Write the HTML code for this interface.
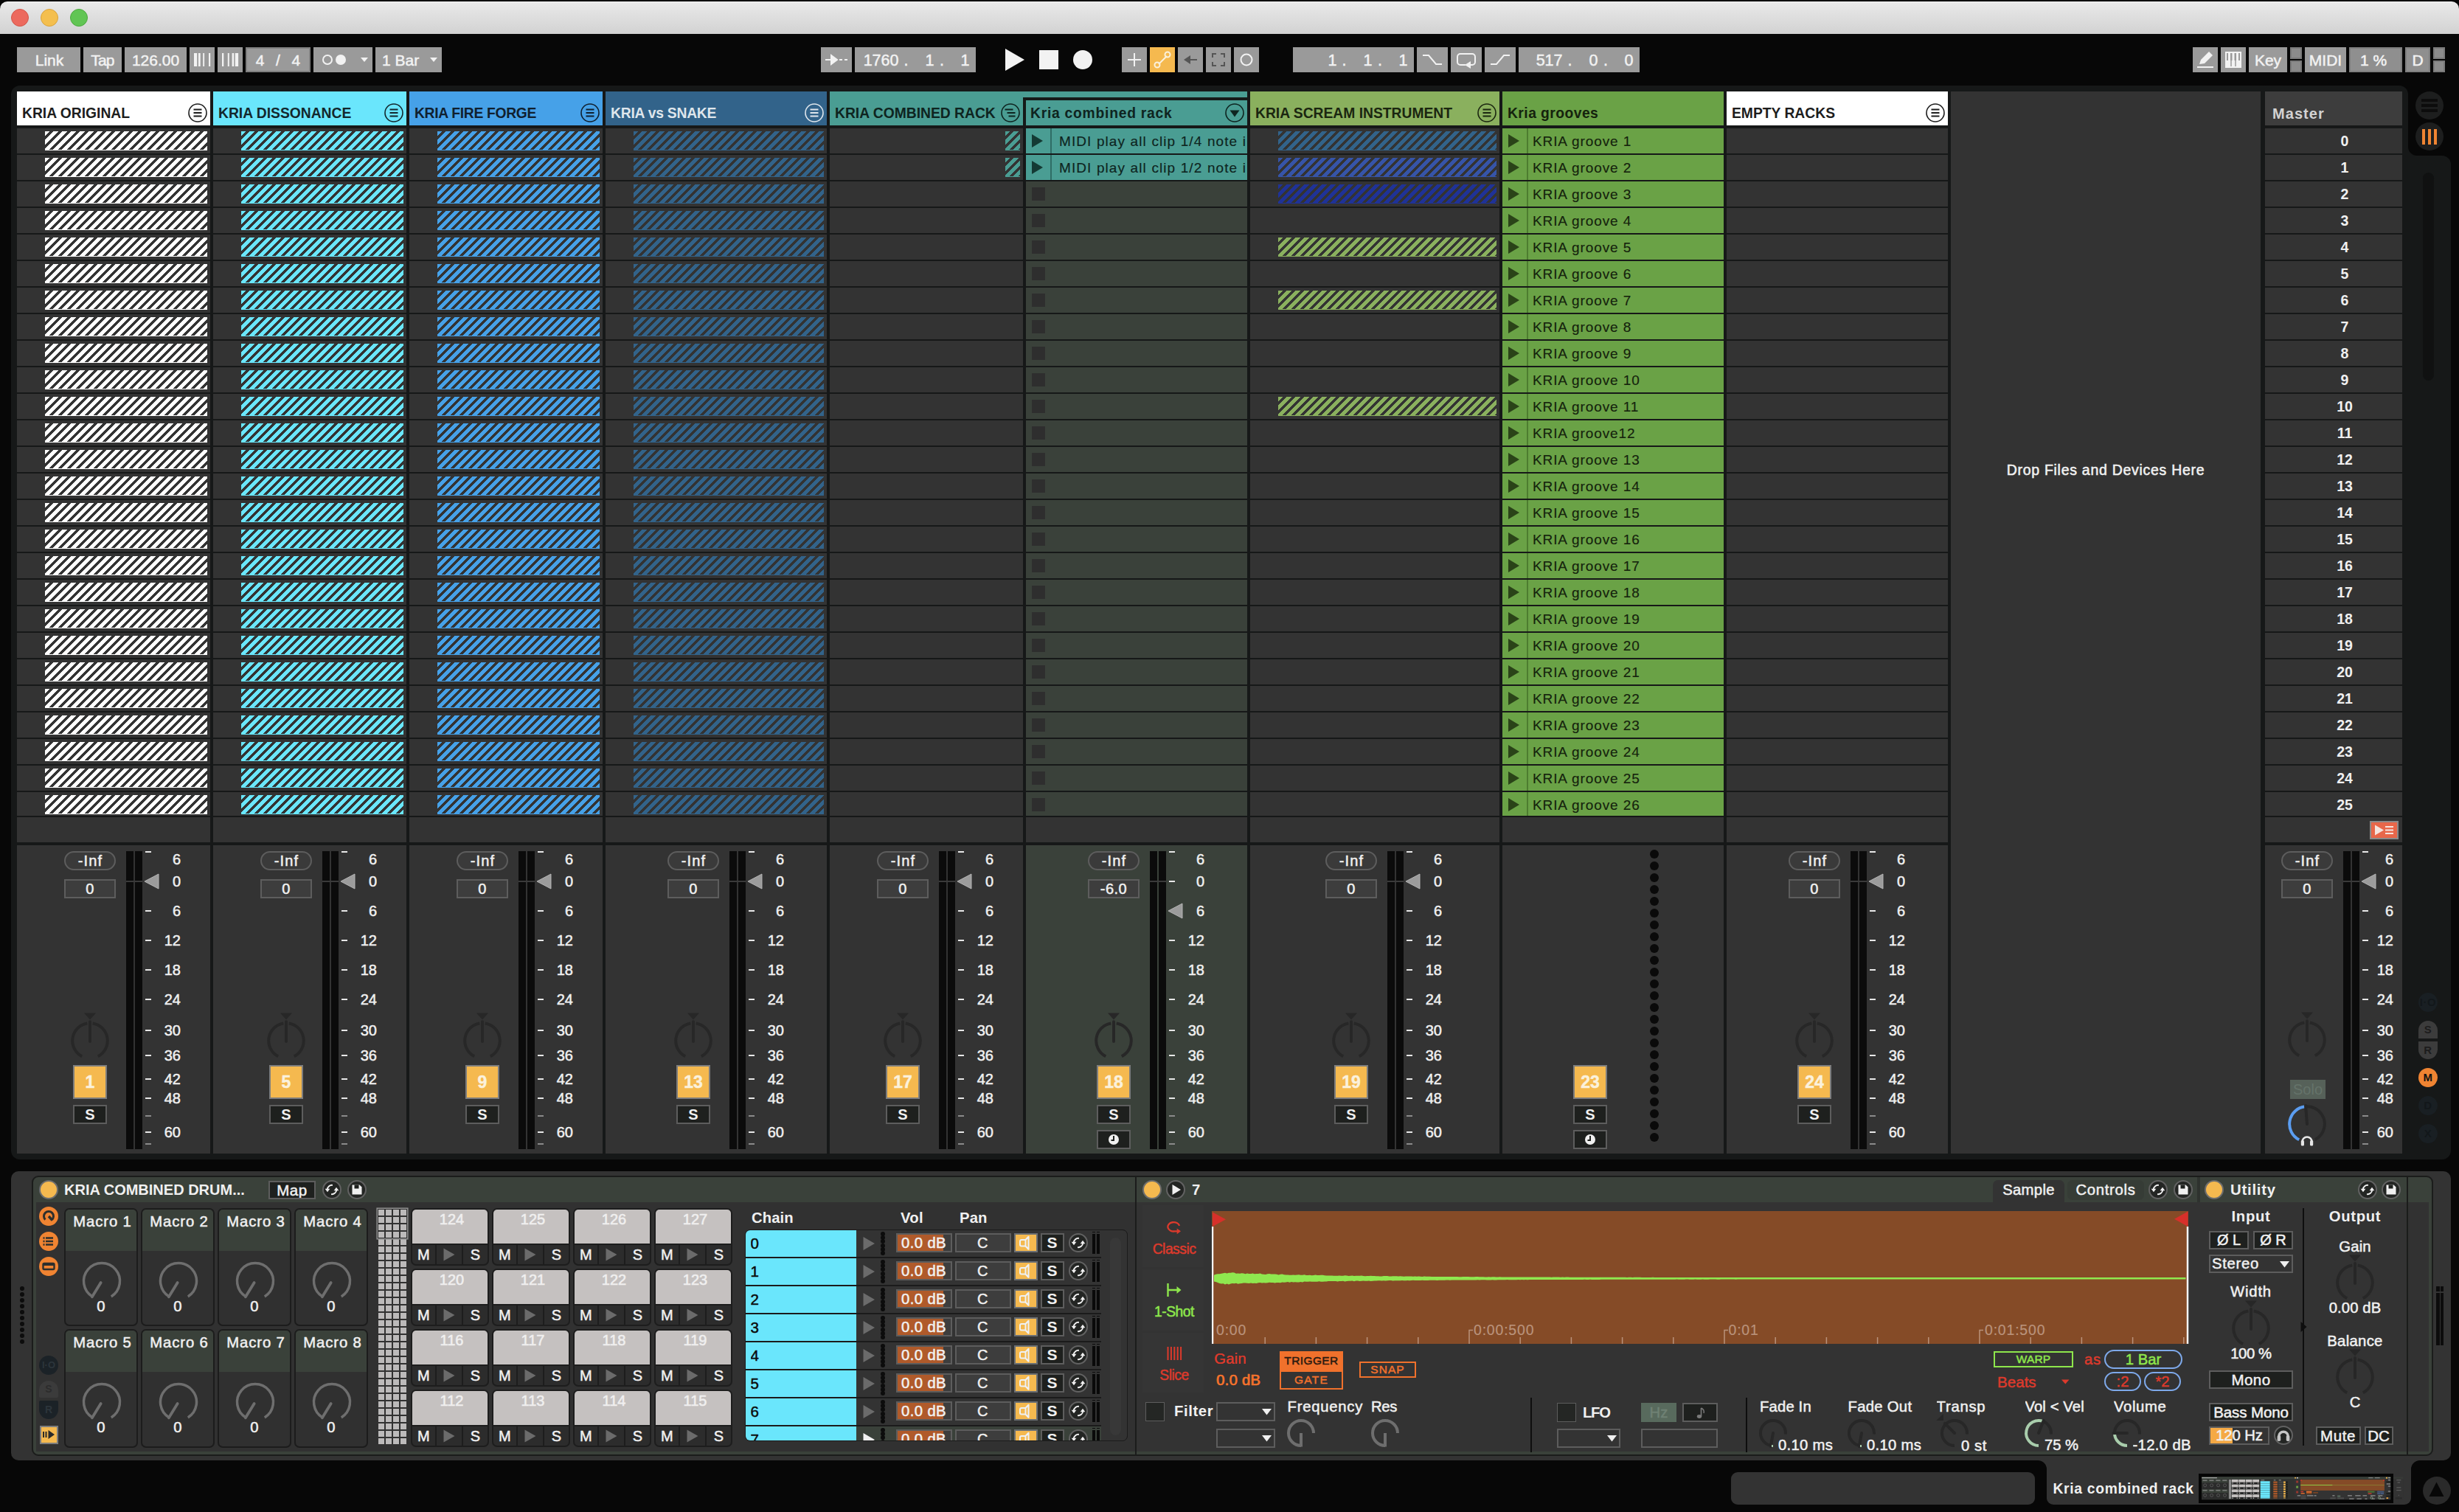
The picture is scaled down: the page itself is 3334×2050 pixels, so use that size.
<!DOCTYPE html><html><head><meta charset="utf-8"><title>Live</title><style>
html,body{margin:0;padding:0;background:#070707;}
body{width:3334px;height:2050px;position:relative;overflow:hidden;font-family:"Liberation Sans",sans-serif;font-size:19px;color:#f0f0f0;-webkit-text-stroke:.5px;}
div,svg{position:absolute;box-sizing:border-box;}
.t{white-space:nowrap;overflow:hidden;}
.c{text-align:center;}
.r{text-align:right;}
.b{font-weight:bold;-webkit-text-stroke:0;}
.ls{letter-spacing:.6px;}
.tb{background:#9a9a9a;color:#f2f2f2;font-size:21px;text-align:center;padding-top:1px;}
.slot{background:#333;}
.h{border-bottom:1.5px solid;}
.pill{border:2px solid #5d5d5d;border-radius:13px;background:#3a3a3a;text-align:center;font-size:20px;letter-spacing:1.2px;text-indent:1px;}
.vbox{border:2px solid #5d5d5d;background:#3d3d3d;text-align:center;font-size:20px;letter-spacing:.5px;}
.num{background:#f5b94f;border:2px solid #7d7d7d;text-align:center;font-size:23px;font-weight:bold;color:#fbf1dc;}
.sb{background:#1e201e;border:2px solid #5d5d5d;text-align:center;font-size:20px;font-weight:bold;-webkit-text-stroke:0;}
.sc{font-size:20px;text-align:right;}
.tk{background:#e8e8e8;height:2px;width:8px;}
.tkd{background:#8a8a8a;height:2px;width:8px;}
.mt{background:#0b0b0b;}
.mac{background:#303030;border:2px solid #1c1c1c;border-radius:7px;overflow:hidden;}
.mach{background:#3a413a;left:0;top:0;width:100%;height:56px;}
.pad{background:#c5c1c0;border-radius:5px 5px 0 0;color:#f0efef;-webkit-text-stroke:.6px;font-size:20px;text-align:center;}
.padb{background:#2c2c2c;text-align:center;font-size:20px;}
.dk{background:#1e201e;border:2px solid #5d5d5d;text-align:center;font-size:20px;}
.dd{border:2px solid #5d5d5d;background:#333;}
.lb{font-size:20px;letter-spacing:.5px;}
</style></head><body>
<div style="left:0px;top:2px;width:3334px;height:44px;background:linear-gradient(#e9e9e9,#d2d2d2);border-radius:10px 10px 0 0;border-top:1px solid #f4f4f4;"></div>
<div style="left:15px;top:12px;width:24px;height:24px;background:#ec6a5e;border:1px solid #d2564a;border-radius:50%;"></div>
<div style="left:55px;top:12px;width:24px;height:24px;background:#f4bf4f;border:1px solid #d9a33c;border-radius:50%;"></div>
<div style="left:95px;top:12px;width:24px;height:24px;background:#61c554;border:1px solid #4ca93f;border-radius:50%;"></div>
<div class="t tb " style="left:23px;top:64px;width:86px;height:34px;line-height:34px;padding-left:2px;">Link</div>
<div class="t tb " style="left:113px;top:64px;width:52px;height:34px;line-height:34px;letter-spacing:-.8px;">Tap</div>
<div class="t tb " style="left:169px;top:64px;width:84px;height:34px;line-height:34px;">126.00</div>
<div class="tb" style="left:257px;top:64px;width:34px;height:34px;"></div>
<svg style="left:257px;top:64px" width="34" height="34"><rect x="6" y="8" width="4.2" height="18" fill="#f2f2f2"/><rect x="12" y="8" width="2.7" height="18" fill="#f2f2f2"/><rect x="18.2" y="8" width="1.9" height="18" fill="#f2f2f2"/><rect x="26" y="8" width="2.2" height="18" fill="#f2f2f2"/></svg>
<div class="tb" style="left:295px;top:64px;width:34px;height:34px;"></div>
<svg style="left:295px;top:64px" width="34" height="34"><rect x="6" y="8" width="2.3" height="18" fill="#f2f2f2"/><rect x="13.8" y="8" width="2" height="18" fill="#f2f2f2"/><rect x="19.6" y="8" width="2.6" height="18" fill="#f2f2f2"/><rect x="23.8" y="8" width="4.3" height="18" fill="#f2f2f2"/></svg>
<div class="t tb" style="left:333px;top:64px;width:88px;height:34px;line-height:34px;border:2px solid #7f7f7f;line-height:30px;word-spacing:2px;">4&nbsp; /&nbsp; 4</div>
<div class="tb" style="left:425px;top:64px;width:80px;height:34px;"></div>
<svg style="left:425px;top:64px" width="80" height="34"><circle cx="19" cy="17" r="6" fill="none" stroke="#f2f2f2" stroke-width="2"/><circle cx="37" cy="17" r="7" fill="#f2f2f2"/><path d="M64 14h10l-5 6z" fill="#f2f2f2"/></svg>
<div class="t tb" style="left:509px;top:64px;width:90px;height:34px;line-height:34px;text-align:left;padding-left:9px;">1 Bar</div>
<svg style="left:509px;top:64px" width="90" height="34"><path d="M74 14h10l-5 6z" fill="#f2f2f2"/></svg>
<div class="tb" style="left:1113px;top:64px;width:42px;height:34px;"></div>
<svg style="left:1113px;top:64px" width="42" height="34"><path d="M6 17h14M14 11l8 6-8 6z" stroke="#f2f2f2" stroke-width="2" fill="#f2f2f2"/><path d="M25 17h4M32 17h4" stroke="#f2f2f2" stroke-width="2"/></svg>
<div class="tb" style="left:1159px;top:64px;width:164px;height:34px;"></div>
<div class="t tb" style="left:1159px;top:64px;width:164px;height:34px;line-height:34px;background:none;font-size:21.5px;"><span style="position:absolute;right:104.5px">1760</span><span style="position:absolute;left:66.5px">.</span><span style="position:absolute;right:56.5px">1</span><span style="position:absolute;left:115px">.</span><span style="position:absolute;right:8.5px">1</span></div>
<svg style="left:1355px;top:60px" width="130" height="42"><path d="M8 6v30l26-15z" fill="#f2f2f2"/><rect x="54" y="8" width="26" height="26" fill="#f2f2f2"/><circle cx="113" cy="21" r="13" fill="#f2f2f2"/></svg>
<div class="tb" style="left:1521px;top:64px;width:34px;height:34px;"></div>
<div class="tb" style="left:1559px;top:64px;width:34px;height:34px;background:#f5b94f;"></div>
<div class="tb" style="left:1597px;top:64px;width:34px;height:34px;"></div>
<div class="tb" style="left:1635px;top:64px;width:34px;height:34px;"></div>
<div class="tb" style="left:1673px;top:64px;width:34px;height:34px;"></div>
<svg style="left:1521px;top:64px" width="34" height="34"><path d="M17 8v18M8 17h18" stroke="#f2f2f2" stroke-width="2"/></svg>
<svg style="left:1559px;top:64px" width="34" height="34"><path d="M12 23L23 12" stroke="#fbf1dc" stroke-width="2"/><circle cx="10" cy="24" r="3.5" fill="none" stroke="#fbf1dc" stroke-width="2"/><circle cx="24" cy="10" r="3.5" fill="none" stroke="#fbf1dc" stroke-width="2"/></svg>
<svg style="left:1597px;top:64px" width="34" height="34"><path d="M26 17H14" stroke="#555" stroke-width="2"/><path d="M17 11l-9 6 9 6z" fill="#555"/></svg>
<svg style="left:1635px;top:64px" width="34" height="34"><path d="M9 14V9h5M20 9h5v5M25 20v5h-5M14 25H9v-5" stroke="#555" stroke-width="2" fill="none"/></svg>
<svg style="left:1673px;top:64px" width="34" height="34"><circle cx="17" cy="17" r="7.5" fill="none" stroke="#f2f2f2" stroke-width="2"/></svg>
<div class="tb" style="left:1753px;top:64px;width:164px;height:34px;"></div>
<div class="t tb" style="left:1753px;top:64px;width:164px;height:34px;line-height:34px;background:none;font-size:21.5px;"><span style="position:absolute;right:104.5px">1</span><span style="position:absolute;left:66.5px">.</span><span style="position:absolute;right:56.5px">1</span><span style="position:absolute;left:115px">.</span><span style="position:absolute;right:8.5px">1</span></div>
<div class="tb" style="left:1921px;top:64px;width:42px;height:34px;"></div>
<svg style="left:1921px;top:64px" width="42" height="34"><path d="M8 11h8l10 12h8" stroke="#f2f2f2" stroke-width="2" fill="none"/></svg>
<div class="tb" style="left:1967px;top:64px;width:42px;height:34px;"></div>
<svg style="left:1967px;top:64px" width="42" height="34"><path d="M20 24h-7a4 4 0 0 1-4-4v-7a4 4 0 0 1 4-4h16a4 4 0 0 1 4 4v7a4 4 0 0 1-4 4h-2" stroke="#f2f2f2" stroke-width="2" fill="none"/><path d="M27 19v10l-8-5z" fill="#f2f2f2"/></svg>
<div class="tb" style="left:2013px;top:64px;width:42px;height:34px;"></div>
<svg style="left:2013px;top:64px" width="42" height="34"><path d="M8 23h8l10-12h8" stroke="#f2f2f2" stroke-width="2" fill="none"/></svg>
<div class="tb" style="left:2059px;top:64px;width:164px;height:34px;"></div>
<div class="t tb" style="left:2059px;top:64px;width:164px;height:34px;line-height:34px;background:none;font-size:21.5px;"><span style="position:absolute;right:104.5px">517</span><span style="position:absolute;left:66.5px">.</span><span style="position:absolute;right:56.5px">0</span><span style="position:absolute;left:115px">.</span><span style="position:absolute;right:8.5px">0</span></div>
<div class="tb" style="left:2973px;top:64px;width:34px;height:34px;"></div>
<svg style="left:2973px;top:64px" width="34" height="34"><path d="M6 27h22" stroke="#f2f2f2" stroke-width="2"/><path d="M9 23l2-6 11-11 5 5-11 11z" fill="#f2f2f2"/></svg>
<div class="tb" style="left:3011px;top:64px;width:34px;height:34px;"></div>
<svg style="left:3011px;top:64px" width="34" height="34"><rect x="7" y="7" width="20" height="20" fill="none" stroke="#f2f2f2" stroke-width="2"/><path d="M8 18h18v8H8zM10 8h3v10h-3zM15.5 8h3v10h-3zM21 8h3v10h-3z" fill="#f2f2f2"/><path d="M14 18v8M20 18v8" stroke="#9a9a9a" stroke-width="1.5"/></svg>
<div class="t tb " style="left:3049px;top:64px;width:52px;height:34px;line-height:34px;">Key</div>
<div style="left:3105px;top:64px;width:16px;height:16px;background:#8b8b8b;border:2px solid #7a7a7a;"></div>
<div style="left:3105px;top:82px;width:16px;height:16px;background:#8b8b8b;border:2px solid #7a7a7a;"></div>
<div style="left:3299px;top:64px;width:16px;height:16px;background:#8b8b8b;border:2px solid #7a7a7a;"></div>
<div style="left:3299px;top:82px;width:16px;height:16px;background:#8b8b8b;border:2px solid #7a7a7a;"></div>
<div class="t tb " style="left:3125px;top:64px;width:56px;height:34px;line-height:34px;">MIDI</div>
<div class="t tb" style="left:3185px;top:64px;width:72px;height:34px;line-height:34px;border:2px solid #7f7f7f;line-height:30px;background:#8f8f8f;padding-right:6px;">1 %</div>
<div class="t tb" style="left:3261px;top:64px;width:34px;height:34px;line-height:34px;border:2px solid #7f7f7f;line-height:30px;background:#8f8f8f;">D</div>
<div style="left:15px;top:116px;width:3250px;height:1456px;background:#161818;border-radius:12px 12px 0 12px;"></div>
<div style="left:3255px;top:211px;width:68px;height:1361px;background:#161818;border-radius:0 12px 12px 0;"></div>
<svg style="left:3265px;top:199px" width="12" height="12"><path d="M0 0v12h12A12 12 0 0 1 0 0z" fill="#161818"/></svg>
<div style="left:23px;top:124px;width:262px;height:46px;background:#ffffff;"></div>
<div class="t b" style="left:30px;top:137px;width:222px;height:34px;line-height:34px;color:#1d1d1d;font-size:19.3px;">KRIA ORIGINAL</div>
<svg style="left:254px;top:139px" width="28" height="28"><circle cx="14" cy="14" r="12" fill="none" stroke="#1d1d1d" stroke-width="1.6"/><path d="M8.5 9.5h11M8.5 14h11M8.5 18.5h11" stroke="#1d1d1d" stroke-width="2"/></svg>
<div style="left:289px;top:124px;width:262px;height:46px;background:#6ae6fc;"></div>
<div class="t b" style="left:296px;top:137px;width:222px;height:34px;line-height:34px;color:#13272c;font-size:19.3px;">KRIA DISSONANCE</div>
<svg style="left:520px;top:139px" width="28" height="28"><circle cx="14" cy="14" r="12" fill="none" stroke="#13272c" stroke-width="1.6"/><path d="M8.5 9.5h11M8.5 14h11M8.5 18.5h11" stroke="#13272c" stroke-width="2"/></svg>
<div style="left:555px;top:124px;width:262px;height:46px;background:#46a1e8;"></div>
<div class="t b" style="left:562px;top:137px;width:222px;height:34px;line-height:34px;color:#10202f;font-size:19.3px;letter-spacing:-.3px;">KRIA FIRE FORGE</div>
<svg style="left:786px;top:139px" width="28" height="28"><circle cx="14" cy="14" r="12" fill="none" stroke="#10202f" stroke-width="1.6"/><path d="M8.5 9.5h11M8.5 14h11M8.5 18.5h11" stroke="#10202f" stroke-width="2"/></svg>
<div style="left:821px;top:124px;width:300px;height:46px;background:#32638a;"></div>
<div class="t b" style="left:828px;top:137px;width:260px;height:34px;line-height:34px;color:#dfe6ec;font-size:19.3px;letter-spacing:-.22px;">KRIA vs SNAKE</div>
<svg style="left:1090px;top:139px" width="28" height="28"><circle cx="14" cy="14" r="12" fill="none" stroke="#dfe6ec" stroke-width="1.6"/><path d="M8.5 9.5h11M8.5 14h11M8.5 18.5h11" stroke="#dfe6ec" stroke-width="2"/></svg>
<div style="left:1125px;top:124px;width:566px;height:46px;background:#4a9d93;"></div>
<div style="left:1387px;top:132px;width:304px;height:38px;background:#151a19;"></div>
<div style="left:1391px;top:136px;width:300px;height:34px;background:#4a9d93;"></div>
<div class="t b" style="left:1132px;top:137px;width:230px;height:34px;line-height:34px;color:#0e2420;font-size:19.3px;">KRIA COMBINED RACK</div>
<svg style="left:1356px;top:139px" width="28" height="28"><circle cx="14" cy="14" r="12" fill="none" stroke="#0e2420" stroke-width="1.6"/><path d="M6.5 9.5h11M9.5 14h11M11.5 18.5h9" stroke="#0e2420" stroke-width="2"/></svg>
<div class="t b" style="left:1397px;top:137px;width:250px;height:34px;line-height:34px;color:#0e2420;font-size:19.3px;letter-spacing:.75px;">Kria combined rack</div>
<svg style="left:1660px;top:139px" width="28" height="28"><circle cx="14" cy="14" r="12" fill="none" stroke="#0e2420" stroke-width="1.6"/><path d="M7.5 10.5h13l-6.5 9z" fill="#0e2420"/></svg>
<div style="left:1695px;top:124px;width:338px;height:46px;background:#8ab05e;"></div>
<div class="t b" style="left:1702px;top:137px;width:298px;height:34px;line-height:34px;color:#1b2610;font-size:19.3px;">KRIA SCREAM INSTRUMENT</div>
<svg style="left:2002px;top:139px" width="28" height="28"><circle cx="14" cy="14" r="12" fill="none" stroke="#1b2610" stroke-width="1.6"/><path d="M8.5 9.5h11M8.5 14h11M8.5 18.5h11" stroke="#1b2610" stroke-width="2"/></svg>
<div style="left:2037px;top:124px;width:300px;height:46px;background:#6aa246;"></div>
<div class="t b" style="left:2044px;top:137px;width:260px;height:34px;line-height:34px;color:#15230d;font-size:19.3px;letter-spacing:.45px;">Kria grooves</div>
<div style="left:2341px;top:124px;width:300px;height:46px;background:#ffffff;"></div>
<div class="t b" style="left:2348px;top:137px;width:260px;height:34px;line-height:34px;color:#1d1d1d;font-size:19.3px;">EMPTY RACKS</div>
<svg style="left:2610px;top:139px" width="28" height="28"><circle cx="14" cy="14" r="12" fill="none" stroke="#1d1d1d" stroke-width="1.6"/><path d="M8.5 9.5h11M8.5 14h11M8.5 18.5h11" stroke="#1d1d1d" stroke-width="2"/></svg>
<div class="slot" style="left:2645px;top:124px;width:420px;height:1440px;"></div>
<div class="t c" style="left:2645px;top:620px;width:420px;height:34px;line-height:34px;font-size:19.5px;letter-spacing:.72px;-webkit-text-stroke:.55px;">Drop Files and Devices Here</div>
<div style="left:3071px;top:124px;width:186px;height:46px;background:#3d3d3d;"></div>
<div class="t b" style="left:3081px;top:137px;width:150px;height:34px;line-height:34px;color:#d2d2d2;font-size:20px;letter-spacing:1.05px;">Master</div>
<div class="slot" style="left:23px;top:174px;width:262px;height:34px;"></div>
<div class="h" style="left:61px;top:178px;width:220px;height:26px;border-color:#ffffff;background:repeating-linear-gradient(135deg,#ffffff 0,#ffffff 4.3px,#333 4.3px,#333 7.9px,#ffffff 7.9px,#ffffff 8.485px);"></div>
<div class="slot" style="left:289px;top:174px;width:262px;height:34px;"></div>
<div class="h" style="left:327px;top:178px;width:220px;height:26px;border-color:#6ae6fc;background:repeating-linear-gradient(135deg,#6ae6fc 0,#6ae6fc 4.3px,#333 4.3px,#333 7.9px,#6ae6fc 7.9px,#6ae6fc 8.485px);"></div>
<div class="slot" style="left:555px;top:174px;width:262px;height:34px;"></div>
<div class="h" style="left:593px;top:178px;width:220px;height:26px;border-color:#46a1e8;background:repeating-linear-gradient(135deg,#46a1e8 0,#46a1e8 4.3px,#333 4.3px,#333 7.9px,#46a1e8 7.9px,#46a1e8 8.485px);"></div>
<div class="slot" style="left:821px;top:174px;width:300px;height:34px;"></div>
<div class="h" style="left:859px;top:178px;width:258px;height:26px;border-color:#32638a;background:repeating-linear-gradient(135deg,#32638a 0,#32638a 4.3px,#333 4.3px,#333 7.9px,#32638a 7.9px,#32638a 8.485px);"></div>
<div class="slot" style="left:1125px;top:174px;width:262px;height:34px;"></div>
<div class="h" style="left:1363px;top:178px;width:20px;height:26px;border-color:#4a9d93;background:repeating-linear-gradient(135deg,#4a9d93 0,#4a9d93 4.3px,#333 4.3px,#333 7.9px,#4a9d93 7.9px,#4a9d93 8.485px);"></div>
<div style="left:1391px;top:174px;width:300px;height:34px;background:#4a9d93;"></div>
<div style="left:1424px;top:174px;width:1.5px;height:34px;background:#2f6d66;"></div>
<svg style="left:1399px;top:182px" width="16" height="18"><path d="M0 0v18l15-9z" fill="#143a34"/></svg>
<div class="t" style="left:1436px;top:174px;width:255px;height:34px;line-height:34px;color:#0e2420;letter-spacing:1.05px;word-spacing:.3px;padding-top:1px;-webkit-text-stroke:.15px;">MIDI play all clip 1/4 note i</div>
<div class="slot" style="left:1695px;top:174px;width:338px;height:34px;"></div>
<div class="h" style="left:1733px;top:178px;width:296px;height:26px;border-color:#32638a;background:repeating-linear-gradient(135deg,#32638a 0,#32638a 4.3px,#333 4.3px,#333 7.9px,#32638a 7.9px,#32638a 8.485px);"></div>
<div style="left:2037px;top:174px;width:300px;height:34px;background:#6aa246;"></div>
<div style="left:2070px;top:174px;width:1.5px;height:34px;background:#4d7d30;"></div>
<svg style="left:2045px;top:182px" width="16" height="18"><path d="M0 0v18l15-9z" fill="#2a4318"/></svg>
<div class="t" style="left:2078px;top:174px;width:259px;height:34px;line-height:34px;color:#15230d;letter-spacing:.9px;padding-top:1px;-webkit-text-stroke:.15px;">KRIA groove 1</div>
<div class="slot" style="left:2341px;top:174px;width:300px;height:34px;"></div>
<div class="slot" style="left:3071px;top:174px;width:186px;height:34px;"></div>
<div class="t b" style="left:3071px;top:174px;width:186px;height:34px;line-height:34px;text-align:center;padding-left:30px;font-size:19.5px;">0</div>
<div class="slot" style="left:23px;top:210px;width:262px;height:34px;"></div>
<div class="h" style="left:61px;top:214px;width:220px;height:26px;border-color:#ffffff;background:repeating-linear-gradient(135deg,#ffffff 0,#ffffff 4.3px,#333 4.3px,#333 7.9px,#ffffff 7.9px,#ffffff 8.485px);"></div>
<div class="slot" style="left:289px;top:210px;width:262px;height:34px;"></div>
<div class="h" style="left:327px;top:214px;width:220px;height:26px;border-color:#6ae6fc;background:repeating-linear-gradient(135deg,#6ae6fc 0,#6ae6fc 4.3px,#333 4.3px,#333 7.9px,#6ae6fc 7.9px,#6ae6fc 8.485px);"></div>
<div class="slot" style="left:555px;top:210px;width:262px;height:34px;"></div>
<div class="h" style="left:593px;top:214px;width:220px;height:26px;border-color:#46a1e8;background:repeating-linear-gradient(135deg,#46a1e8 0,#46a1e8 4.3px,#333 4.3px,#333 7.9px,#46a1e8 7.9px,#46a1e8 8.485px);"></div>
<div class="slot" style="left:821px;top:210px;width:300px;height:34px;"></div>
<div class="h" style="left:859px;top:214px;width:258px;height:26px;border-color:#32638a;background:repeating-linear-gradient(135deg,#32638a 0,#32638a 4.3px,#333 4.3px,#333 7.9px,#32638a 7.9px,#32638a 8.485px);"></div>
<div class="slot" style="left:1125px;top:210px;width:262px;height:34px;"></div>
<div class="h" style="left:1363px;top:214px;width:20px;height:26px;border-color:#4a9d93;background:repeating-linear-gradient(135deg,#4a9d93 0,#4a9d93 4.3px,#333 4.3px,#333 7.9px,#4a9d93 7.9px,#4a9d93 8.485px);"></div>
<div style="left:1391px;top:210px;width:300px;height:34px;background:#4a9d93;"></div>
<div style="left:1424px;top:210px;width:1.5px;height:34px;background:#2f6d66;"></div>
<svg style="left:1399px;top:218px" width="16" height="18"><path d="M0 0v18l15-9z" fill="#143a34"/></svg>
<div class="t" style="left:1436px;top:210px;width:255px;height:34px;line-height:34px;color:#0e2420;letter-spacing:1.05px;word-spacing:.3px;padding-top:1px;-webkit-text-stroke:.15px;">MIDI play all clip 1/2 note i</div>
<div class="slot" style="left:1695px;top:210px;width:338px;height:34px;"></div>
<div class="h" style="left:1733px;top:214px;width:296px;height:26px;border-color:#3654a8;background:repeating-linear-gradient(135deg,#3654a8 0,#3654a8 4.3px,#333 4.3px,#333 7.9px,#3654a8 7.9px,#3654a8 8.485px);"></div>
<div style="left:2037px;top:210px;width:300px;height:34px;background:#6aa246;"></div>
<div style="left:2070px;top:210px;width:1.5px;height:34px;background:#4d7d30;"></div>
<svg style="left:2045px;top:218px" width="16" height="18"><path d="M0 0v18l15-9z" fill="#2a4318"/></svg>
<div class="t" style="left:2078px;top:210px;width:259px;height:34px;line-height:34px;color:#15230d;letter-spacing:.9px;padding-top:1px;-webkit-text-stroke:.15px;">KRIA groove 2</div>
<div class="slot" style="left:2341px;top:210px;width:300px;height:34px;"></div>
<div class="slot" style="left:3071px;top:210px;width:186px;height:34px;"></div>
<div class="t b" style="left:3071px;top:210px;width:186px;height:34px;line-height:34px;text-align:center;padding-left:30px;font-size:19.5px;">1</div>
<div class="slot" style="left:23px;top:246px;width:262px;height:34px;"></div>
<div class="h" style="left:61px;top:250px;width:220px;height:26px;border-color:#ffffff;background:repeating-linear-gradient(135deg,#ffffff 0,#ffffff 4.3px,#333 4.3px,#333 7.9px,#ffffff 7.9px,#ffffff 8.485px);"></div>
<div class="slot" style="left:289px;top:246px;width:262px;height:34px;"></div>
<div class="h" style="left:327px;top:250px;width:220px;height:26px;border-color:#6ae6fc;background:repeating-linear-gradient(135deg,#6ae6fc 0,#6ae6fc 4.3px,#333 4.3px,#333 7.9px,#6ae6fc 7.9px,#6ae6fc 8.485px);"></div>
<div class="slot" style="left:555px;top:246px;width:262px;height:34px;"></div>
<div class="h" style="left:593px;top:250px;width:220px;height:26px;border-color:#46a1e8;background:repeating-linear-gradient(135deg,#46a1e8 0,#46a1e8 4.3px,#333 4.3px,#333 7.9px,#46a1e8 7.9px,#46a1e8 8.485px);"></div>
<div class="slot" style="left:821px;top:246px;width:300px;height:34px;"></div>
<div class="h" style="left:859px;top:250px;width:258px;height:26px;border-color:#32638a;background:repeating-linear-gradient(135deg,#32638a 0,#32638a 4.3px,#333 4.3px,#333 7.9px,#32638a 7.9px,#32638a 8.485px);"></div>
<div class="slot" style="left:1125px;top:246px;width:262px;height:34px;"></div>
<div style="left:1391px;top:246px;width:300px;height:34px;background:#3a413a;"></div>
<div style="left:1399px;top:254px;width:18px;height:18px;background:#2e2e2e;"></div>
<div class="slot" style="left:1695px;top:246px;width:338px;height:34px;"></div>
<div class="h" style="left:1733px;top:250px;width:296px;height:26px;border-color:#1f3297;background:repeating-linear-gradient(135deg,#1f3297 0,#1f3297 4.3px,#333 4.3px,#333 7.9px,#1f3297 7.9px,#1f3297 8.485px);"></div>
<div style="left:2037px;top:246px;width:300px;height:34px;background:#6aa246;"></div>
<div style="left:2070px;top:246px;width:1.5px;height:34px;background:#4d7d30;"></div>
<svg style="left:2045px;top:254px" width="16" height="18"><path d="M0 0v18l15-9z" fill="#2a4318"/></svg>
<div class="t" style="left:2078px;top:246px;width:259px;height:34px;line-height:34px;color:#15230d;letter-spacing:.9px;padding-top:1px;-webkit-text-stroke:.15px;">KRIA groove 3</div>
<div class="slot" style="left:2341px;top:246px;width:300px;height:34px;"></div>
<div class="slot" style="left:3071px;top:246px;width:186px;height:34px;"></div>
<div class="t b" style="left:3071px;top:246px;width:186px;height:34px;line-height:34px;text-align:center;padding-left:30px;font-size:19.5px;">2</div>
<div class="slot" style="left:23px;top:282px;width:262px;height:34px;"></div>
<div class="h" style="left:61px;top:286px;width:220px;height:26px;border-color:#ffffff;background:repeating-linear-gradient(135deg,#ffffff 0,#ffffff 4.3px,#333 4.3px,#333 7.9px,#ffffff 7.9px,#ffffff 8.485px);"></div>
<div class="slot" style="left:289px;top:282px;width:262px;height:34px;"></div>
<div class="h" style="left:327px;top:286px;width:220px;height:26px;border-color:#6ae6fc;background:repeating-linear-gradient(135deg,#6ae6fc 0,#6ae6fc 4.3px,#333 4.3px,#333 7.9px,#6ae6fc 7.9px,#6ae6fc 8.485px);"></div>
<div class="slot" style="left:555px;top:282px;width:262px;height:34px;"></div>
<div class="h" style="left:593px;top:286px;width:220px;height:26px;border-color:#46a1e8;background:repeating-linear-gradient(135deg,#46a1e8 0,#46a1e8 4.3px,#333 4.3px,#333 7.9px,#46a1e8 7.9px,#46a1e8 8.485px);"></div>
<div class="slot" style="left:821px;top:282px;width:300px;height:34px;"></div>
<div class="h" style="left:859px;top:286px;width:258px;height:26px;border-color:#32638a;background:repeating-linear-gradient(135deg,#32638a 0,#32638a 4.3px,#333 4.3px,#333 7.9px,#32638a 7.9px,#32638a 8.485px);"></div>
<div class="slot" style="left:1125px;top:282px;width:262px;height:34px;"></div>
<div style="left:1391px;top:282px;width:300px;height:34px;background:#3a413a;"></div>
<div style="left:1399px;top:290px;width:18px;height:18px;background:#2e2e2e;"></div>
<div class="slot" style="left:1695px;top:282px;width:338px;height:34px;"></div>
<div style="left:2037px;top:282px;width:300px;height:34px;background:#6aa246;"></div>
<div style="left:2070px;top:282px;width:1.5px;height:34px;background:#4d7d30;"></div>
<svg style="left:2045px;top:290px" width="16" height="18"><path d="M0 0v18l15-9z" fill="#2a4318"/></svg>
<div class="t" style="left:2078px;top:282px;width:259px;height:34px;line-height:34px;color:#15230d;letter-spacing:.9px;padding-top:1px;-webkit-text-stroke:.15px;">KRIA groove 4</div>
<div class="slot" style="left:2341px;top:282px;width:300px;height:34px;"></div>
<div class="slot" style="left:3071px;top:282px;width:186px;height:34px;"></div>
<div class="t b" style="left:3071px;top:282px;width:186px;height:34px;line-height:34px;text-align:center;padding-left:30px;font-size:19.5px;">3</div>
<div class="slot" style="left:23px;top:318px;width:262px;height:34px;"></div>
<div class="h" style="left:61px;top:322px;width:220px;height:26px;border-color:#ffffff;background:repeating-linear-gradient(135deg,#ffffff 0,#ffffff 4.3px,#333 4.3px,#333 7.9px,#ffffff 7.9px,#ffffff 8.485px);"></div>
<div class="slot" style="left:289px;top:318px;width:262px;height:34px;"></div>
<div class="h" style="left:327px;top:322px;width:220px;height:26px;border-color:#6ae6fc;background:repeating-linear-gradient(135deg,#6ae6fc 0,#6ae6fc 4.3px,#333 4.3px,#333 7.9px,#6ae6fc 7.9px,#6ae6fc 8.485px);"></div>
<div class="slot" style="left:555px;top:318px;width:262px;height:34px;"></div>
<div class="h" style="left:593px;top:322px;width:220px;height:26px;border-color:#46a1e8;background:repeating-linear-gradient(135deg,#46a1e8 0,#46a1e8 4.3px,#333 4.3px,#333 7.9px,#46a1e8 7.9px,#46a1e8 8.485px);"></div>
<div class="slot" style="left:821px;top:318px;width:300px;height:34px;"></div>
<div class="h" style="left:859px;top:322px;width:258px;height:26px;border-color:#32638a;background:repeating-linear-gradient(135deg,#32638a 0,#32638a 4.3px,#333 4.3px,#333 7.9px,#32638a 7.9px,#32638a 8.485px);"></div>
<div class="slot" style="left:1125px;top:318px;width:262px;height:34px;"></div>
<div style="left:1391px;top:318px;width:300px;height:34px;background:#3a413a;"></div>
<div style="left:1399px;top:326px;width:18px;height:18px;background:#2e2e2e;"></div>
<div class="slot" style="left:1695px;top:318px;width:338px;height:34px;"></div>
<div class="h" style="left:1733px;top:322px;width:296px;height:26px;border-color:#8ab05e;background:repeating-linear-gradient(135deg,#8ab05e 0,#8ab05e 4.3px,#333 4.3px,#333 7.9px,#8ab05e 7.9px,#8ab05e 8.485px);"></div>
<div style="left:2037px;top:318px;width:300px;height:34px;background:#6aa246;"></div>
<div style="left:2070px;top:318px;width:1.5px;height:34px;background:#4d7d30;"></div>
<svg style="left:2045px;top:326px" width="16" height="18"><path d="M0 0v18l15-9z" fill="#2a4318"/></svg>
<div class="t" style="left:2078px;top:318px;width:259px;height:34px;line-height:34px;color:#15230d;letter-spacing:.9px;padding-top:1px;-webkit-text-stroke:.15px;">KRIA groove 5</div>
<div class="slot" style="left:2341px;top:318px;width:300px;height:34px;"></div>
<div class="slot" style="left:3071px;top:318px;width:186px;height:34px;"></div>
<div class="t b" style="left:3071px;top:318px;width:186px;height:34px;line-height:34px;text-align:center;padding-left:30px;font-size:19.5px;">4</div>
<div class="slot" style="left:23px;top:354px;width:262px;height:34px;"></div>
<div class="h" style="left:61px;top:358px;width:220px;height:26px;border-color:#ffffff;background:repeating-linear-gradient(135deg,#ffffff 0,#ffffff 4.3px,#333 4.3px,#333 7.9px,#ffffff 7.9px,#ffffff 8.485px);"></div>
<div class="slot" style="left:289px;top:354px;width:262px;height:34px;"></div>
<div class="h" style="left:327px;top:358px;width:220px;height:26px;border-color:#6ae6fc;background:repeating-linear-gradient(135deg,#6ae6fc 0,#6ae6fc 4.3px,#333 4.3px,#333 7.9px,#6ae6fc 7.9px,#6ae6fc 8.485px);"></div>
<div class="slot" style="left:555px;top:354px;width:262px;height:34px;"></div>
<div class="h" style="left:593px;top:358px;width:220px;height:26px;border-color:#46a1e8;background:repeating-linear-gradient(135deg,#46a1e8 0,#46a1e8 4.3px,#333 4.3px,#333 7.9px,#46a1e8 7.9px,#46a1e8 8.485px);"></div>
<div class="slot" style="left:821px;top:354px;width:300px;height:34px;"></div>
<div class="h" style="left:859px;top:358px;width:258px;height:26px;border-color:#32638a;background:repeating-linear-gradient(135deg,#32638a 0,#32638a 4.3px,#333 4.3px,#333 7.9px,#32638a 7.9px,#32638a 8.485px);"></div>
<div class="slot" style="left:1125px;top:354px;width:262px;height:34px;"></div>
<div style="left:1391px;top:354px;width:300px;height:34px;background:#3a413a;"></div>
<div style="left:1399px;top:362px;width:18px;height:18px;background:#2e2e2e;"></div>
<div class="slot" style="left:1695px;top:354px;width:338px;height:34px;"></div>
<div style="left:2037px;top:354px;width:300px;height:34px;background:#6aa246;"></div>
<div style="left:2070px;top:354px;width:1.5px;height:34px;background:#4d7d30;"></div>
<svg style="left:2045px;top:362px" width="16" height="18"><path d="M0 0v18l15-9z" fill="#2a4318"/></svg>
<div class="t" style="left:2078px;top:354px;width:259px;height:34px;line-height:34px;color:#15230d;letter-spacing:.9px;padding-top:1px;-webkit-text-stroke:.15px;">KRIA groove 6</div>
<div class="slot" style="left:2341px;top:354px;width:300px;height:34px;"></div>
<div class="slot" style="left:3071px;top:354px;width:186px;height:34px;"></div>
<div class="t b" style="left:3071px;top:354px;width:186px;height:34px;line-height:34px;text-align:center;padding-left:30px;font-size:19.5px;">5</div>
<div class="slot" style="left:23px;top:390px;width:262px;height:34px;"></div>
<div class="h" style="left:61px;top:394px;width:220px;height:26px;border-color:#ffffff;background:repeating-linear-gradient(135deg,#ffffff 0,#ffffff 4.3px,#333 4.3px,#333 7.9px,#ffffff 7.9px,#ffffff 8.485px);"></div>
<div class="slot" style="left:289px;top:390px;width:262px;height:34px;"></div>
<div class="h" style="left:327px;top:394px;width:220px;height:26px;border-color:#6ae6fc;background:repeating-linear-gradient(135deg,#6ae6fc 0,#6ae6fc 4.3px,#333 4.3px,#333 7.9px,#6ae6fc 7.9px,#6ae6fc 8.485px);"></div>
<div class="slot" style="left:555px;top:390px;width:262px;height:34px;"></div>
<div class="h" style="left:593px;top:394px;width:220px;height:26px;border-color:#46a1e8;background:repeating-linear-gradient(135deg,#46a1e8 0,#46a1e8 4.3px,#333 4.3px,#333 7.9px,#46a1e8 7.9px,#46a1e8 8.485px);"></div>
<div class="slot" style="left:821px;top:390px;width:300px;height:34px;"></div>
<div class="h" style="left:859px;top:394px;width:258px;height:26px;border-color:#32638a;background:repeating-linear-gradient(135deg,#32638a 0,#32638a 4.3px,#333 4.3px,#333 7.9px,#32638a 7.9px,#32638a 8.485px);"></div>
<div class="slot" style="left:1125px;top:390px;width:262px;height:34px;"></div>
<div style="left:1391px;top:390px;width:300px;height:34px;background:#3a413a;"></div>
<div style="left:1399px;top:398px;width:18px;height:18px;background:#2e2e2e;"></div>
<div class="slot" style="left:1695px;top:390px;width:338px;height:34px;"></div>
<div class="h" style="left:1733px;top:394px;width:296px;height:26px;border-color:#8ab05e;background:repeating-linear-gradient(135deg,#8ab05e 0,#8ab05e 4.3px,#333 4.3px,#333 7.9px,#8ab05e 7.9px,#8ab05e 8.485px);"></div>
<div style="left:2037px;top:390px;width:300px;height:34px;background:#6aa246;"></div>
<div style="left:2070px;top:390px;width:1.5px;height:34px;background:#4d7d30;"></div>
<svg style="left:2045px;top:398px" width="16" height="18"><path d="M0 0v18l15-9z" fill="#2a4318"/></svg>
<div class="t" style="left:2078px;top:390px;width:259px;height:34px;line-height:34px;color:#15230d;letter-spacing:.9px;padding-top:1px;-webkit-text-stroke:.15px;">KRIA groove 7</div>
<div class="slot" style="left:2341px;top:390px;width:300px;height:34px;"></div>
<div class="slot" style="left:3071px;top:390px;width:186px;height:34px;"></div>
<div class="t b" style="left:3071px;top:390px;width:186px;height:34px;line-height:34px;text-align:center;padding-left:30px;font-size:19.5px;">6</div>
<div class="slot" style="left:23px;top:426px;width:262px;height:34px;"></div>
<div class="h" style="left:61px;top:430px;width:220px;height:26px;border-color:#ffffff;background:repeating-linear-gradient(135deg,#ffffff 0,#ffffff 4.3px,#333 4.3px,#333 7.9px,#ffffff 7.9px,#ffffff 8.485px);"></div>
<div class="slot" style="left:289px;top:426px;width:262px;height:34px;"></div>
<div class="h" style="left:327px;top:430px;width:220px;height:26px;border-color:#6ae6fc;background:repeating-linear-gradient(135deg,#6ae6fc 0,#6ae6fc 4.3px,#333 4.3px,#333 7.9px,#6ae6fc 7.9px,#6ae6fc 8.485px);"></div>
<div class="slot" style="left:555px;top:426px;width:262px;height:34px;"></div>
<div class="h" style="left:593px;top:430px;width:220px;height:26px;border-color:#46a1e8;background:repeating-linear-gradient(135deg,#46a1e8 0,#46a1e8 4.3px,#333 4.3px,#333 7.9px,#46a1e8 7.9px,#46a1e8 8.485px);"></div>
<div class="slot" style="left:821px;top:426px;width:300px;height:34px;"></div>
<div class="h" style="left:859px;top:430px;width:258px;height:26px;border-color:#32638a;background:repeating-linear-gradient(135deg,#32638a 0,#32638a 4.3px,#333 4.3px,#333 7.9px,#32638a 7.9px,#32638a 8.485px);"></div>
<div class="slot" style="left:1125px;top:426px;width:262px;height:34px;"></div>
<div style="left:1391px;top:426px;width:300px;height:34px;background:#3a413a;"></div>
<div style="left:1399px;top:434px;width:18px;height:18px;background:#2e2e2e;"></div>
<div class="slot" style="left:1695px;top:426px;width:338px;height:34px;"></div>
<div style="left:2037px;top:426px;width:300px;height:34px;background:#6aa246;"></div>
<div style="left:2070px;top:426px;width:1.5px;height:34px;background:#4d7d30;"></div>
<svg style="left:2045px;top:434px" width="16" height="18"><path d="M0 0v18l15-9z" fill="#2a4318"/></svg>
<div class="t" style="left:2078px;top:426px;width:259px;height:34px;line-height:34px;color:#15230d;letter-spacing:.9px;padding-top:1px;-webkit-text-stroke:.15px;">KRIA groove 8</div>
<div class="slot" style="left:2341px;top:426px;width:300px;height:34px;"></div>
<div class="slot" style="left:3071px;top:426px;width:186px;height:34px;"></div>
<div class="t b" style="left:3071px;top:426px;width:186px;height:34px;line-height:34px;text-align:center;padding-left:30px;font-size:19.5px;">7</div>
<div class="slot" style="left:23px;top:462px;width:262px;height:34px;"></div>
<div class="h" style="left:61px;top:466px;width:220px;height:26px;border-color:#ffffff;background:repeating-linear-gradient(135deg,#ffffff 0,#ffffff 4.3px,#333 4.3px,#333 7.9px,#ffffff 7.9px,#ffffff 8.485px);"></div>
<div class="slot" style="left:289px;top:462px;width:262px;height:34px;"></div>
<div class="h" style="left:327px;top:466px;width:220px;height:26px;border-color:#6ae6fc;background:repeating-linear-gradient(135deg,#6ae6fc 0,#6ae6fc 4.3px,#333 4.3px,#333 7.9px,#6ae6fc 7.9px,#6ae6fc 8.485px);"></div>
<div class="slot" style="left:555px;top:462px;width:262px;height:34px;"></div>
<div class="h" style="left:593px;top:466px;width:220px;height:26px;border-color:#46a1e8;background:repeating-linear-gradient(135deg,#46a1e8 0,#46a1e8 4.3px,#333 4.3px,#333 7.9px,#46a1e8 7.9px,#46a1e8 8.485px);"></div>
<div class="slot" style="left:821px;top:462px;width:300px;height:34px;"></div>
<div class="h" style="left:859px;top:466px;width:258px;height:26px;border-color:#32638a;background:repeating-linear-gradient(135deg,#32638a 0,#32638a 4.3px,#333 4.3px,#333 7.9px,#32638a 7.9px,#32638a 8.485px);"></div>
<div class="slot" style="left:1125px;top:462px;width:262px;height:34px;"></div>
<div style="left:1391px;top:462px;width:300px;height:34px;background:#3a413a;"></div>
<div style="left:1399px;top:470px;width:18px;height:18px;background:#2e2e2e;"></div>
<div class="slot" style="left:1695px;top:462px;width:338px;height:34px;"></div>
<div style="left:2037px;top:462px;width:300px;height:34px;background:#6aa246;"></div>
<div style="left:2070px;top:462px;width:1.5px;height:34px;background:#4d7d30;"></div>
<svg style="left:2045px;top:470px" width="16" height="18"><path d="M0 0v18l15-9z" fill="#2a4318"/></svg>
<div class="t" style="left:2078px;top:462px;width:259px;height:34px;line-height:34px;color:#15230d;letter-spacing:.9px;padding-top:1px;-webkit-text-stroke:.15px;">KRIA groove 9</div>
<div class="slot" style="left:2341px;top:462px;width:300px;height:34px;"></div>
<div class="slot" style="left:3071px;top:462px;width:186px;height:34px;"></div>
<div class="t b" style="left:3071px;top:462px;width:186px;height:34px;line-height:34px;text-align:center;padding-left:30px;font-size:19.5px;">8</div>
<div class="slot" style="left:23px;top:498px;width:262px;height:34px;"></div>
<div class="h" style="left:61px;top:502px;width:220px;height:26px;border-color:#ffffff;background:repeating-linear-gradient(135deg,#ffffff 0,#ffffff 4.3px,#333 4.3px,#333 7.9px,#ffffff 7.9px,#ffffff 8.485px);"></div>
<div class="slot" style="left:289px;top:498px;width:262px;height:34px;"></div>
<div class="h" style="left:327px;top:502px;width:220px;height:26px;border-color:#6ae6fc;background:repeating-linear-gradient(135deg,#6ae6fc 0,#6ae6fc 4.3px,#333 4.3px,#333 7.9px,#6ae6fc 7.9px,#6ae6fc 8.485px);"></div>
<div class="slot" style="left:555px;top:498px;width:262px;height:34px;"></div>
<div class="h" style="left:593px;top:502px;width:220px;height:26px;border-color:#46a1e8;background:repeating-linear-gradient(135deg,#46a1e8 0,#46a1e8 4.3px,#333 4.3px,#333 7.9px,#46a1e8 7.9px,#46a1e8 8.485px);"></div>
<div class="slot" style="left:821px;top:498px;width:300px;height:34px;"></div>
<div class="h" style="left:859px;top:502px;width:258px;height:26px;border-color:#32638a;background:repeating-linear-gradient(135deg,#32638a 0,#32638a 4.3px,#333 4.3px,#333 7.9px,#32638a 7.9px,#32638a 8.485px);"></div>
<div class="slot" style="left:1125px;top:498px;width:262px;height:34px;"></div>
<div style="left:1391px;top:498px;width:300px;height:34px;background:#3a413a;"></div>
<div style="left:1399px;top:506px;width:18px;height:18px;background:#2e2e2e;"></div>
<div class="slot" style="left:1695px;top:498px;width:338px;height:34px;"></div>
<div style="left:2037px;top:498px;width:300px;height:34px;background:#6aa246;"></div>
<div style="left:2070px;top:498px;width:1.5px;height:34px;background:#4d7d30;"></div>
<svg style="left:2045px;top:506px" width="16" height="18"><path d="M0 0v18l15-9z" fill="#2a4318"/></svg>
<div class="t" style="left:2078px;top:498px;width:259px;height:34px;line-height:34px;color:#15230d;letter-spacing:.9px;padding-top:1px;-webkit-text-stroke:.15px;">KRIA groove 10</div>
<div class="slot" style="left:2341px;top:498px;width:300px;height:34px;"></div>
<div class="slot" style="left:3071px;top:498px;width:186px;height:34px;"></div>
<div class="t b" style="left:3071px;top:498px;width:186px;height:34px;line-height:34px;text-align:center;padding-left:30px;font-size:19.5px;">9</div>
<div class="slot" style="left:23px;top:534px;width:262px;height:34px;"></div>
<div class="h" style="left:61px;top:538px;width:220px;height:26px;border-color:#ffffff;background:repeating-linear-gradient(135deg,#ffffff 0,#ffffff 4.3px,#333 4.3px,#333 7.9px,#ffffff 7.9px,#ffffff 8.485px);"></div>
<div class="slot" style="left:289px;top:534px;width:262px;height:34px;"></div>
<div class="h" style="left:327px;top:538px;width:220px;height:26px;border-color:#6ae6fc;background:repeating-linear-gradient(135deg,#6ae6fc 0,#6ae6fc 4.3px,#333 4.3px,#333 7.9px,#6ae6fc 7.9px,#6ae6fc 8.485px);"></div>
<div class="slot" style="left:555px;top:534px;width:262px;height:34px;"></div>
<div class="h" style="left:593px;top:538px;width:220px;height:26px;border-color:#46a1e8;background:repeating-linear-gradient(135deg,#46a1e8 0,#46a1e8 4.3px,#333 4.3px,#333 7.9px,#46a1e8 7.9px,#46a1e8 8.485px);"></div>
<div class="slot" style="left:821px;top:534px;width:300px;height:34px;"></div>
<div class="h" style="left:859px;top:538px;width:258px;height:26px;border-color:#32638a;background:repeating-linear-gradient(135deg,#32638a 0,#32638a 4.3px,#333 4.3px,#333 7.9px,#32638a 7.9px,#32638a 8.485px);"></div>
<div class="slot" style="left:1125px;top:534px;width:262px;height:34px;"></div>
<div style="left:1391px;top:534px;width:300px;height:34px;background:#3a413a;"></div>
<div style="left:1399px;top:542px;width:18px;height:18px;background:#2e2e2e;"></div>
<div class="slot" style="left:1695px;top:534px;width:338px;height:34px;"></div>
<div class="h" style="left:1733px;top:538px;width:296px;height:26px;border-color:#8ab05e;background:repeating-linear-gradient(135deg,#8ab05e 0,#8ab05e 4.3px,#333 4.3px,#333 7.9px,#8ab05e 7.9px,#8ab05e 8.485px);"></div>
<div style="left:2037px;top:534px;width:300px;height:34px;background:#6aa246;"></div>
<div style="left:2070px;top:534px;width:1.5px;height:34px;background:#4d7d30;"></div>
<svg style="left:2045px;top:542px" width="16" height="18"><path d="M0 0v18l15-9z" fill="#2a4318"/></svg>
<div class="t" style="left:2078px;top:534px;width:259px;height:34px;line-height:34px;color:#15230d;letter-spacing:.9px;padding-top:1px;-webkit-text-stroke:.15px;">KRIA groove 11</div>
<div class="slot" style="left:2341px;top:534px;width:300px;height:34px;"></div>
<div class="slot" style="left:3071px;top:534px;width:186px;height:34px;"></div>
<div class="t b" style="left:3071px;top:534px;width:186px;height:34px;line-height:34px;text-align:center;padding-left:30px;font-size:19.5px;">10</div>
<div class="slot" style="left:23px;top:570px;width:262px;height:34px;"></div>
<div class="h" style="left:61px;top:574px;width:220px;height:26px;border-color:#ffffff;background:repeating-linear-gradient(135deg,#ffffff 0,#ffffff 4.3px,#333 4.3px,#333 7.9px,#ffffff 7.9px,#ffffff 8.485px);"></div>
<div class="slot" style="left:289px;top:570px;width:262px;height:34px;"></div>
<div class="h" style="left:327px;top:574px;width:220px;height:26px;border-color:#6ae6fc;background:repeating-linear-gradient(135deg,#6ae6fc 0,#6ae6fc 4.3px,#333 4.3px,#333 7.9px,#6ae6fc 7.9px,#6ae6fc 8.485px);"></div>
<div class="slot" style="left:555px;top:570px;width:262px;height:34px;"></div>
<div class="h" style="left:593px;top:574px;width:220px;height:26px;border-color:#46a1e8;background:repeating-linear-gradient(135deg,#46a1e8 0,#46a1e8 4.3px,#333 4.3px,#333 7.9px,#46a1e8 7.9px,#46a1e8 8.485px);"></div>
<div class="slot" style="left:821px;top:570px;width:300px;height:34px;"></div>
<div class="h" style="left:859px;top:574px;width:258px;height:26px;border-color:#32638a;background:repeating-linear-gradient(135deg,#32638a 0,#32638a 4.3px,#333 4.3px,#333 7.9px,#32638a 7.9px,#32638a 8.485px);"></div>
<div class="slot" style="left:1125px;top:570px;width:262px;height:34px;"></div>
<div style="left:1391px;top:570px;width:300px;height:34px;background:#3a413a;"></div>
<div style="left:1399px;top:578px;width:18px;height:18px;background:#2e2e2e;"></div>
<div class="slot" style="left:1695px;top:570px;width:338px;height:34px;"></div>
<div style="left:2037px;top:570px;width:300px;height:34px;background:#6aa246;"></div>
<div style="left:2070px;top:570px;width:1.5px;height:34px;background:#4d7d30;"></div>
<svg style="left:2045px;top:578px" width="16" height="18"><path d="M0 0v18l15-9z" fill="#2a4318"/></svg>
<div class="t" style="left:2078px;top:570px;width:259px;height:34px;line-height:34px;color:#15230d;letter-spacing:.9px;padding-top:1px;-webkit-text-stroke:.15px;">KRIA groove12</div>
<div class="slot" style="left:2341px;top:570px;width:300px;height:34px;"></div>
<div class="slot" style="left:3071px;top:570px;width:186px;height:34px;"></div>
<div class="t b" style="left:3071px;top:570px;width:186px;height:34px;line-height:34px;text-align:center;padding-left:30px;font-size:19.5px;">11</div>
<div class="slot" style="left:23px;top:606px;width:262px;height:34px;"></div>
<div class="h" style="left:61px;top:610px;width:220px;height:26px;border-color:#ffffff;background:repeating-linear-gradient(135deg,#ffffff 0,#ffffff 4.3px,#333 4.3px,#333 7.9px,#ffffff 7.9px,#ffffff 8.485px);"></div>
<div class="slot" style="left:289px;top:606px;width:262px;height:34px;"></div>
<div class="h" style="left:327px;top:610px;width:220px;height:26px;border-color:#6ae6fc;background:repeating-linear-gradient(135deg,#6ae6fc 0,#6ae6fc 4.3px,#333 4.3px,#333 7.9px,#6ae6fc 7.9px,#6ae6fc 8.485px);"></div>
<div class="slot" style="left:555px;top:606px;width:262px;height:34px;"></div>
<div class="h" style="left:593px;top:610px;width:220px;height:26px;border-color:#46a1e8;background:repeating-linear-gradient(135deg,#46a1e8 0,#46a1e8 4.3px,#333 4.3px,#333 7.9px,#46a1e8 7.9px,#46a1e8 8.485px);"></div>
<div class="slot" style="left:821px;top:606px;width:300px;height:34px;"></div>
<div class="h" style="left:859px;top:610px;width:258px;height:26px;border-color:#32638a;background:repeating-linear-gradient(135deg,#32638a 0,#32638a 4.3px,#333 4.3px,#333 7.9px,#32638a 7.9px,#32638a 8.485px);"></div>
<div class="slot" style="left:1125px;top:606px;width:262px;height:34px;"></div>
<div style="left:1391px;top:606px;width:300px;height:34px;background:#3a413a;"></div>
<div style="left:1399px;top:614px;width:18px;height:18px;background:#2e2e2e;"></div>
<div class="slot" style="left:1695px;top:606px;width:338px;height:34px;"></div>
<div style="left:2037px;top:606px;width:300px;height:34px;background:#6aa246;"></div>
<div style="left:2070px;top:606px;width:1.5px;height:34px;background:#4d7d30;"></div>
<svg style="left:2045px;top:614px" width="16" height="18"><path d="M0 0v18l15-9z" fill="#2a4318"/></svg>
<div class="t" style="left:2078px;top:606px;width:259px;height:34px;line-height:34px;color:#15230d;letter-spacing:.9px;padding-top:1px;-webkit-text-stroke:.15px;">KRIA groove 13</div>
<div class="slot" style="left:2341px;top:606px;width:300px;height:34px;"></div>
<div class="slot" style="left:3071px;top:606px;width:186px;height:34px;"></div>
<div class="t b" style="left:3071px;top:606px;width:186px;height:34px;line-height:34px;text-align:center;padding-left:30px;font-size:19.5px;">12</div>
<div class="slot" style="left:23px;top:642px;width:262px;height:34px;"></div>
<div class="h" style="left:61px;top:646px;width:220px;height:26px;border-color:#ffffff;background:repeating-linear-gradient(135deg,#ffffff 0,#ffffff 4.3px,#333 4.3px,#333 7.9px,#ffffff 7.9px,#ffffff 8.485px);"></div>
<div class="slot" style="left:289px;top:642px;width:262px;height:34px;"></div>
<div class="h" style="left:327px;top:646px;width:220px;height:26px;border-color:#6ae6fc;background:repeating-linear-gradient(135deg,#6ae6fc 0,#6ae6fc 4.3px,#333 4.3px,#333 7.9px,#6ae6fc 7.9px,#6ae6fc 8.485px);"></div>
<div class="slot" style="left:555px;top:642px;width:262px;height:34px;"></div>
<div class="h" style="left:593px;top:646px;width:220px;height:26px;border-color:#46a1e8;background:repeating-linear-gradient(135deg,#46a1e8 0,#46a1e8 4.3px,#333 4.3px,#333 7.9px,#46a1e8 7.9px,#46a1e8 8.485px);"></div>
<div class="slot" style="left:821px;top:642px;width:300px;height:34px;"></div>
<div class="h" style="left:859px;top:646px;width:258px;height:26px;border-color:#32638a;background:repeating-linear-gradient(135deg,#32638a 0,#32638a 4.3px,#333 4.3px,#333 7.9px,#32638a 7.9px,#32638a 8.485px);"></div>
<div class="slot" style="left:1125px;top:642px;width:262px;height:34px;"></div>
<div style="left:1391px;top:642px;width:300px;height:34px;background:#3a413a;"></div>
<div style="left:1399px;top:650px;width:18px;height:18px;background:#2e2e2e;"></div>
<div class="slot" style="left:1695px;top:642px;width:338px;height:34px;"></div>
<div style="left:2037px;top:642px;width:300px;height:34px;background:#6aa246;"></div>
<div style="left:2070px;top:642px;width:1.5px;height:34px;background:#4d7d30;"></div>
<svg style="left:2045px;top:650px" width="16" height="18"><path d="M0 0v18l15-9z" fill="#2a4318"/></svg>
<div class="t" style="left:2078px;top:642px;width:259px;height:34px;line-height:34px;color:#15230d;letter-spacing:.9px;padding-top:1px;-webkit-text-stroke:.15px;">KRIA groove 14</div>
<div class="slot" style="left:2341px;top:642px;width:300px;height:34px;"></div>
<div class="slot" style="left:3071px;top:642px;width:186px;height:34px;"></div>
<div class="t b" style="left:3071px;top:642px;width:186px;height:34px;line-height:34px;text-align:center;padding-left:30px;font-size:19.5px;">13</div>
<div class="slot" style="left:23px;top:678px;width:262px;height:34px;"></div>
<div class="h" style="left:61px;top:682px;width:220px;height:26px;border-color:#ffffff;background:repeating-linear-gradient(135deg,#ffffff 0,#ffffff 4.3px,#333 4.3px,#333 7.9px,#ffffff 7.9px,#ffffff 8.485px);"></div>
<div class="slot" style="left:289px;top:678px;width:262px;height:34px;"></div>
<div class="h" style="left:327px;top:682px;width:220px;height:26px;border-color:#6ae6fc;background:repeating-linear-gradient(135deg,#6ae6fc 0,#6ae6fc 4.3px,#333 4.3px,#333 7.9px,#6ae6fc 7.9px,#6ae6fc 8.485px);"></div>
<div class="slot" style="left:555px;top:678px;width:262px;height:34px;"></div>
<div class="h" style="left:593px;top:682px;width:220px;height:26px;border-color:#46a1e8;background:repeating-linear-gradient(135deg,#46a1e8 0,#46a1e8 4.3px,#333 4.3px,#333 7.9px,#46a1e8 7.9px,#46a1e8 8.485px);"></div>
<div class="slot" style="left:821px;top:678px;width:300px;height:34px;"></div>
<div class="h" style="left:859px;top:682px;width:258px;height:26px;border-color:#32638a;background:repeating-linear-gradient(135deg,#32638a 0,#32638a 4.3px,#333 4.3px,#333 7.9px,#32638a 7.9px,#32638a 8.485px);"></div>
<div class="slot" style="left:1125px;top:678px;width:262px;height:34px;"></div>
<div style="left:1391px;top:678px;width:300px;height:34px;background:#3a413a;"></div>
<div style="left:1399px;top:686px;width:18px;height:18px;background:#2e2e2e;"></div>
<div class="slot" style="left:1695px;top:678px;width:338px;height:34px;"></div>
<div style="left:2037px;top:678px;width:300px;height:34px;background:#6aa246;"></div>
<div style="left:2070px;top:678px;width:1.5px;height:34px;background:#4d7d30;"></div>
<svg style="left:2045px;top:686px" width="16" height="18"><path d="M0 0v18l15-9z" fill="#2a4318"/></svg>
<div class="t" style="left:2078px;top:678px;width:259px;height:34px;line-height:34px;color:#15230d;letter-spacing:.9px;padding-top:1px;-webkit-text-stroke:.15px;">KRIA groove 15</div>
<div class="slot" style="left:2341px;top:678px;width:300px;height:34px;"></div>
<div class="slot" style="left:3071px;top:678px;width:186px;height:34px;"></div>
<div class="t b" style="left:3071px;top:678px;width:186px;height:34px;line-height:34px;text-align:center;padding-left:30px;font-size:19.5px;">14</div>
<div class="slot" style="left:23px;top:714px;width:262px;height:34px;"></div>
<div class="h" style="left:61px;top:718px;width:220px;height:26px;border-color:#ffffff;background:repeating-linear-gradient(135deg,#ffffff 0,#ffffff 4.3px,#333 4.3px,#333 7.9px,#ffffff 7.9px,#ffffff 8.485px);"></div>
<div class="slot" style="left:289px;top:714px;width:262px;height:34px;"></div>
<div class="h" style="left:327px;top:718px;width:220px;height:26px;border-color:#6ae6fc;background:repeating-linear-gradient(135deg,#6ae6fc 0,#6ae6fc 4.3px,#333 4.3px,#333 7.9px,#6ae6fc 7.9px,#6ae6fc 8.485px);"></div>
<div class="slot" style="left:555px;top:714px;width:262px;height:34px;"></div>
<div class="h" style="left:593px;top:718px;width:220px;height:26px;border-color:#46a1e8;background:repeating-linear-gradient(135deg,#46a1e8 0,#46a1e8 4.3px,#333 4.3px,#333 7.9px,#46a1e8 7.9px,#46a1e8 8.485px);"></div>
<div class="slot" style="left:821px;top:714px;width:300px;height:34px;"></div>
<div class="h" style="left:859px;top:718px;width:258px;height:26px;border-color:#32638a;background:repeating-linear-gradient(135deg,#32638a 0,#32638a 4.3px,#333 4.3px,#333 7.9px,#32638a 7.9px,#32638a 8.485px);"></div>
<div class="slot" style="left:1125px;top:714px;width:262px;height:34px;"></div>
<div style="left:1391px;top:714px;width:300px;height:34px;background:#3a413a;"></div>
<div style="left:1399px;top:722px;width:18px;height:18px;background:#2e2e2e;"></div>
<div class="slot" style="left:1695px;top:714px;width:338px;height:34px;"></div>
<div style="left:2037px;top:714px;width:300px;height:34px;background:#6aa246;"></div>
<div style="left:2070px;top:714px;width:1.5px;height:34px;background:#4d7d30;"></div>
<svg style="left:2045px;top:722px" width="16" height="18"><path d="M0 0v18l15-9z" fill="#2a4318"/></svg>
<div class="t" style="left:2078px;top:714px;width:259px;height:34px;line-height:34px;color:#15230d;letter-spacing:.9px;padding-top:1px;-webkit-text-stroke:.15px;">KRIA groove 16</div>
<div class="slot" style="left:2341px;top:714px;width:300px;height:34px;"></div>
<div class="slot" style="left:3071px;top:714px;width:186px;height:34px;"></div>
<div class="t b" style="left:3071px;top:714px;width:186px;height:34px;line-height:34px;text-align:center;padding-left:30px;font-size:19.5px;">15</div>
<div class="slot" style="left:23px;top:750px;width:262px;height:34px;"></div>
<div class="h" style="left:61px;top:754px;width:220px;height:26px;border-color:#ffffff;background:repeating-linear-gradient(135deg,#ffffff 0,#ffffff 4.3px,#333 4.3px,#333 7.9px,#ffffff 7.9px,#ffffff 8.485px);"></div>
<div class="slot" style="left:289px;top:750px;width:262px;height:34px;"></div>
<div class="h" style="left:327px;top:754px;width:220px;height:26px;border-color:#6ae6fc;background:repeating-linear-gradient(135deg,#6ae6fc 0,#6ae6fc 4.3px,#333 4.3px,#333 7.9px,#6ae6fc 7.9px,#6ae6fc 8.485px);"></div>
<div class="slot" style="left:555px;top:750px;width:262px;height:34px;"></div>
<div class="h" style="left:593px;top:754px;width:220px;height:26px;border-color:#46a1e8;background:repeating-linear-gradient(135deg,#46a1e8 0,#46a1e8 4.3px,#333 4.3px,#333 7.9px,#46a1e8 7.9px,#46a1e8 8.485px);"></div>
<div class="slot" style="left:821px;top:750px;width:300px;height:34px;"></div>
<div class="h" style="left:859px;top:754px;width:258px;height:26px;border-color:#32638a;background:repeating-linear-gradient(135deg,#32638a 0,#32638a 4.3px,#333 4.3px,#333 7.9px,#32638a 7.9px,#32638a 8.485px);"></div>
<div class="slot" style="left:1125px;top:750px;width:262px;height:34px;"></div>
<div style="left:1391px;top:750px;width:300px;height:34px;background:#3a413a;"></div>
<div style="left:1399px;top:758px;width:18px;height:18px;background:#2e2e2e;"></div>
<div class="slot" style="left:1695px;top:750px;width:338px;height:34px;"></div>
<div style="left:2037px;top:750px;width:300px;height:34px;background:#6aa246;"></div>
<div style="left:2070px;top:750px;width:1.5px;height:34px;background:#4d7d30;"></div>
<svg style="left:2045px;top:758px" width="16" height="18"><path d="M0 0v18l15-9z" fill="#2a4318"/></svg>
<div class="t" style="left:2078px;top:750px;width:259px;height:34px;line-height:34px;color:#15230d;letter-spacing:.9px;padding-top:1px;-webkit-text-stroke:.15px;">KRIA groove 17</div>
<div class="slot" style="left:2341px;top:750px;width:300px;height:34px;"></div>
<div class="slot" style="left:3071px;top:750px;width:186px;height:34px;"></div>
<div class="t b" style="left:3071px;top:750px;width:186px;height:34px;line-height:34px;text-align:center;padding-left:30px;font-size:19.5px;">16</div>
<div class="slot" style="left:23px;top:786px;width:262px;height:34px;"></div>
<div class="h" style="left:61px;top:790px;width:220px;height:26px;border-color:#ffffff;background:repeating-linear-gradient(135deg,#ffffff 0,#ffffff 4.3px,#333 4.3px,#333 7.9px,#ffffff 7.9px,#ffffff 8.485px);"></div>
<div class="slot" style="left:289px;top:786px;width:262px;height:34px;"></div>
<div class="h" style="left:327px;top:790px;width:220px;height:26px;border-color:#6ae6fc;background:repeating-linear-gradient(135deg,#6ae6fc 0,#6ae6fc 4.3px,#333 4.3px,#333 7.9px,#6ae6fc 7.9px,#6ae6fc 8.485px);"></div>
<div class="slot" style="left:555px;top:786px;width:262px;height:34px;"></div>
<div class="h" style="left:593px;top:790px;width:220px;height:26px;border-color:#46a1e8;background:repeating-linear-gradient(135deg,#46a1e8 0,#46a1e8 4.3px,#333 4.3px,#333 7.9px,#46a1e8 7.9px,#46a1e8 8.485px);"></div>
<div class="slot" style="left:821px;top:786px;width:300px;height:34px;"></div>
<div class="h" style="left:859px;top:790px;width:258px;height:26px;border-color:#32638a;background:repeating-linear-gradient(135deg,#32638a 0,#32638a 4.3px,#333 4.3px,#333 7.9px,#32638a 7.9px,#32638a 8.485px);"></div>
<div class="slot" style="left:1125px;top:786px;width:262px;height:34px;"></div>
<div style="left:1391px;top:786px;width:300px;height:34px;background:#3a413a;"></div>
<div style="left:1399px;top:794px;width:18px;height:18px;background:#2e2e2e;"></div>
<div class="slot" style="left:1695px;top:786px;width:338px;height:34px;"></div>
<div style="left:2037px;top:786px;width:300px;height:34px;background:#6aa246;"></div>
<div style="left:2070px;top:786px;width:1.5px;height:34px;background:#4d7d30;"></div>
<svg style="left:2045px;top:794px" width="16" height="18"><path d="M0 0v18l15-9z" fill="#2a4318"/></svg>
<div class="t" style="left:2078px;top:786px;width:259px;height:34px;line-height:34px;color:#15230d;letter-spacing:.9px;padding-top:1px;-webkit-text-stroke:.15px;">KRIA groove 18</div>
<div class="slot" style="left:2341px;top:786px;width:300px;height:34px;"></div>
<div class="slot" style="left:3071px;top:786px;width:186px;height:34px;"></div>
<div class="t b" style="left:3071px;top:786px;width:186px;height:34px;line-height:34px;text-align:center;padding-left:30px;font-size:19.5px;">17</div>
<div class="slot" style="left:23px;top:822px;width:262px;height:34px;"></div>
<div class="h" style="left:61px;top:826px;width:220px;height:26px;border-color:#ffffff;background:repeating-linear-gradient(135deg,#ffffff 0,#ffffff 4.3px,#333 4.3px,#333 7.9px,#ffffff 7.9px,#ffffff 8.485px);"></div>
<div class="slot" style="left:289px;top:822px;width:262px;height:34px;"></div>
<div class="h" style="left:327px;top:826px;width:220px;height:26px;border-color:#6ae6fc;background:repeating-linear-gradient(135deg,#6ae6fc 0,#6ae6fc 4.3px,#333 4.3px,#333 7.9px,#6ae6fc 7.9px,#6ae6fc 8.485px);"></div>
<div class="slot" style="left:555px;top:822px;width:262px;height:34px;"></div>
<div class="h" style="left:593px;top:826px;width:220px;height:26px;border-color:#46a1e8;background:repeating-linear-gradient(135deg,#46a1e8 0,#46a1e8 4.3px,#333 4.3px,#333 7.9px,#46a1e8 7.9px,#46a1e8 8.485px);"></div>
<div class="slot" style="left:821px;top:822px;width:300px;height:34px;"></div>
<div class="h" style="left:859px;top:826px;width:258px;height:26px;border-color:#32638a;background:repeating-linear-gradient(135deg,#32638a 0,#32638a 4.3px,#333 4.3px,#333 7.9px,#32638a 7.9px,#32638a 8.485px);"></div>
<div class="slot" style="left:1125px;top:822px;width:262px;height:34px;"></div>
<div style="left:1391px;top:822px;width:300px;height:34px;background:#3a413a;"></div>
<div style="left:1399px;top:830px;width:18px;height:18px;background:#2e2e2e;"></div>
<div class="slot" style="left:1695px;top:822px;width:338px;height:34px;"></div>
<div style="left:2037px;top:822px;width:300px;height:34px;background:#6aa246;"></div>
<div style="left:2070px;top:822px;width:1.5px;height:34px;background:#4d7d30;"></div>
<svg style="left:2045px;top:830px" width="16" height="18"><path d="M0 0v18l15-9z" fill="#2a4318"/></svg>
<div class="t" style="left:2078px;top:822px;width:259px;height:34px;line-height:34px;color:#15230d;letter-spacing:.9px;padding-top:1px;-webkit-text-stroke:.15px;">KRIA groove 19</div>
<div class="slot" style="left:2341px;top:822px;width:300px;height:34px;"></div>
<div class="slot" style="left:3071px;top:822px;width:186px;height:34px;"></div>
<div class="t b" style="left:3071px;top:822px;width:186px;height:34px;line-height:34px;text-align:center;padding-left:30px;font-size:19.5px;">18</div>
<div class="slot" style="left:23px;top:858px;width:262px;height:34px;"></div>
<div class="h" style="left:61px;top:862px;width:220px;height:26px;border-color:#ffffff;background:repeating-linear-gradient(135deg,#ffffff 0,#ffffff 4.3px,#333 4.3px,#333 7.9px,#ffffff 7.9px,#ffffff 8.485px);"></div>
<div class="slot" style="left:289px;top:858px;width:262px;height:34px;"></div>
<div class="h" style="left:327px;top:862px;width:220px;height:26px;border-color:#6ae6fc;background:repeating-linear-gradient(135deg,#6ae6fc 0,#6ae6fc 4.3px,#333 4.3px,#333 7.9px,#6ae6fc 7.9px,#6ae6fc 8.485px);"></div>
<div class="slot" style="left:555px;top:858px;width:262px;height:34px;"></div>
<div class="h" style="left:593px;top:862px;width:220px;height:26px;border-color:#46a1e8;background:repeating-linear-gradient(135deg,#46a1e8 0,#46a1e8 4.3px,#333 4.3px,#333 7.9px,#46a1e8 7.9px,#46a1e8 8.485px);"></div>
<div class="slot" style="left:821px;top:858px;width:300px;height:34px;"></div>
<div class="h" style="left:859px;top:862px;width:258px;height:26px;border-color:#32638a;background:repeating-linear-gradient(135deg,#32638a 0,#32638a 4.3px,#333 4.3px,#333 7.9px,#32638a 7.9px,#32638a 8.485px);"></div>
<div class="slot" style="left:1125px;top:858px;width:262px;height:34px;"></div>
<div style="left:1391px;top:858px;width:300px;height:34px;background:#3a413a;"></div>
<div style="left:1399px;top:866px;width:18px;height:18px;background:#2e2e2e;"></div>
<div class="slot" style="left:1695px;top:858px;width:338px;height:34px;"></div>
<div style="left:2037px;top:858px;width:300px;height:34px;background:#6aa246;"></div>
<div style="left:2070px;top:858px;width:1.5px;height:34px;background:#4d7d30;"></div>
<svg style="left:2045px;top:866px" width="16" height="18"><path d="M0 0v18l15-9z" fill="#2a4318"/></svg>
<div class="t" style="left:2078px;top:858px;width:259px;height:34px;line-height:34px;color:#15230d;letter-spacing:.9px;padding-top:1px;-webkit-text-stroke:.15px;">KRIA groove 20</div>
<div class="slot" style="left:2341px;top:858px;width:300px;height:34px;"></div>
<div class="slot" style="left:3071px;top:858px;width:186px;height:34px;"></div>
<div class="t b" style="left:3071px;top:858px;width:186px;height:34px;line-height:34px;text-align:center;padding-left:30px;font-size:19.5px;">19</div>
<div class="slot" style="left:23px;top:894px;width:262px;height:34px;"></div>
<div class="h" style="left:61px;top:898px;width:220px;height:26px;border-color:#ffffff;background:repeating-linear-gradient(135deg,#ffffff 0,#ffffff 4.3px,#333 4.3px,#333 7.9px,#ffffff 7.9px,#ffffff 8.485px);"></div>
<div class="slot" style="left:289px;top:894px;width:262px;height:34px;"></div>
<div class="h" style="left:327px;top:898px;width:220px;height:26px;border-color:#6ae6fc;background:repeating-linear-gradient(135deg,#6ae6fc 0,#6ae6fc 4.3px,#333 4.3px,#333 7.9px,#6ae6fc 7.9px,#6ae6fc 8.485px);"></div>
<div class="slot" style="left:555px;top:894px;width:262px;height:34px;"></div>
<div class="h" style="left:593px;top:898px;width:220px;height:26px;border-color:#46a1e8;background:repeating-linear-gradient(135deg,#46a1e8 0,#46a1e8 4.3px,#333 4.3px,#333 7.9px,#46a1e8 7.9px,#46a1e8 8.485px);"></div>
<div class="slot" style="left:821px;top:894px;width:300px;height:34px;"></div>
<div class="h" style="left:859px;top:898px;width:258px;height:26px;border-color:#32638a;background:repeating-linear-gradient(135deg,#32638a 0,#32638a 4.3px,#333 4.3px,#333 7.9px,#32638a 7.9px,#32638a 8.485px);"></div>
<div class="slot" style="left:1125px;top:894px;width:262px;height:34px;"></div>
<div style="left:1391px;top:894px;width:300px;height:34px;background:#3a413a;"></div>
<div style="left:1399px;top:902px;width:18px;height:18px;background:#2e2e2e;"></div>
<div class="slot" style="left:1695px;top:894px;width:338px;height:34px;"></div>
<div style="left:2037px;top:894px;width:300px;height:34px;background:#6aa246;"></div>
<div style="left:2070px;top:894px;width:1.5px;height:34px;background:#4d7d30;"></div>
<svg style="left:2045px;top:902px" width="16" height="18"><path d="M0 0v18l15-9z" fill="#2a4318"/></svg>
<div class="t" style="left:2078px;top:894px;width:259px;height:34px;line-height:34px;color:#15230d;letter-spacing:.9px;padding-top:1px;-webkit-text-stroke:.15px;">KRIA groove 21</div>
<div class="slot" style="left:2341px;top:894px;width:300px;height:34px;"></div>
<div class="slot" style="left:3071px;top:894px;width:186px;height:34px;"></div>
<div class="t b" style="left:3071px;top:894px;width:186px;height:34px;line-height:34px;text-align:center;padding-left:30px;font-size:19.5px;">20</div>
<div class="slot" style="left:23px;top:930px;width:262px;height:34px;"></div>
<div class="h" style="left:61px;top:934px;width:220px;height:26px;border-color:#ffffff;background:repeating-linear-gradient(135deg,#ffffff 0,#ffffff 4.3px,#333 4.3px,#333 7.9px,#ffffff 7.9px,#ffffff 8.485px);"></div>
<div class="slot" style="left:289px;top:930px;width:262px;height:34px;"></div>
<div class="h" style="left:327px;top:934px;width:220px;height:26px;border-color:#6ae6fc;background:repeating-linear-gradient(135deg,#6ae6fc 0,#6ae6fc 4.3px,#333 4.3px,#333 7.9px,#6ae6fc 7.9px,#6ae6fc 8.485px);"></div>
<div class="slot" style="left:555px;top:930px;width:262px;height:34px;"></div>
<div class="h" style="left:593px;top:934px;width:220px;height:26px;border-color:#46a1e8;background:repeating-linear-gradient(135deg,#46a1e8 0,#46a1e8 4.3px,#333 4.3px,#333 7.9px,#46a1e8 7.9px,#46a1e8 8.485px);"></div>
<div class="slot" style="left:821px;top:930px;width:300px;height:34px;"></div>
<div class="h" style="left:859px;top:934px;width:258px;height:26px;border-color:#32638a;background:repeating-linear-gradient(135deg,#32638a 0,#32638a 4.3px,#333 4.3px,#333 7.9px,#32638a 7.9px,#32638a 8.485px);"></div>
<div class="slot" style="left:1125px;top:930px;width:262px;height:34px;"></div>
<div style="left:1391px;top:930px;width:300px;height:34px;background:#3a413a;"></div>
<div style="left:1399px;top:938px;width:18px;height:18px;background:#2e2e2e;"></div>
<div class="slot" style="left:1695px;top:930px;width:338px;height:34px;"></div>
<div style="left:2037px;top:930px;width:300px;height:34px;background:#6aa246;"></div>
<div style="left:2070px;top:930px;width:1.5px;height:34px;background:#4d7d30;"></div>
<svg style="left:2045px;top:938px" width="16" height="18"><path d="M0 0v18l15-9z" fill="#2a4318"/></svg>
<div class="t" style="left:2078px;top:930px;width:259px;height:34px;line-height:34px;color:#15230d;letter-spacing:.9px;padding-top:1px;-webkit-text-stroke:.15px;">KRIA groove 22</div>
<div class="slot" style="left:2341px;top:930px;width:300px;height:34px;"></div>
<div class="slot" style="left:3071px;top:930px;width:186px;height:34px;"></div>
<div class="t b" style="left:3071px;top:930px;width:186px;height:34px;line-height:34px;text-align:center;padding-left:30px;font-size:19.5px;">21</div>
<div class="slot" style="left:23px;top:966px;width:262px;height:34px;"></div>
<div class="h" style="left:61px;top:970px;width:220px;height:26px;border-color:#ffffff;background:repeating-linear-gradient(135deg,#ffffff 0,#ffffff 4.3px,#333 4.3px,#333 7.9px,#ffffff 7.9px,#ffffff 8.485px);"></div>
<div class="slot" style="left:289px;top:966px;width:262px;height:34px;"></div>
<div class="h" style="left:327px;top:970px;width:220px;height:26px;border-color:#6ae6fc;background:repeating-linear-gradient(135deg,#6ae6fc 0,#6ae6fc 4.3px,#333 4.3px,#333 7.9px,#6ae6fc 7.9px,#6ae6fc 8.485px);"></div>
<div class="slot" style="left:555px;top:966px;width:262px;height:34px;"></div>
<div class="h" style="left:593px;top:970px;width:220px;height:26px;border-color:#46a1e8;background:repeating-linear-gradient(135deg,#46a1e8 0,#46a1e8 4.3px,#333 4.3px,#333 7.9px,#46a1e8 7.9px,#46a1e8 8.485px);"></div>
<div class="slot" style="left:821px;top:966px;width:300px;height:34px;"></div>
<div class="h" style="left:859px;top:970px;width:258px;height:26px;border-color:#32638a;background:repeating-linear-gradient(135deg,#32638a 0,#32638a 4.3px,#333 4.3px,#333 7.9px,#32638a 7.9px,#32638a 8.485px);"></div>
<div class="slot" style="left:1125px;top:966px;width:262px;height:34px;"></div>
<div style="left:1391px;top:966px;width:300px;height:34px;background:#3a413a;"></div>
<div style="left:1399px;top:974px;width:18px;height:18px;background:#2e2e2e;"></div>
<div class="slot" style="left:1695px;top:966px;width:338px;height:34px;"></div>
<div style="left:2037px;top:966px;width:300px;height:34px;background:#6aa246;"></div>
<div style="left:2070px;top:966px;width:1.5px;height:34px;background:#4d7d30;"></div>
<svg style="left:2045px;top:974px" width="16" height="18"><path d="M0 0v18l15-9z" fill="#2a4318"/></svg>
<div class="t" style="left:2078px;top:966px;width:259px;height:34px;line-height:34px;color:#15230d;letter-spacing:.9px;padding-top:1px;-webkit-text-stroke:.15px;">KRIA groove 23</div>
<div class="slot" style="left:2341px;top:966px;width:300px;height:34px;"></div>
<div class="slot" style="left:3071px;top:966px;width:186px;height:34px;"></div>
<div class="t b" style="left:3071px;top:966px;width:186px;height:34px;line-height:34px;text-align:center;padding-left:30px;font-size:19.5px;">22</div>
<div class="slot" style="left:23px;top:1002px;width:262px;height:34px;"></div>
<div class="h" style="left:61px;top:1006px;width:220px;height:26px;border-color:#ffffff;background:repeating-linear-gradient(135deg,#ffffff 0,#ffffff 4.3px,#333 4.3px,#333 7.9px,#ffffff 7.9px,#ffffff 8.485px);"></div>
<div class="slot" style="left:289px;top:1002px;width:262px;height:34px;"></div>
<div class="h" style="left:327px;top:1006px;width:220px;height:26px;border-color:#6ae6fc;background:repeating-linear-gradient(135deg,#6ae6fc 0,#6ae6fc 4.3px,#333 4.3px,#333 7.9px,#6ae6fc 7.9px,#6ae6fc 8.485px);"></div>
<div class="slot" style="left:555px;top:1002px;width:262px;height:34px;"></div>
<div class="h" style="left:593px;top:1006px;width:220px;height:26px;border-color:#46a1e8;background:repeating-linear-gradient(135deg,#46a1e8 0,#46a1e8 4.3px,#333 4.3px,#333 7.9px,#46a1e8 7.9px,#46a1e8 8.485px);"></div>
<div class="slot" style="left:821px;top:1002px;width:300px;height:34px;"></div>
<div class="h" style="left:859px;top:1006px;width:258px;height:26px;border-color:#32638a;background:repeating-linear-gradient(135deg,#32638a 0,#32638a 4.3px,#333 4.3px,#333 7.9px,#32638a 7.9px,#32638a 8.485px);"></div>
<div class="slot" style="left:1125px;top:1002px;width:262px;height:34px;"></div>
<div style="left:1391px;top:1002px;width:300px;height:34px;background:#3a413a;"></div>
<div style="left:1399px;top:1010px;width:18px;height:18px;background:#2e2e2e;"></div>
<div class="slot" style="left:1695px;top:1002px;width:338px;height:34px;"></div>
<div style="left:2037px;top:1002px;width:300px;height:34px;background:#6aa246;"></div>
<div style="left:2070px;top:1002px;width:1.5px;height:34px;background:#4d7d30;"></div>
<svg style="left:2045px;top:1010px" width="16" height="18"><path d="M0 0v18l15-9z" fill="#2a4318"/></svg>
<div class="t" style="left:2078px;top:1002px;width:259px;height:34px;line-height:34px;color:#15230d;letter-spacing:.9px;padding-top:1px;-webkit-text-stroke:.15px;">KRIA groove 24</div>
<div class="slot" style="left:2341px;top:1002px;width:300px;height:34px;"></div>
<div class="slot" style="left:3071px;top:1002px;width:186px;height:34px;"></div>
<div class="t b" style="left:3071px;top:1002px;width:186px;height:34px;line-height:34px;text-align:center;padding-left:30px;font-size:19.5px;">23</div>
<div class="slot" style="left:23px;top:1038px;width:262px;height:34px;"></div>
<div class="h" style="left:61px;top:1042px;width:220px;height:26px;border-color:#ffffff;background:repeating-linear-gradient(135deg,#ffffff 0,#ffffff 4.3px,#333 4.3px,#333 7.9px,#ffffff 7.9px,#ffffff 8.485px);"></div>
<div class="slot" style="left:289px;top:1038px;width:262px;height:34px;"></div>
<div class="h" style="left:327px;top:1042px;width:220px;height:26px;border-color:#6ae6fc;background:repeating-linear-gradient(135deg,#6ae6fc 0,#6ae6fc 4.3px,#333 4.3px,#333 7.9px,#6ae6fc 7.9px,#6ae6fc 8.485px);"></div>
<div class="slot" style="left:555px;top:1038px;width:262px;height:34px;"></div>
<div class="h" style="left:593px;top:1042px;width:220px;height:26px;border-color:#46a1e8;background:repeating-linear-gradient(135deg,#46a1e8 0,#46a1e8 4.3px,#333 4.3px,#333 7.9px,#46a1e8 7.9px,#46a1e8 8.485px);"></div>
<div class="slot" style="left:821px;top:1038px;width:300px;height:34px;"></div>
<div class="h" style="left:859px;top:1042px;width:258px;height:26px;border-color:#32638a;background:repeating-linear-gradient(135deg,#32638a 0,#32638a 4.3px,#333 4.3px,#333 7.9px,#32638a 7.9px,#32638a 8.485px);"></div>
<div class="slot" style="left:1125px;top:1038px;width:262px;height:34px;"></div>
<div style="left:1391px;top:1038px;width:300px;height:34px;background:#3a413a;"></div>
<div style="left:1399px;top:1046px;width:18px;height:18px;background:#2e2e2e;"></div>
<div class="slot" style="left:1695px;top:1038px;width:338px;height:34px;"></div>
<div style="left:2037px;top:1038px;width:300px;height:34px;background:#6aa246;"></div>
<div style="left:2070px;top:1038px;width:1.5px;height:34px;background:#4d7d30;"></div>
<svg style="left:2045px;top:1046px" width="16" height="18"><path d="M0 0v18l15-9z" fill="#2a4318"/></svg>
<div class="t" style="left:2078px;top:1038px;width:259px;height:34px;line-height:34px;color:#15230d;letter-spacing:.9px;padding-top:1px;-webkit-text-stroke:.15px;">KRIA groove 25</div>
<div class="slot" style="left:2341px;top:1038px;width:300px;height:34px;"></div>
<div class="slot" style="left:3071px;top:1038px;width:186px;height:34px;"></div>
<div class="t b" style="left:3071px;top:1038px;width:186px;height:34px;line-height:34px;text-align:center;padding-left:30px;font-size:19.5px;">24</div>
<div class="slot" style="left:23px;top:1074px;width:262px;height:32px;"></div>
<div class="h" style="left:61px;top:1078px;width:220px;height:26px;border-color:#ffffff;background:repeating-linear-gradient(135deg,#ffffff 0,#ffffff 4.3px,#333 4.3px,#333 7.9px,#ffffff 7.9px,#ffffff 8.485px);"></div>
<div class="slot" style="left:289px;top:1074px;width:262px;height:32px;"></div>
<div class="h" style="left:327px;top:1078px;width:220px;height:26px;border-color:#6ae6fc;background:repeating-linear-gradient(135deg,#6ae6fc 0,#6ae6fc 4.3px,#333 4.3px,#333 7.9px,#6ae6fc 7.9px,#6ae6fc 8.485px);"></div>
<div class="slot" style="left:555px;top:1074px;width:262px;height:32px;"></div>
<div class="h" style="left:593px;top:1078px;width:220px;height:26px;border-color:#46a1e8;background:repeating-linear-gradient(135deg,#46a1e8 0,#46a1e8 4.3px,#333 4.3px,#333 7.9px,#46a1e8 7.9px,#46a1e8 8.485px);"></div>
<div class="slot" style="left:821px;top:1074px;width:300px;height:32px;"></div>
<div class="h" style="left:859px;top:1078px;width:258px;height:26px;border-color:#32638a;background:repeating-linear-gradient(135deg,#32638a 0,#32638a 4.3px,#333 4.3px,#333 7.9px,#32638a 7.9px,#32638a 8.485px);"></div>
<div class="slot" style="left:1125px;top:1074px;width:262px;height:32px;"></div>
<div style="left:1391px;top:1074px;width:300px;height:32px;background:#3a413a;"></div>
<div style="left:1399px;top:1082px;width:18px;height:18px;background:#2e2e2e;"></div>
<div class="slot" style="left:1695px;top:1074px;width:338px;height:32px;"></div>
<div style="left:2037px;top:1074px;width:300px;height:32px;background:#6aa246;"></div>
<div style="left:2070px;top:1074px;width:1.5px;height:32px;background:#4d7d30;"></div>
<svg style="left:2045px;top:1082px" width="16" height="18"><path d="M0 0v18l15-9z" fill="#2a4318"/></svg>
<div class="t" style="left:2078px;top:1074px;width:259px;height:34px;line-height:34px;color:#15230d;letter-spacing:.9px;padding-top:1px;-webkit-text-stroke:.15px;">KRIA groove 26</div>
<div class="slot" style="left:2341px;top:1074px;width:300px;height:32px;"></div>
<div class="slot" style="left:3071px;top:1074px;width:186px;height:32px;"></div>
<div class="t b" style="left:3071px;top:1074px;width:186px;height:34px;line-height:34px;text-align:center;padding-left:30px;font-size:19.5px;">25</div>
<div class="slot" style="left:23px;top:1108px;width:262px;height:34px;"></div>
<div class="slot" style="left:289px;top:1108px;width:262px;height:34px;"></div>
<div class="slot" style="left:555px;top:1108px;width:262px;height:34px;"></div>
<div class="slot" style="left:821px;top:1108px;width:300px;height:34px;"></div>
<div class="slot" style="left:1125px;top:1108px;width:262px;height:34px;"></div>
<div class="slot" style="left:1391px;top:1108px;width:300px;height:34px;"></div>
<div class="slot" style="left:1695px;top:1108px;width:338px;height:34px;"></div>
<div class="slot" style="left:2037px;top:1108px;width:300px;height:34px;"></div>
<div class="slot" style="left:2341px;top:1108px;width:300px;height:34px;"></div>
<div class="slot" style="left:3071px;top:1108px;width:186px;height:34px;"></div>
<div style="left:3213px;top:1113px;width:39px;height:25px;background:#e8674a;border:2px solid #8a8a8a;"></div>
<svg style="left:3213px;top:1113px" width="39" height="25"><path d="M7 5.5v14l12-7z" fill="#f6e4de"/><path d="M21 8h11M21 12.5h11M21 17h11" stroke="#f6e4de" stroke-width="2"/></svg>
<div style="left:23px;top:1146px;width:262px;height:418px;background:#333;"></div>
<div class="t pill" style="left:87px;top:1154px;width:70px;height:26px;line-height:26px;line-height:22px;">-Inf</div>
<div class="t vbox" style="left:87px;top:1192px;width:70px;height:26px;line-height:26px;line-height:22px;">0</div>
<div class="mt" style="left:171px;top:1154px;width:10px;height:404px;"></div>
<div class="mt" style="left:183px;top:1154px;width:10px;height:404px;"></div>
<div style="left:171px;top:1194px;width:22px;height:2px;background:#3a3a3a;"></div>
<div class="tk" style="left:197px;top:1154px;width:8px;height:2px;"></div>
<div class="t sc" style="left:207px;top:1151px;width:38px;height:28px;line-height:28px;">6</div>
<div class="t sc" style="left:207px;top:1181px;width:38px;height:28px;line-height:28px;">0</div>
<div class="tk" style="left:197px;top:1234px;width:8px;height:2px;"></div>
<div class="t sc" style="left:207px;top:1221px;width:38px;height:28px;line-height:28px;">6</div>
<div class="tk" style="left:197px;top:1274px;width:8px;height:2px;"></div>
<div class="t sc" style="left:207px;top:1261px;width:38px;height:28px;line-height:28px;">12</div>
<div class="tk" style="left:197px;top:1314px;width:8px;height:2px;"></div>
<div class="t sc" style="left:207px;top:1301px;width:38px;height:28px;line-height:28px;">18</div>
<div class="tk" style="left:197px;top:1354px;width:8px;height:2px;"></div>
<div class="t sc" style="left:207px;top:1341px;width:38px;height:28px;line-height:28px;">24</div>
<div class="tk" style="left:197px;top:1396px;width:8px;height:2px;"></div>
<div class="t sc" style="left:207px;top:1383px;width:38px;height:28px;line-height:28px;">30</div>
<div class="tk" style="left:197px;top:1430px;width:8px;height:2px;"></div>
<div class="t sc" style="left:207px;top:1417px;width:38px;height:28px;line-height:28px;">36</div>
<div class="tk" style="left:197px;top:1462px;width:8px;height:2px;"></div>
<div class="t sc" style="left:207px;top:1449px;width:38px;height:28px;line-height:28px;">42</div>
<div class="tk" style="left:197px;top:1488px;width:8px;height:2px;"></div>
<div class="t sc" style="left:207px;top:1475px;width:38px;height:28px;line-height:28px;">48</div>
<div class="tk" style="left:197px;top:1534px;width:8px;height:2px;"></div>
<div class="t sc" style="left:207px;top:1521px;width:38px;height:28px;line-height:28px;">60</div>
<div class="tkd" style="left:197px;top:1512px;width:8px;height:2px;"></div>
<div class="tkd" style="left:197px;top:1550px;width:8px;height:2px;"></div>
<svg style="left:195px;top:1184px" width="22" height="22"><path d="M20 1v20L1 11z" fill="#9c9c9c" stroke="#b4b4b4" stroke-width="1"/></svg>
<svg style="left:82px;top:1366px" width="80" height="90"><g transform="translate(-82,-1366)"><path d="M111.2 1432.2A23.8 23.8 0 0 1 118.3 1387.5M125.7 1387.5A23.8 23.8 0 0 1 132.8 1432.2" fill="none" stroke="#272727" stroke-width="4"/><path d="M122 1412V1385.2" stroke="#272727" stroke-width="4" stroke-linecap="round"/><path d="M114 1373.5h16l-8 9z" fill="#272727"/></g></svg>
<div class="t num" style="left:99px;top:1444px;width:46px;height:46px;line-height:46px;line-height:42px;">1</div>
<div class="t sb" style="left:99px;top:1498px;width:46px;height:26px;line-height:26px;line-height:22px;">S</div>
<div style="left:289px;top:1146px;width:262px;height:418px;background:#333;"></div>
<div class="t pill" style="left:353px;top:1154px;width:70px;height:26px;line-height:26px;line-height:22px;">-Inf</div>
<div class="t vbox" style="left:353px;top:1192px;width:70px;height:26px;line-height:26px;line-height:22px;">0</div>
<div class="mt" style="left:437px;top:1154px;width:10px;height:404px;"></div>
<div class="mt" style="left:449px;top:1154px;width:10px;height:404px;"></div>
<div style="left:437px;top:1194px;width:22px;height:2px;background:#3a3a3a;"></div>
<div class="tk" style="left:463px;top:1154px;width:8px;height:2px;"></div>
<div class="t sc" style="left:473px;top:1151px;width:38px;height:28px;line-height:28px;">6</div>
<div class="t sc" style="left:473px;top:1181px;width:38px;height:28px;line-height:28px;">0</div>
<div class="tk" style="left:463px;top:1234px;width:8px;height:2px;"></div>
<div class="t sc" style="left:473px;top:1221px;width:38px;height:28px;line-height:28px;">6</div>
<div class="tk" style="left:463px;top:1274px;width:8px;height:2px;"></div>
<div class="t sc" style="left:473px;top:1261px;width:38px;height:28px;line-height:28px;">12</div>
<div class="tk" style="left:463px;top:1314px;width:8px;height:2px;"></div>
<div class="t sc" style="left:473px;top:1301px;width:38px;height:28px;line-height:28px;">18</div>
<div class="tk" style="left:463px;top:1354px;width:8px;height:2px;"></div>
<div class="t sc" style="left:473px;top:1341px;width:38px;height:28px;line-height:28px;">24</div>
<div class="tk" style="left:463px;top:1396px;width:8px;height:2px;"></div>
<div class="t sc" style="left:473px;top:1383px;width:38px;height:28px;line-height:28px;">30</div>
<div class="tk" style="left:463px;top:1430px;width:8px;height:2px;"></div>
<div class="t sc" style="left:473px;top:1417px;width:38px;height:28px;line-height:28px;">36</div>
<div class="tk" style="left:463px;top:1462px;width:8px;height:2px;"></div>
<div class="t sc" style="left:473px;top:1449px;width:38px;height:28px;line-height:28px;">42</div>
<div class="tk" style="left:463px;top:1488px;width:8px;height:2px;"></div>
<div class="t sc" style="left:473px;top:1475px;width:38px;height:28px;line-height:28px;">48</div>
<div class="tk" style="left:463px;top:1534px;width:8px;height:2px;"></div>
<div class="t sc" style="left:473px;top:1521px;width:38px;height:28px;line-height:28px;">60</div>
<div class="tkd" style="left:463px;top:1512px;width:8px;height:2px;"></div>
<div class="tkd" style="left:463px;top:1550px;width:8px;height:2px;"></div>
<svg style="left:461px;top:1184px" width="22" height="22"><path d="M20 1v20L1 11z" fill="#9c9c9c" stroke="#b4b4b4" stroke-width="1"/></svg>
<svg style="left:348px;top:1366px" width="80" height="90"><g transform="translate(-348,-1366)"><path d="M377.2 1432.2A23.8 23.8 0 0 1 384.3 1387.5M391.7 1387.5A23.8 23.8 0 0 1 398.8 1432.2" fill="none" stroke="#272727" stroke-width="4"/><path d="M388 1412V1385.2" stroke="#272727" stroke-width="4" stroke-linecap="round"/><path d="M380 1373.5h16l-8 9z" fill="#272727"/></g></svg>
<div class="t num" style="left:365px;top:1444px;width:46px;height:46px;line-height:46px;line-height:42px;">5</div>
<div class="t sb" style="left:365px;top:1498px;width:46px;height:26px;line-height:26px;line-height:22px;">S</div>
<div style="left:555px;top:1146px;width:262px;height:418px;background:#333;"></div>
<div class="t pill" style="left:619px;top:1154px;width:70px;height:26px;line-height:26px;line-height:22px;">-Inf</div>
<div class="t vbox" style="left:619px;top:1192px;width:70px;height:26px;line-height:26px;line-height:22px;">0</div>
<div class="mt" style="left:703px;top:1154px;width:10px;height:404px;"></div>
<div class="mt" style="left:715px;top:1154px;width:10px;height:404px;"></div>
<div style="left:703px;top:1194px;width:22px;height:2px;background:#3a3a3a;"></div>
<div class="tk" style="left:729px;top:1154px;width:8px;height:2px;"></div>
<div class="t sc" style="left:739px;top:1151px;width:38px;height:28px;line-height:28px;">6</div>
<div class="t sc" style="left:739px;top:1181px;width:38px;height:28px;line-height:28px;">0</div>
<div class="tk" style="left:729px;top:1234px;width:8px;height:2px;"></div>
<div class="t sc" style="left:739px;top:1221px;width:38px;height:28px;line-height:28px;">6</div>
<div class="tk" style="left:729px;top:1274px;width:8px;height:2px;"></div>
<div class="t sc" style="left:739px;top:1261px;width:38px;height:28px;line-height:28px;">12</div>
<div class="tk" style="left:729px;top:1314px;width:8px;height:2px;"></div>
<div class="t sc" style="left:739px;top:1301px;width:38px;height:28px;line-height:28px;">18</div>
<div class="tk" style="left:729px;top:1354px;width:8px;height:2px;"></div>
<div class="t sc" style="left:739px;top:1341px;width:38px;height:28px;line-height:28px;">24</div>
<div class="tk" style="left:729px;top:1396px;width:8px;height:2px;"></div>
<div class="t sc" style="left:739px;top:1383px;width:38px;height:28px;line-height:28px;">30</div>
<div class="tk" style="left:729px;top:1430px;width:8px;height:2px;"></div>
<div class="t sc" style="left:739px;top:1417px;width:38px;height:28px;line-height:28px;">36</div>
<div class="tk" style="left:729px;top:1462px;width:8px;height:2px;"></div>
<div class="t sc" style="left:739px;top:1449px;width:38px;height:28px;line-height:28px;">42</div>
<div class="tk" style="left:729px;top:1488px;width:8px;height:2px;"></div>
<div class="t sc" style="left:739px;top:1475px;width:38px;height:28px;line-height:28px;">48</div>
<div class="tk" style="left:729px;top:1534px;width:8px;height:2px;"></div>
<div class="t sc" style="left:739px;top:1521px;width:38px;height:28px;line-height:28px;">60</div>
<div class="tkd" style="left:729px;top:1512px;width:8px;height:2px;"></div>
<div class="tkd" style="left:729px;top:1550px;width:8px;height:2px;"></div>
<svg style="left:727px;top:1184px" width="22" height="22"><path d="M20 1v20L1 11z" fill="#9c9c9c" stroke="#b4b4b4" stroke-width="1"/></svg>
<svg style="left:614px;top:1366px" width="80" height="90"><g transform="translate(-614,-1366)"><path d="M643.2 1432.2A23.8 23.8 0 0 1 650.3 1387.5M657.7 1387.5A23.8 23.8 0 0 1 664.8 1432.2" fill="none" stroke="#272727" stroke-width="4"/><path d="M654 1412V1385.2" stroke="#272727" stroke-width="4" stroke-linecap="round"/><path d="M646 1373.5h16l-8 9z" fill="#272727"/></g></svg>
<div class="t num" style="left:631px;top:1444px;width:46px;height:46px;line-height:46px;line-height:42px;">9</div>
<div class="t sb" style="left:631px;top:1498px;width:46px;height:26px;line-height:26px;line-height:22px;">S</div>
<div style="left:821px;top:1146px;width:300px;height:418px;background:#333;"></div>
<div class="t pill" style="left:905px;top:1154px;width:70px;height:26px;line-height:26px;line-height:22px;">-Inf</div>
<div class="t vbox" style="left:905px;top:1192px;width:70px;height:26px;line-height:26px;line-height:22px;">0</div>
<div class="mt" style="left:989px;top:1154px;width:10px;height:404px;"></div>
<div class="mt" style="left:1001px;top:1154px;width:10px;height:404px;"></div>
<div style="left:989px;top:1194px;width:22px;height:2px;background:#3a3a3a;"></div>
<div class="tk" style="left:1015px;top:1154px;width:8px;height:2px;"></div>
<div class="t sc" style="left:1025px;top:1151px;width:38px;height:28px;line-height:28px;">6</div>
<div class="t sc" style="left:1025px;top:1181px;width:38px;height:28px;line-height:28px;">0</div>
<div class="tk" style="left:1015px;top:1234px;width:8px;height:2px;"></div>
<div class="t sc" style="left:1025px;top:1221px;width:38px;height:28px;line-height:28px;">6</div>
<div class="tk" style="left:1015px;top:1274px;width:8px;height:2px;"></div>
<div class="t sc" style="left:1025px;top:1261px;width:38px;height:28px;line-height:28px;">12</div>
<div class="tk" style="left:1015px;top:1314px;width:8px;height:2px;"></div>
<div class="t sc" style="left:1025px;top:1301px;width:38px;height:28px;line-height:28px;">18</div>
<div class="tk" style="left:1015px;top:1354px;width:8px;height:2px;"></div>
<div class="t sc" style="left:1025px;top:1341px;width:38px;height:28px;line-height:28px;">24</div>
<div class="tk" style="left:1015px;top:1396px;width:8px;height:2px;"></div>
<div class="t sc" style="left:1025px;top:1383px;width:38px;height:28px;line-height:28px;">30</div>
<div class="tk" style="left:1015px;top:1430px;width:8px;height:2px;"></div>
<div class="t sc" style="left:1025px;top:1417px;width:38px;height:28px;line-height:28px;">36</div>
<div class="tk" style="left:1015px;top:1462px;width:8px;height:2px;"></div>
<div class="t sc" style="left:1025px;top:1449px;width:38px;height:28px;line-height:28px;">42</div>
<div class="tk" style="left:1015px;top:1488px;width:8px;height:2px;"></div>
<div class="t sc" style="left:1025px;top:1475px;width:38px;height:28px;line-height:28px;">48</div>
<div class="tk" style="left:1015px;top:1534px;width:8px;height:2px;"></div>
<div class="t sc" style="left:1025px;top:1521px;width:38px;height:28px;line-height:28px;">60</div>
<div class="tkd" style="left:1015px;top:1512px;width:8px;height:2px;"></div>
<div class="tkd" style="left:1015px;top:1550px;width:8px;height:2px;"></div>
<svg style="left:1013px;top:1184px" width="22" height="22"><path d="M20 1v20L1 11z" fill="#9c9c9c" stroke="#b4b4b4" stroke-width="1"/></svg>
<svg style="left:900px;top:1366px" width="80" height="90"><g transform="translate(-900,-1366)"><path d="M929.2 1432.2A23.8 23.8 0 0 1 936.3 1387.5M943.7 1387.5A23.8 23.8 0 0 1 950.8 1432.2" fill="none" stroke="#272727" stroke-width="4"/><path d="M940 1412V1385.2" stroke="#272727" stroke-width="4" stroke-linecap="round"/><path d="M932 1373.5h16l-8 9z" fill="#272727"/></g></svg>
<div class="t num" style="left:917px;top:1444px;width:46px;height:46px;line-height:46px;line-height:42px;">13</div>
<div class="t sb" style="left:917px;top:1498px;width:46px;height:26px;line-height:26px;line-height:22px;">S</div>
<div style="left:1125px;top:1146px;width:262px;height:418px;background:#333;"></div>
<div class="t pill" style="left:1189px;top:1154px;width:70px;height:26px;line-height:26px;line-height:22px;">-Inf</div>
<div class="t vbox" style="left:1189px;top:1192px;width:70px;height:26px;line-height:26px;line-height:22px;">0</div>
<div class="mt" style="left:1273px;top:1154px;width:10px;height:404px;"></div>
<div class="mt" style="left:1285px;top:1154px;width:10px;height:404px;"></div>
<div style="left:1273px;top:1194px;width:22px;height:2px;background:#3a3a3a;"></div>
<div class="tk" style="left:1299px;top:1154px;width:8px;height:2px;"></div>
<div class="t sc" style="left:1309px;top:1151px;width:38px;height:28px;line-height:28px;">6</div>
<div class="t sc" style="left:1309px;top:1181px;width:38px;height:28px;line-height:28px;">0</div>
<div class="tk" style="left:1299px;top:1234px;width:8px;height:2px;"></div>
<div class="t sc" style="left:1309px;top:1221px;width:38px;height:28px;line-height:28px;">6</div>
<div class="tk" style="left:1299px;top:1274px;width:8px;height:2px;"></div>
<div class="t sc" style="left:1309px;top:1261px;width:38px;height:28px;line-height:28px;">12</div>
<div class="tk" style="left:1299px;top:1314px;width:8px;height:2px;"></div>
<div class="t sc" style="left:1309px;top:1301px;width:38px;height:28px;line-height:28px;">18</div>
<div class="tk" style="left:1299px;top:1354px;width:8px;height:2px;"></div>
<div class="t sc" style="left:1309px;top:1341px;width:38px;height:28px;line-height:28px;">24</div>
<div class="tk" style="left:1299px;top:1396px;width:8px;height:2px;"></div>
<div class="t sc" style="left:1309px;top:1383px;width:38px;height:28px;line-height:28px;">30</div>
<div class="tk" style="left:1299px;top:1430px;width:8px;height:2px;"></div>
<div class="t sc" style="left:1309px;top:1417px;width:38px;height:28px;line-height:28px;">36</div>
<div class="tk" style="left:1299px;top:1462px;width:8px;height:2px;"></div>
<div class="t sc" style="left:1309px;top:1449px;width:38px;height:28px;line-height:28px;">42</div>
<div class="tk" style="left:1299px;top:1488px;width:8px;height:2px;"></div>
<div class="t sc" style="left:1309px;top:1475px;width:38px;height:28px;line-height:28px;">48</div>
<div class="tk" style="left:1299px;top:1534px;width:8px;height:2px;"></div>
<div class="t sc" style="left:1309px;top:1521px;width:38px;height:28px;line-height:28px;">60</div>
<div class="tkd" style="left:1299px;top:1512px;width:8px;height:2px;"></div>
<div class="tkd" style="left:1299px;top:1550px;width:8px;height:2px;"></div>
<svg style="left:1297px;top:1184px" width="22" height="22"><path d="M20 1v20L1 11z" fill="#9c9c9c" stroke="#b4b4b4" stroke-width="1"/></svg>
<svg style="left:1184px;top:1366px" width="80" height="90"><g transform="translate(-1184,-1366)"><path d="M1213.2 1432.2A23.8 23.8 0 0 1 1220.3 1387.5M1227.7 1387.5A23.8 23.8 0 0 1 1234.8 1432.2" fill="none" stroke="#272727" stroke-width="4"/><path d="M1224 1412V1385.2" stroke="#272727" stroke-width="4" stroke-linecap="round"/><path d="M1216 1373.5h16l-8 9z" fill="#272727"/></g></svg>
<div class="t num" style="left:1201px;top:1444px;width:46px;height:46px;line-height:46px;line-height:42px;">17</div>
<div class="t sb" style="left:1201px;top:1498px;width:46px;height:26px;line-height:26px;line-height:22px;">S</div>
<div style="left:1391px;top:1146px;width:300px;height:418px;background:#3a413a;"></div>
<div class="t pill" style="left:1475px;top:1154px;width:70px;height:26px;line-height:26px;line-height:22px;">-Inf</div>
<div class="t vbox" style="left:1475px;top:1192px;width:70px;height:26px;line-height:26px;line-height:22px;">-6.0</div>
<div class="mt" style="left:1559px;top:1154px;width:10px;height:404px;"></div>
<div class="mt" style="left:1571px;top:1154px;width:10px;height:404px;"></div>
<div style="left:1559px;top:1194px;width:22px;height:2px;background:#3a3a3a;"></div>
<div class="tk" style="left:1585px;top:1154px;width:8px;height:2px;"></div>
<div class="t sc" style="left:1595px;top:1151px;width:38px;height:28px;line-height:28px;">6</div>
<div class="tk" style="left:1585px;top:1194px;width:8px;height:2px;"></div>
<div class="t sc" style="left:1595px;top:1181px;width:38px;height:28px;line-height:28px;">0</div>
<div class="t sc" style="left:1595px;top:1221px;width:38px;height:28px;line-height:28px;">6</div>
<div class="tk" style="left:1585px;top:1274px;width:8px;height:2px;"></div>
<div class="t sc" style="left:1595px;top:1261px;width:38px;height:28px;line-height:28px;">12</div>
<div class="tk" style="left:1585px;top:1314px;width:8px;height:2px;"></div>
<div class="t sc" style="left:1595px;top:1301px;width:38px;height:28px;line-height:28px;">18</div>
<div class="tk" style="left:1585px;top:1354px;width:8px;height:2px;"></div>
<div class="t sc" style="left:1595px;top:1341px;width:38px;height:28px;line-height:28px;">24</div>
<div class="tk" style="left:1585px;top:1396px;width:8px;height:2px;"></div>
<div class="t sc" style="left:1595px;top:1383px;width:38px;height:28px;line-height:28px;">30</div>
<div class="tk" style="left:1585px;top:1430px;width:8px;height:2px;"></div>
<div class="t sc" style="left:1595px;top:1417px;width:38px;height:28px;line-height:28px;">36</div>
<div class="tk" style="left:1585px;top:1462px;width:8px;height:2px;"></div>
<div class="t sc" style="left:1595px;top:1449px;width:38px;height:28px;line-height:28px;">42</div>
<div class="tk" style="left:1585px;top:1488px;width:8px;height:2px;"></div>
<div class="t sc" style="left:1595px;top:1475px;width:38px;height:28px;line-height:28px;">48</div>
<div class="tk" style="left:1585px;top:1534px;width:8px;height:2px;"></div>
<div class="t sc" style="left:1595px;top:1521px;width:38px;height:28px;line-height:28px;">60</div>
<div class="tkd" style="left:1585px;top:1512px;width:8px;height:2px;"></div>
<div class="tkd" style="left:1585px;top:1550px;width:8px;height:2px;"></div>
<svg style="left:1583px;top:1224px" width="22" height="22"><path d="M20 1v20L1 11z" fill="#9c9c9c" stroke="#b4b4b4" stroke-width="1"/></svg>
<svg style="left:1470px;top:1366px" width="80" height="90"><g transform="translate(-1470,-1366)"><path d="M1499.2 1432.2A23.8 23.8 0 0 1 1506.3 1387.5M1513.7 1387.5A23.8 23.8 0 0 1 1520.8 1432.2" fill="none" stroke="#272727" stroke-width="4"/><path d="M1510 1412V1385.2" stroke="#272727" stroke-width="4" stroke-linecap="round"/><path d="M1502 1373.5h16l-8 9z" fill="#272727"/></g></svg>
<div class="t num" style="left:1487px;top:1444px;width:46px;height:46px;line-height:46px;line-height:42px;">18</div>
<div class="t sb" style="left:1487px;top:1498px;width:46px;height:26px;line-height:26px;line-height:22px;">S</div>
<div class="sb" style="left:1487px;top:1532px;width:46px;height:26px;"></div>
<svg style="left:1487px;top:1532px" width="46" height="26"><circle cx="23" cy="13" r="7" fill="#f0f0f0"/><path d="M23 8v6h-3.5" stroke="#1e201e" stroke-width="2" fill="none"/></svg>
<div style="left:1695px;top:1146px;width:338px;height:418px;background:#333;"></div>
<div class="t pill" style="left:1797px;top:1154px;width:70px;height:26px;line-height:26px;line-height:22px;">-Inf</div>
<div class="t vbox" style="left:1797px;top:1192px;width:70px;height:26px;line-height:26px;line-height:22px;">0</div>
<div class="mt" style="left:1881px;top:1154px;width:10px;height:404px;"></div>
<div class="mt" style="left:1893px;top:1154px;width:10px;height:404px;"></div>
<div style="left:1881px;top:1194px;width:22px;height:2px;background:#3a3a3a;"></div>
<div class="tk" style="left:1907px;top:1154px;width:8px;height:2px;"></div>
<div class="t sc" style="left:1917px;top:1151px;width:38px;height:28px;line-height:28px;">6</div>
<div class="t sc" style="left:1917px;top:1181px;width:38px;height:28px;line-height:28px;">0</div>
<div class="tk" style="left:1907px;top:1234px;width:8px;height:2px;"></div>
<div class="t sc" style="left:1917px;top:1221px;width:38px;height:28px;line-height:28px;">6</div>
<div class="tk" style="left:1907px;top:1274px;width:8px;height:2px;"></div>
<div class="t sc" style="left:1917px;top:1261px;width:38px;height:28px;line-height:28px;">12</div>
<div class="tk" style="left:1907px;top:1314px;width:8px;height:2px;"></div>
<div class="t sc" style="left:1917px;top:1301px;width:38px;height:28px;line-height:28px;">18</div>
<div class="tk" style="left:1907px;top:1354px;width:8px;height:2px;"></div>
<div class="t sc" style="left:1917px;top:1341px;width:38px;height:28px;line-height:28px;">24</div>
<div class="tk" style="left:1907px;top:1396px;width:8px;height:2px;"></div>
<div class="t sc" style="left:1917px;top:1383px;width:38px;height:28px;line-height:28px;">30</div>
<div class="tk" style="left:1907px;top:1430px;width:8px;height:2px;"></div>
<div class="t sc" style="left:1917px;top:1417px;width:38px;height:28px;line-height:28px;">36</div>
<div class="tk" style="left:1907px;top:1462px;width:8px;height:2px;"></div>
<div class="t sc" style="left:1917px;top:1449px;width:38px;height:28px;line-height:28px;">42</div>
<div class="tk" style="left:1907px;top:1488px;width:8px;height:2px;"></div>
<div class="t sc" style="left:1917px;top:1475px;width:38px;height:28px;line-height:28px;">48</div>
<div class="tk" style="left:1907px;top:1534px;width:8px;height:2px;"></div>
<div class="t sc" style="left:1917px;top:1521px;width:38px;height:28px;line-height:28px;">60</div>
<div class="tkd" style="left:1907px;top:1512px;width:8px;height:2px;"></div>
<div class="tkd" style="left:1907px;top:1550px;width:8px;height:2px;"></div>
<svg style="left:1905px;top:1184px" width="22" height="22"><path d="M20 1v20L1 11z" fill="#9c9c9c" stroke="#b4b4b4" stroke-width="1"/></svg>
<svg style="left:1792px;top:1366px" width="80" height="90"><g transform="translate(-1792,-1366)"><path d="M1821.2 1432.2A23.8 23.8 0 0 1 1828.3 1387.5M1835.7 1387.5A23.8 23.8 0 0 1 1842.8 1432.2" fill="none" stroke="#272727" stroke-width="4"/><path d="M1832 1412V1385.2" stroke="#272727" stroke-width="4" stroke-linecap="round"/><path d="M1824 1373.5h16l-8 9z" fill="#272727"/></g></svg>
<div class="t num" style="left:1809px;top:1444px;width:46px;height:46px;line-height:46px;line-height:42px;">19</div>
<div class="t sb" style="left:1809px;top:1498px;width:46px;height:26px;line-height:26px;line-height:22px;">S</div>
<div style="left:2037px;top:1146px;width:300px;height:418px;background:#333;"></div>
<div class="t num" style="left:2133px;top:1444px;width:46px;height:46px;line-height:46px;line-height:42px;">23</div>
<div class="t sb" style="left:2133px;top:1498px;width:46px;height:26px;line-height:26px;line-height:22px;">S</div>
<div class="sb" style="left:2133px;top:1532px;width:46px;height:26px;"></div>
<svg style="left:2133px;top:1532px" width="46" height="26"><circle cx="23" cy="13" r="7" fill="#f0f0f0"/><path d="M23 8v6h-3.5" stroke="#1e201e" stroke-width="2" fill="none"/></svg>
<div style="left:2237px;top:1152px;width:12px;height:12px;background:#0a0a0a;border-radius:50%;"></div>
<div style="left:2237px;top:1168px;width:12px;height:12px;background:#0a0a0a;border-radius:50%;"></div>
<div style="left:2237px;top:1184px;width:12px;height:12px;background:#0a0a0a;border-radius:50%;"></div>
<div style="left:2237px;top:1200px;width:12px;height:12px;background:#0a0a0a;border-radius:50%;"></div>
<div style="left:2237px;top:1216px;width:12px;height:12px;background:#0a0a0a;border-radius:50%;"></div>
<div style="left:2237px;top:1232px;width:12px;height:12px;background:#0a0a0a;border-radius:50%;"></div>
<div style="left:2237px;top:1248px;width:12px;height:12px;background:#0a0a0a;border-radius:50%;"></div>
<div style="left:2237px;top:1264px;width:12px;height:12px;background:#0a0a0a;border-radius:50%;"></div>
<div style="left:2237px;top:1280px;width:12px;height:12px;background:#0a0a0a;border-radius:50%;"></div>
<div style="left:2237px;top:1296px;width:12px;height:12px;background:#0a0a0a;border-radius:50%;"></div>
<div style="left:2237px;top:1312px;width:12px;height:12px;background:#0a0a0a;border-radius:50%;"></div>
<div style="left:2237px;top:1328px;width:12px;height:12px;background:#0a0a0a;border-radius:50%;"></div>
<div style="left:2237px;top:1344px;width:12px;height:12px;background:#0a0a0a;border-radius:50%;"></div>
<div style="left:2237px;top:1360px;width:12px;height:12px;background:#0a0a0a;border-radius:50%;"></div>
<div style="left:2237px;top:1376px;width:12px;height:12px;background:#0a0a0a;border-radius:50%;"></div>
<div style="left:2237px;top:1392px;width:12px;height:12px;background:#0a0a0a;border-radius:50%;"></div>
<div style="left:2237px;top:1408px;width:12px;height:12px;background:#0a0a0a;border-radius:50%;"></div>
<div style="left:2237px;top:1424px;width:12px;height:12px;background:#0a0a0a;border-radius:50%;"></div>
<div style="left:2237px;top:1440px;width:12px;height:12px;background:#0a0a0a;border-radius:50%;"></div>
<div style="left:2237px;top:1456px;width:12px;height:12px;background:#0a0a0a;border-radius:50%;"></div>
<div style="left:2237px;top:1472px;width:12px;height:12px;background:#0a0a0a;border-radius:50%;"></div>
<div style="left:2237px;top:1488px;width:12px;height:12px;background:#0a0a0a;border-radius:50%;"></div>
<div style="left:2237px;top:1504px;width:12px;height:12px;background:#0a0a0a;border-radius:50%;"></div>
<div style="left:2237px;top:1520px;width:12px;height:12px;background:#0a0a0a;border-radius:50%;"></div>
<div style="left:2237px;top:1536px;width:12px;height:12px;background:#0a0a0a;border-radius:50%;"></div>
<div style="left:2341px;top:1146px;width:300px;height:418px;background:#333;"></div>
<div class="t pill" style="left:2425px;top:1154px;width:70px;height:26px;line-height:26px;line-height:22px;">-Inf</div>
<div class="t vbox" style="left:2425px;top:1192px;width:70px;height:26px;line-height:26px;line-height:22px;">0</div>
<div class="mt" style="left:2509px;top:1154px;width:10px;height:404px;"></div>
<div class="mt" style="left:2521px;top:1154px;width:10px;height:404px;"></div>
<div style="left:2509px;top:1194px;width:22px;height:2px;background:#3a3a3a;"></div>
<div class="tk" style="left:2535px;top:1154px;width:8px;height:2px;"></div>
<div class="t sc" style="left:2545px;top:1151px;width:38px;height:28px;line-height:28px;">6</div>
<div class="t sc" style="left:2545px;top:1181px;width:38px;height:28px;line-height:28px;">0</div>
<div class="tk" style="left:2535px;top:1234px;width:8px;height:2px;"></div>
<div class="t sc" style="left:2545px;top:1221px;width:38px;height:28px;line-height:28px;">6</div>
<div class="tk" style="left:2535px;top:1274px;width:8px;height:2px;"></div>
<div class="t sc" style="left:2545px;top:1261px;width:38px;height:28px;line-height:28px;">12</div>
<div class="tk" style="left:2535px;top:1314px;width:8px;height:2px;"></div>
<div class="t sc" style="left:2545px;top:1301px;width:38px;height:28px;line-height:28px;">18</div>
<div class="tk" style="left:2535px;top:1354px;width:8px;height:2px;"></div>
<div class="t sc" style="left:2545px;top:1341px;width:38px;height:28px;line-height:28px;">24</div>
<div class="tk" style="left:2535px;top:1396px;width:8px;height:2px;"></div>
<div class="t sc" style="left:2545px;top:1383px;width:38px;height:28px;line-height:28px;">30</div>
<div class="tk" style="left:2535px;top:1430px;width:8px;height:2px;"></div>
<div class="t sc" style="left:2545px;top:1417px;width:38px;height:28px;line-height:28px;">36</div>
<div class="tk" style="left:2535px;top:1462px;width:8px;height:2px;"></div>
<div class="t sc" style="left:2545px;top:1449px;width:38px;height:28px;line-height:28px;">42</div>
<div class="tk" style="left:2535px;top:1488px;width:8px;height:2px;"></div>
<div class="t sc" style="left:2545px;top:1475px;width:38px;height:28px;line-height:28px;">48</div>
<div class="tk" style="left:2535px;top:1534px;width:8px;height:2px;"></div>
<div class="t sc" style="left:2545px;top:1521px;width:38px;height:28px;line-height:28px;">60</div>
<div class="tkd" style="left:2535px;top:1512px;width:8px;height:2px;"></div>
<div class="tkd" style="left:2535px;top:1550px;width:8px;height:2px;"></div>
<svg style="left:2533px;top:1184px" width="22" height="22"><path d="M20 1v20L1 11z" fill="#9c9c9c" stroke="#b4b4b4" stroke-width="1"/></svg>
<svg style="left:2420px;top:1366px" width="80" height="90"><g transform="translate(-2420,-1366)"><path d="M2449.2 1432.2A23.8 23.8 0 0 1 2456.3 1387.5M2463.7 1387.5A23.8 23.8 0 0 1 2470.8 1432.2" fill="none" stroke="#272727" stroke-width="4"/><path d="M2460 1412V1385.2" stroke="#272727" stroke-width="4" stroke-linecap="round"/><path d="M2452 1373.5h16l-8 9z" fill="#272727"/></g></svg>
<div class="t num" style="left:2437px;top:1444px;width:46px;height:46px;line-height:46px;line-height:42px;">24</div>
<div class="t sb" style="left:2437px;top:1498px;width:46px;height:26px;line-height:26px;line-height:22px;">S</div>
<div style="left:3071px;top:1146px;width:186px;height:418px;background:#333;"></div>
<div class="t pill" style="left:3093px;top:1154px;width:70px;height:26px;line-height:26px;line-height:22px;">-Inf</div>
<div class="t vbox" style="left:3093px;top:1192px;width:70px;height:26px;line-height:26px;line-height:22px;">0</div>
<div class="mt" style="left:3177px;top:1154px;width:10px;height:404px;"></div>
<div class="mt" style="left:3189px;top:1154px;width:10px;height:404px;"></div>
<div style="left:3177px;top:1194px;width:22px;height:2px;background:#3a3a3a;"></div>
<div class="tk" style="left:3203px;top:1154px;width:8px;height:2px;"></div>
<div class="t sc" style="left:3213px;top:1151px;width:32px;height:28px;line-height:28px;">6</div>
<div class="t sc" style="left:3213px;top:1181px;width:32px;height:28px;line-height:28px;">0</div>
<div class="tk" style="left:3203px;top:1234px;width:8px;height:2px;"></div>
<div class="t sc" style="left:3213px;top:1221px;width:32px;height:28px;line-height:28px;">6</div>
<div class="tk" style="left:3203px;top:1274px;width:8px;height:2px;"></div>
<div class="t sc" style="left:3213px;top:1261px;width:32px;height:28px;line-height:28px;">12</div>
<div class="tk" style="left:3203px;top:1314px;width:8px;height:2px;"></div>
<div class="t sc" style="left:3213px;top:1301px;width:32px;height:28px;line-height:28px;">18</div>
<div class="tk" style="left:3203px;top:1354px;width:8px;height:2px;"></div>
<div class="t sc" style="left:3213px;top:1341px;width:32px;height:28px;line-height:28px;">24</div>
<div class="tk" style="left:3203px;top:1396px;width:8px;height:2px;"></div>
<div class="t sc" style="left:3213px;top:1383px;width:32px;height:28px;line-height:28px;">30</div>
<div class="tk" style="left:3203px;top:1430px;width:8px;height:2px;"></div>
<div class="t sc" style="left:3213px;top:1417px;width:32px;height:28px;line-height:28px;">36</div>
<div class="tk" style="left:3203px;top:1462px;width:8px;height:2px;"></div>
<div class="t sc" style="left:3213px;top:1449px;width:32px;height:28px;line-height:28px;">42</div>
<div class="tk" style="left:3203px;top:1488px;width:8px;height:2px;"></div>
<div class="t sc" style="left:3213px;top:1475px;width:32px;height:28px;line-height:28px;">48</div>
<div class="tk" style="left:3203px;top:1534px;width:8px;height:2px;"></div>
<div class="t sc" style="left:3213px;top:1521px;width:32px;height:28px;line-height:28px;">60</div>
<div class="tkd" style="left:3203px;top:1512px;width:8px;height:2px;"></div>
<div class="tkd" style="left:3203px;top:1550px;width:8px;height:2px;"></div>
<svg style="left:3201px;top:1184px" width="22" height="22"><path d="M20 1v20L1 11z" fill="#9c9c9c" stroke="#b4b4b4" stroke-width="1"/></svg>
<svg style="left:3088px;top:1365px" width="80" height="90"><g transform="translate(-3088,-1365)"><path d="M3117.2 1431.2A23.8 23.8 0 0 1 3124.3 1386.5M3131.7 1386.5A23.8 23.8 0 0 1 3138.8 1431.2" fill="none" stroke="#272727" stroke-width="4"/><path d="M3128 1411V1384.2" stroke="#272727" stroke-width="4" stroke-linecap="round"/><path d="M3120 1372.5h16l-8 9z" fill="#272727"/></g></svg>
<div class="t" style="left:3105px;top:1464px;width:48px;height:26px;line-height:26px;background:#566159;color:#65736a;text-align:center;font-size:20px;-webkit-text-stroke:0;">Solo</div>
<svg style="left:3088px;top:1479px" width="80" height="90"><g transform="translate(-3088,-1479)"><path d="M3117.2 1545.2A23.8 23.8 0 1 1 3138.8 1545.2" fill="none" stroke="#272727" stroke-width="4"/></g></svg>
<svg style="left:3088px;top:1484px" width="80" height="80"><path d="M29.2 61.2A23.8 23.8 0 0 1 37.5 16.3" fill="none" stroke="#5b9df0" stroke-width="4"/><path d="M40 40L38 15" stroke="#272727" stroke-width="4" stroke-linecap="round"/><circle cx="40" cy="62" r="10" fill="#333"/><path d="M33.5 64a6.5 6.5 0 1 1 13 0" fill="none" stroke="#e6e6e6" stroke-width="2.6"/><rect x="31.8" y="62" width="4.2" height="7.5" rx="1.5" fill="#e6e6e6"/><rect x="44" y="62" width="4.2" height="7.5" rx="1.5" fill="#e6e6e6"/></svg>
<svg style="left:3275px;top:124px" width="38" height="38"><circle cx="19" cy="19" r="19" fill="#1d1e1e"/><path d="M8 12h22M8 19h22M8 26h22" stroke="#0c0c0c" stroke-width="4"/></svg>
<svg style="left:3275px;top:166px" width="38" height="38"><circle cx="19" cy="19" r="19" fill="#1d1e1e"/><path d="M11 9v21M19 9v21M27 9v21" stroke="#f08432" stroke-width="4"/></svg>
<div style="left:3285px;top:234px;width:15px;height:282px;background:#101111;border-radius:8px;"></div>
<div class="t c b" style="left:3279px;top:1346.0px;width:26px;height:26px;line-height:26px;border-radius:50%;background:#191f23;color:#12171a;font-size:15px;letter-spacing:.5px;">I·O</div>
<div class="t c b" style="left:3279px;top:1384.0px;width:26px;height:24px;line-height:24px;border-radius:13px 13px 0 0;background:#3c3c3c;color:#1c1c1c;font-size:15px;letter-spacing:.5px;">S</div>
<div class="t c b" style="left:3279px;top:1412.0px;width:26px;height:24px;line-height:24px;border-radius:0 0 13px 13px;background:#3c3c3c;color:#1c1c1c;font-size:15px;letter-spacing:.5px;">R</div>
<div class="t c b" style="left:3279px;top:1448.0px;width:26px;height:26px;line-height:26px;border-radius:50%;background:#f08432;color:#111;font-size:15px;letter-spacing:.5px;">M</div>
<div class="t c b" style="left:3279px;top:1486.0px;width:26px;height:26px;line-height:26px;border-radius:50%;background:#191f23;color:#12171a;font-size:15px;letter-spacing:.5px;">D</div>
<div class="t c b" style="left:3279px;top:1524.0px;width:26px;height:26px;line-height:26px;border-radius:50%;background:#191f23;color:#12171a;font-size:15px;letter-spacing:.5px;">X</div>
<div style="left:15px;top:1588px;width:3308px;height:392px;background:#333;border-radius:10px;"></div>
<div style="left:43px;top:1594px;width:3255.5px;height:379.5px;background:#3a413a;border:2px solid #1b1c1b;border-radius:9px;"></div>
<div style="left:49px;top:1630px;width:1490px;height:338px;background:#313131;"></div>
<div style="left:53px;top:1600px;width:26px;height:26px;background:#f5b94f;border:2px solid #6d6d6d;border-radius:50%;"></div>
<div class="t b" style="left:87px;top:1596px;width:290px;height:34px;line-height:34px;font-size:20px;">KRIA COMBINED DRUM...</div>
<div class="t dk" style="left:364px;top:1601px;width:64px;height:25px;line-height:25px;line-height:21px;font-size:20.5px;letter-spacing:.5px;">Map</div>
<div style="left:437px;top:1600px;width:26px;height:26px;background:#232523;border:2px solid #626262;border-radius:50%;"></div>
<svg style="left:438px;top:1601px" width="24" height="24" viewBox="438 1601 24 24"><path d="M450.9 1606.9A6.2 6.2 0 0 0 443.8 1612.5" fill="none" stroke="#f0f0f0" stroke-width="2"/><path d="M449.1 1619.1A6.2 6.2 0 0 0 456.2 1613.5" fill="none" stroke="#f0f0f0" stroke-width="2"/><path d="M440.6 1611.8h6.8l-3.4 4.4z" fill="#f0f0f0"/><path d="M452.6 1614.2h6.8l-3.4-4.4z" fill="#f0f0f0"/></svg>
<div style="left:471px;top:1600px;width:26px;height:26px;background:#232523;border:2px solid #626262;border-radius:50%;"></div>
<svg style="left:472px;top:1601px" width="24" height="24" viewBox="472 1601 24 24"><path d="M477.5 1606.5h10l3 3v10h-13z" fill="#f0f0f0"/><rect x="480.5" y="1606.5" width="6" height="5" fill="#1e201e"/></svg>
<div style="left:53px;top:1636px;width:26px;height:26px;background:#f08432;border-radius:50%;"></div>
<div style="left:53px;top:1670px;width:26px;height:26px;background:#f08432;border-radius:50%;"></div>
<div style="left:53px;top:1704px;width:26px;height:26px;background:#f08432;border-radius:50%;"></div>
<svg style="left:53px;top:1636px" width="26" height="26" viewBox="53 1636 26 26"><path d="M61.4 1653.6A6.5 6.5 0 1 1 70.6 1653.6" fill="none" stroke="#2d2f2d" stroke-width="3"/><path d="M66.0 1649.0L71.0 1654.5" stroke="#2d2f2d" stroke-width="3.4" stroke-linecap="butt"/></svg>
<svg style="left:53px;top:1670px" width="26" height="26" viewBox="53 1670 26 26"><path d="M62 1678.5h10M62 1683h10M62 1687.5h10" stroke="#2d2f2d" stroke-width="2.4"/><path d="M58.5 1678.5h2M58.5 1683h2M58.5 1687.5h2" stroke="#2d2f2d" stroke-width="2.4"/></svg>
<svg style="left:53px;top:1704px" width="26" height="26" viewBox="53 1704 26 26"><rect x="58.5" y="1713" width="15" height="8" rx="1.5" fill="none" stroke="#2d2f2d" stroke-width="2.4"/><rect x="58.5" y="1713" width="15" height="3" fill="#2d2f2d"/></svg>
<div class="t c b" style="left:53px;top:1838px;width:26px;height:26px;line-height:26px;border-radius:50%;background:#1b2227;color:#2c353b;font-size:13px;">I·O</div>
<div class="t c b" style="left:53px;top:1872px;width:26px;height:23px;line-height:23px;border-radius:13px 13px 2px 2px;background:#3b3b3b;color:#2c2c2c;font-size:14px;">S</div>
<div class="t c b" style="left:53px;top:1899px;width:26px;height:25px;line-height:25px;border-radius:2px 2px 13px 13px;background:#1b2227;color:#2c353b;font-size:14px;">R</div>
<div style="left:53.5px;top:1932.5px;width:25px;height:25px;background:#f5b94f;border:2px solid #7d7d7d;"></div>
<svg style="left:53px;top:1932px" width="26" height="26" viewBox="53 1932 26 26"><path d="M59 1941v8M62.5 1941v8" stroke="#2a2a2a" stroke-width="2"/><path d="M65.5 1939v12l8.5-6z" fill="#2a2a2a"/></svg>
<div style="left:27px;top:1744px;width:6px;height:6px;background:#0c0c0c;border-radius:50%;"></div>
<div style="left:27px;top:1752px;width:6px;height:6px;background:#0c0c0c;border-radius:50%;"></div>
<div style="left:27px;top:1760px;width:6px;height:6px;background:#0c0c0c;border-radius:50%;"></div>
<div style="left:27px;top:1768px;width:6px;height:6px;background:#0c0c0c;border-radius:50%;"></div>
<div style="left:27px;top:1776px;width:6px;height:6px;background:#0c0c0c;border-radius:50%;"></div>
<div style="left:27px;top:1784px;width:6px;height:6px;background:#0c0c0c;border-radius:50%;"></div>
<div style="left:27px;top:1792px;width:6px;height:6px;background:#0c0c0c;border-radius:50%;"></div>
<div style="left:27px;top:1800px;width:6px;height:6px;background:#0c0c0c;border-radius:50%;"></div>
<div style="left:27px;top:1808px;width:6px;height:6px;background:#0c0c0c;border-radius:50%;"></div>
<div style="left:27px;top:1816px;width:6px;height:6px;background:#0c0c0c;border-radius:50%;"></div>
<div class="mac" style="left:87px;top:1637.5px;width:99.5px;height:160.5px;"><div class="mach"></div></div>
<div class="t c" style="left:89.5px;top:1640.5px;width:99px;height:30px;line-height:30px;font-size:20.3px;letter-spacing:.9px;">Macro 1</div>
<svg style="left:108px;top:1706.5px" width="60" height="60" viewBox="108 1706.5 60 60"><path d="M125.2 1757.4A24.5 24.5 0 1 1 150.8 1757.4" fill="none" stroke="#6e6e6e" stroke-width="3.5"/><path d="M136.7 1738.6L124.9 1757.8" stroke="#6e6e6e" stroke-width="3.8" stroke-linecap="round"/></svg>
<div class="t c" style="left:87.5px;top:1757.5px;width:99px;height:26px;line-height:26px;font-size:20.3px;">0</div>
<div class="mac" style="left:191px;top:1637.5px;width:99.5px;height:160.5px;"><div class="mach"></div></div>
<div class="t c" style="left:193.5px;top:1640.5px;width:99px;height:30px;line-height:30px;font-size:20.3px;letter-spacing:.9px;">Macro 2</div>
<svg style="left:212px;top:1706.5px" width="60" height="60" viewBox="212 1706.5 60 60"><path d="M229.2 1757.4A24.5 24.5 0 1 1 254.8 1757.4" fill="none" stroke="#6e6e6e" stroke-width="3.5"/><path d="M240.7 1738.6L228.9 1757.8" stroke="#6e6e6e" stroke-width="3.8" stroke-linecap="round"/></svg>
<div class="t c" style="left:191.5px;top:1757.5px;width:99px;height:26px;line-height:26px;font-size:20.3px;">0</div>
<div class="mac" style="left:295px;top:1637.5px;width:99.5px;height:160.5px;"><div class="mach"></div></div>
<div class="t c" style="left:297.5px;top:1640.5px;width:99px;height:30px;line-height:30px;font-size:20.3px;letter-spacing:.9px;">Macro 3</div>
<svg style="left:316px;top:1706.5px" width="60" height="60" viewBox="316 1706.5 60 60"><path d="M333.2 1757.4A24.5 24.5 0 1 1 358.8 1757.4" fill="none" stroke="#6e6e6e" stroke-width="3.5"/><path d="M344.7 1738.6L332.9 1757.8" stroke="#6e6e6e" stroke-width="3.8" stroke-linecap="round"/></svg>
<div class="t c" style="left:295.5px;top:1757.5px;width:99px;height:26px;line-height:26px;font-size:20.3px;">0</div>
<div class="mac" style="left:399px;top:1637.5px;width:99.5px;height:160.5px;"><div class="mach"></div></div>
<div class="t c" style="left:401.5px;top:1640.5px;width:99px;height:30px;line-height:30px;font-size:20.3px;letter-spacing:.9px;">Macro 4</div>
<svg style="left:420px;top:1706.5px" width="60" height="60" viewBox="420 1706.5 60 60"><path d="M437.2 1757.4A24.5 24.5 0 1 1 462.8 1757.4" fill="none" stroke="#6e6e6e" stroke-width="3.5"/><path d="M448.7 1738.6L436.9 1757.8" stroke="#6e6e6e" stroke-width="3.8" stroke-linecap="round"/></svg>
<div class="t c" style="left:399.5px;top:1757.5px;width:99px;height:26px;line-height:26px;font-size:20.3px;">0</div>
<div class="mac" style="left:87px;top:1802.0px;width:99.5px;height:160.5px;"><div class="mach"></div></div>
<div class="t c" style="left:89.5px;top:1805.0px;width:99px;height:30px;line-height:30px;font-size:20.3px;letter-spacing:.9px;">Macro 5</div>
<svg style="left:108px;top:1871.0px" width="60" height="60" viewBox="108 1871.0 60 60"><path d="M125.2 1921.9A24.5 24.5 0 1 1 150.8 1921.9" fill="none" stroke="#6e6e6e" stroke-width="3.5"/><path d="M136.7 1903.1L124.9 1922.3" stroke="#6e6e6e" stroke-width="3.8" stroke-linecap="round"/></svg>
<div class="t c" style="left:87.5px;top:1922.0px;width:99px;height:26px;line-height:26px;font-size:20.3px;">0</div>
<div class="mac" style="left:191px;top:1802.0px;width:99.5px;height:160.5px;"><div class="mach"></div></div>
<div class="t c" style="left:193.5px;top:1805.0px;width:99px;height:30px;line-height:30px;font-size:20.3px;letter-spacing:.9px;">Macro 6</div>
<svg style="left:212px;top:1871.0px" width="60" height="60" viewBox="212 1871.0 60 60"><path d="M229.2 1921.9A24.5 24.5 0 1 1 254.8 1921.9" fill="none" stroke="#6e6e6e" stroke-width="3.5"/><path d="M240.7 1903.1L228.9 1922.3" stroke="#6e6e6e" stroke-width="3.8" stroke-linecap="round"/></svg>
<div class="t c" style="left:191.5px;top:1922.0px;width:99px;height:26px;line-height:26px;font-size:20.3px;">0</div>
<div class="mac" style="left:295px;top:1802.0px;width:99.5px;height:160.5px;"><div class="mach"></div></div>
<div class="t c" style="left:297.5px;top:1805.0px;width:99px;height:30px;line-height:30px;font-size:20.3px;letter-spacing:.9px;">Macro 7</div>
<svg style="left:316px;top:1871.0px" width="60" height="60" viewBox="316 1871.0 60 60"><path d="M333.2 1921.9A24.5 24.5 0 1 1 358.8 1921.9" fill="none" stroke="#6e6e6e" stroke-width="3.5"/><path d="M344.7 1903.1L332.9 1922.3" stroke="#6e6e6e" stroke-width="3.8" stroke-linecap="round"/></svg>
<div class="t c" style="left:295.5px;top:1922.0px;width:99px;height:26px;line-height:26px;font-size:20.3px;">0</div>
<div class="mac" style="left:399px;top:1802.0px;width:99.5px;height:160.5px;"><div class="mach"></div></div>
<div class="t c" style="left:401.5px;top:1805.0px;width:99px;height:30px;line-height:30px;font-size:20.3px;letter-spacing:.9px;">Macro 8</div>
<svg style="left:420px;top:1871.0px" width="60" height="60" viewBox="420 1871.0 60 60"><path d="M437.2 1921.9A24.5 24.5 0 1 1 462.8 1921.9" fill="none" stroke="#6e6e6e" stroke-width="3.5"/><path d="M448.7 1903.1L436.9 1922.3" stroke="#6e6e6e" stroke-width="3.8" stroke-linecap="round"/></svg>
<div class="t c" style="left:399.5px;top:1922.0px;width:99px;height:26px;line-height:26px;font-size:20.3px;">0</div>
<svg style="left:510px;top:1637px" width="46" height="324" viewBox="510 1637 46 324"><g fill="#bcbaba"><rect x="513" y="1640" width="8" height="8"/><rect x="523" y="1640" width="8" height="8"/><rect x="533" y="1640" width="8" height="8"/><rect x="543" y="1640" width="8" height="8"/><rect x="513" y="1650" width="8" height="8"/><rect x="523" y="1650" width="8" height="8"/><rect x="533" y="1650" width="8" height="8"/><rect x="543" y="1650" width="8" height="8"/><rect x="513" y="1660" width="8" height="8"/><rect x="523" y="1660" width="8" height="8"/><rect x="533" y="1660" width="8" height="8"/><rect x="543" y="1660" width="8" height="8"/><rect x="513" y="1670" width="8" height="8"/><rect x="523" y="1670" width="8" height="8"/><rect x="533" y="1670" width="8" height="8"/><rect x="543" y="1670" width="8" height="8"/><rect x="513" y="1680" width="8" height="8"/><rect x="523" y="1680" width="8" height="8"/><rect x="533" y="1680" width="8" height="8"/><rect x="543" y="1680" width="8" height="8"/><rect x="513" y="1690" width="8" height="8"/><rect x="523" y="1690" width="8" height="8"/><rect x="533" y="1690" width="8" height="8"/><rect x="543" y="1690" width="8" height="8"/><rect x="513" y="1700" width="8" height="8"/><rect x="523" y="1700" width="8" height="8"/><rect x="533" y="1700" width="8" height="8"/><rect x="543" y="1700" width="8" height="8"/><rect x="513" y="1710" width="8" height="8"/><rect x="523" y="1710" width="8" height="8"/><rect x="533" y="1710" width="8" height="8"/><rect x="543" y="1710" width="8" height="8"/><rect x="513" y="1720" width="8" height="8"/><rect x="523" y="1720" width="8" height="8"/><rect x="533" y="1720" width="8" height="8"/><rect x="543" y="1720" width="8" height="8"/><rect x="513" y="1730" width="8" height="8"/><rect x="523" y="1730" width="8" height="8"/><rect x="533" y="1730" width="8" height="8"/><rect x="543" y="1730" width="8" height="8"/><rect x="513" y="1740" width="8" height="8"/><rect x="523" y="1740" width="8" height="8"/><rect x="533" y="1740" width="8" height="8"/><rect x="543" y="1740" width="8" height="8"/><rect x="513" y="1750" width="8" height="8"/><rect x="523" y="1750" width="8" height="8"/><rect x="533" y="1750" width="8" height="8"/><rect x="543" y="1750" width="8" height="8"/><rect x="513" y="1760" width="8" height="8"/><rect x="523" y="1760" width="8" height="8"/><rect x="533" y="1760" width="8" height="8"/><rect x="543" y="1760" width="8" height="8"/><rect x="513" y="1770" width="8" height="8"/><rect x="523" y="1770" width="8" height="8"/><rect x="533" y="1770" width="8" height="8"/><rect x="543" y="1770" width="8" height="8"/><rect x="513" y="1780" width="8" height="8"/><rect x="523" y="1780" width="8" height="8"/><rect x="533" y="1780" width="8" height="8"/><rect x="543" y="1780" width="8" height="8"/><rect x="513" y="1790" width="8" height="8"/><rect x="523" y="1790" width="8" height="8"/><rect x="533" y="1790" width="8" height="8"/><rect x="543" y="1790" width="8" height="8"/><rect x="513" y="1800" width="8" height="8"/><rect x="523" y="1800" width="8" height="8"/><rect x="533" y="1800" width="8" height="8"/><rect x="543" y="1800" width="8" height="8"/><rect x="513" y="1810" width="8" height="8"/><rect x="523" y="1810" width="8" height="8"/><rect x="533" y="1810" width="8" height="8"/><rect x="543" y="1810" width="8" height="8"/><rect x="513" y="1820" width="8" height="8"/><rect x="523" y="1820" width="8" height="8"/><rect x="533" y="1820" width="8" height="8"/><rect x="543" y="1820" width="8" height="8"/><rect x="513" y="1830" width="8" height="8"/><rect x="523" y="1830" width="8" height="8"/><rect x="533" y="1830" width="8" height="8"/><rect x="543" y="1830" width="8" height="8"/><rect x="513" y="1840" width="8" height="8"/><rect x="523" y="1840" width="8" height="8"/><rect x="533" y="1840" width="8" height="8"/><rect x="543" y="1840" width="8" height="8"/><rect x="513" y="1850" width="8" height="8"/><rect x="523" y="1850" width="8" height="8"/><rect x="533" y="1850" width="8" height="8"/><rect x="543" y="1850" width="8" height="8"/><rect x="513" y="1860" width="8" height="8"/><rect x="523" y="1860" width="8" height="8"/><rect x="533" y="1860" width="8" height="8"/><rect x="543" y="1860" width="8" height="8"/><rect x="513" y="1870" width="8" height="8"/><rect x="523" y="1870" width="8" height="8"/><rect x="533" y="1870" width="8" height="8"/><rect x="543" y="1870" width="8" height="8"/><rect x="513" y="1880" width="8" height="8"/><rect x="523" y="1880" width="8" height="8"/><rect x="533" y="1880" width="8" height="8"/><rect x="543" y="1880" width="8" height="8"/><rect x="513" y="1890" width="8" height="8"/><rect x="523" y="1890" width="8" height="8"/><rect x="533" y="1890" width="8" height="8"/><rect x="543" y="1890" width="8" height="8"/><rect x="513" y="1900" width="8" height="8"/><rect x="523" y="1900" width="8" height="8"/><rect x="533" y="1900" width="8" height="8"/><rect x="543" y="1900" width="8" height="8"/><rect x="513" y="1910" width="8" height="8"/><rect x="523" y="1910" width="8" height="8"/><rect x="533" y="1910" width="8" height="8"/><rect x="543" y="1910" width="8" height="8"/><rect x="513" y="1920" width="8" height="8"/><rect x="523" y="1920" width="8" height="8"/><rect x="533" y="1920" width="8" height="8"/><rect x="543" y="1920" width="8" height="8"/><rect x="513" y="1930" width="8" height="8"/><rect x="523" y="1930" width="8" height="8"/><rect x="533" y="1930" width="8" height="8"/><rect x="543" y="1930" width="8" height="8"/><rect x="513" y="1940" width="8" height="8"/><rect x="523" y="1940" width="8" height="8"/><rect x="533" y="1940" width="8" height="8"/><rect x="543" y="1940" width="8" height="8"/><rect x="513" y="1950" width="8" height="8"/><rect x="523" y="1950" width="8" height="8"/><rect x="533" y="1950" width="8" height="8"/><rect x="543" y="1950" width="8" height="8"/></g><rect x="511.2" y="1638.2" width="41.6" height="41.6" fill="none" stroke="#8c8c8c" stroke-width="1.6"/></svg>
<div style="left:557px;top:1638px;width:106px;height:78px;background:#1d1d1d;border-radius:7px;"></div>
<div class="t pad" style="left:559px;top:1640px;width:102px;height:46px;line-height:46px;line-height:27px;padding-left:5px;">124</div>
<div class="t padb" style="left:559px;top:1688px;width:30.5px;height:26px;line-height:26px;border-radius:0 0 0 5px;">M</div>
<div class="padb" style="left:591.5px;top:1688px;width:34.5px;height:26px;"></div>
<svg style="left:591.5px;top:1688px" width="34.5" height="26" viewBox="591.5 1688 34.5 26"><path d="M601 1692.5v17l15-8.5z" fill="#6b6b6b"/></svg>
<div class="t padb" style="left:628px;top:1688px;width:33px;height:26px;line-height:26px;border-radius:0 0 5px 0;">S</div>
<div style="left:667px;top:1638px;width:106px;height:78px;background:#1d1d1d;border-radius:7px;"></div>
<div class="t pad" style="left:669px;top:1640px;width:102px;height:46px;line-height:46px;line-height:27px;padding-left:5px;">125</div>
<div class="t padb" style="left:669px;top:1688px;width:30.5px;height:26px;line-height:26px;border-radius:0 0 0 5px;">M</div>
<div class="padb" style="left:701.5px;top:1688px;width:34.5px;height:26px;"></div>
<svg style="left:701.5px;top:1688px" width="34.5" height="26" viewBox="701.5 1688 34.5 26"><path d="M711 1692.5v17l15-8.5z" fill="#6b6b6b"/></svg>
<div class="t padb" style="left:738px;top:1688px;width:33px;height:26px;line-height:26px;border-radius:0 0 5px 0;">S</div>
<div style="left:777px;top:1638px;width:106px;height:78px;background:#1d1d1d;border-radius:7px;"></div>
<div class="t pad" style="left:779px;top:1640px;width:102px;height:46px;line-height:46px;line-height:27px;padding-left:5px;">126</div>
<div class="t padb" style="left:779px;top:1688px;width:30.5px;height:26px;line-height:26px;border-radius:0 0 0 5px;">M</div>
<div class="padb" style="left:811.5px;top:1688px;width:34.5px;height:26px;"></div>
<svg style="left:811.5px;top:1688px" width="34.5" height="26" viewBox="811.5 1688 34.5 26"><path d="M821 1692.5v17l15-8.5z" fill="#6b6b6b"/></svg>
<div class="t padb" style="left:848px;top:1688px;width:33px;height:26px;line-height:26px;border-radius:0 0 5px 0;">S</div>
<div style="left:887px;top:1638px;width:106px;height:78px;background:#1d1d1d;border-radius:7px;"></div>
<div class="t pad" style="left:889px;top:1640px;width:102px;height:46px;line-height:46px;line-height:27px;padding-left:5px;">127</div>
<div class="t padb" style="left:889px;top:1688px;width:30.5px;height:26px;line-height:26px;border-radius:0 0 0 5px;">M</div>
<div class="padb" style="left:921.5px;top:1688px;width:34.5px;height:26px;"></div>
<svg style="left:921.5px;top:1688px" width="34.5" height="26" viewBox="921.5 1688 34.5 26"><path d="M931 1692.5v17l15-8.5z" fill="#6b6b6b"/></svg>
<div class="t padb" style="left:958px;top:1688px;width:33px;height:26px;line-height:26px;border-radius:0 0 5px 0;">S</div>
<div style="left:557px;top:1720px;width:106px;height:78px;background:#1d1d1d;border-radius:7px;"></div>
<div class="t pad" style="left:559px;top:1722px;width:102px;height:46px;line-height:46px;line-height:27px;padding-left:5px;">120</div>
<div class="t padb" style="left:559px;top:1770px;width:30.5px;height:26px;line-height:26px;border-radius:0 0 0 5px;">M</div>
<div class="padb" style="left:591.5px;top:1770px;width:34.5px;height:26px;"></div>
<svg style="left:591.5px;top:1770px" width="34.5" height="26" viewBox="591.5 1770 34.5 26"><path d="M601 1774.5v17l15-8.5z" fill="#6b6b6b"/></svg>
<div class="t padb" style="left:628px;top:1770px;width:33px;height:26px;line-height:26px;border-radius:0 0 5px 0;">S</div>
<div style="left:667px;top:1720px;width:106px;height:78px;background:#1d1d1d;border-radius:7px;"></div>
<div class="t pad" style="left:669px;top:1722px;width:102px;height:46px;line-height:46px;line-height:27px;padding-left:5px;">121</div>
<div class="t padb" style="left:669px;top:1770px;width:30.5px;height:26px;line-height:26px;border-radius:0 0 0 5px;">M</div>
<div class="padb" style="left:701.5px;top:1770px;width:34.5px;height:26px;"></div>
<svg style="left:701.5px;top:1770px" width="34.5" height="26" viewBox="701.5 1770 34.5 26"><path d="M711 1774.5v17l15-8.5z" fill="#6b6b6b"/></svg>
<div class="t padb" style="left:738px;top:1770px;width:33px;height:26px;line-height:26px;border-radius:0 0 5px 0;">S</div>
<div style="left:777px;top:1720px;width:106px;height:78px;background:#1d1d1d;border-radius:7px;"></div>
<div class="t pad" style="left:779px;top:1722px;width:102px;height:46px;line-height:46px;line-height:27px;padding-left:5px;">122</div>
<div class="t padb" style="left:779px;top:1770px;width:30.5px;height:26px;line-height:26px;border-radius:0 0 0 5px;">M</div>
<div class="padb" style="left:811.5px;top:1770px;width:34.5px;height:26px;"></div>
<svg style="left:811.5px;top:1770px" width="34.5" height="26" viewBox="811.5 1770 34.5 26"><path d="M821 1774.5v17l15-8.5z" fill="#6b6b6b"/></svg>
<div class="t padb" style="left:848px;top:1770px;width:33px;height:26px;line-height:26px;border-radius:0 0 5px 0;">S</div>
<div style="left:887px;top:1720px;width:106px;height:78px;background:#1d1d1d;border-radius:7px;"></div>
<div class="t pad" style="left:889px;top:1722px;width:102px;height:46px;line-height:46px;line-height:27px;padding-left:5px;">123</div>
<div class="t padb" style="left:889px;top:1770px;width:30.5px;height:26px;line-height:26px;border-radius:0 0 0 5px;">M</div>
<div class="padb" style="left:921.5px;top:1770px;width:34.5px;height:26px;"></div>
<svg style="left:921.5px;top:1770px" width="34.5" height="26" viewBox="921.5 1770 34.5 26"><path d="M931 1774.5v17l15-8.5z" fill="#6b6b6b"/></svg>
<div class="t padb" style="left:958px;top:1770px;width:33px;height:26px;line-height:26px;border-radius:0 0 5px 0;">S</div>
<div style="left:557px;top:1802px;width:106px;height:78px;background:#1d1d1d;border-radius:7px;"></div>
<div class="t pad" style="left:559px;top:1804px;width:102px;height:46px;line-height:46px;line-height:27px;padding-left:5px;">116</div>
<div class="t padb" style="left:559px;top:1852px;width:30.5px;height:26px;line-height:26px;border-radius:0 0 0 5px;">M</div>
<div class="padb" style="left:591.5px;top:1852px;width:34.5px;height:26px;"></div>
<svg style="left:591.5px;top:1852px" width="34.5" height="26" viewBox="591.5 1852 34.5 26"><path d="M601 1856.5v17l15-8.5z" fill="#6b6b6b"/></svg>
<div class="t padb" style="left:628px;top:1852px;width:33px;height:26px;line-height:26px;border-radius:0 0 5px 0;">S</div>
<div style="left:667px;top:1802px;width:106px;height:78px;background:#1d1d1d;border-radius:7px;"></div>
<div class="t pad" style="left:669px;top:1804px;width:102px;height:46px;line-height:46px;line-height:27px;padding-left:5px;">117</div>
<div class="t padb" style="left:669px;top:1852px;width:30.5px;height:26px;line-height:26px;border-radius:0 0 0 5px;">M</div>
<div class="padb" style="left:701.5px;top:1852px;width:34.5px;height:26px;"></div>
<svg style="left:701.5px;top:1852px" width="34.5" height="26" viewBox="701.5 1852 34.5 26"><path d="M711 1856.5v17l15-8.5z" fill="#6b6b6b"/></svg>
<div class="t padb" style="left:738px;top:1852px;width:33px;height:26px;line-height:26px;border-radius:0 0 5px 0;">S</div>
<div style="left:777px;top:1802px;width:106px;height:78px;background:#1d1d1d;border-radius:7px;"></div>
<div class="t pad" style="left:779px;top:1804px;width:102px;height:46px;line-height:46px;line-height:27px;padding-left:5px;">118</div>
<div class="t padb" style="left:779px;top:1852px;width:30.5px;height:26px;line-height:26px;border-radius:0 0 0 5px;">M</div>
<div class="padb" style="left:811.5px;top:1852px;width:34.5px;height:26px;"></div>
<svg style="left:811.5px;top:1852px" width="34.5" height="26" viewBox="811.5 1852 34.5 26"><path d="M821 1856.5v17l15-8.5z" fill="#6b6b6b"/></svg>
<div class="t padb" style="left:848px;top:1852px;width:33px;height:26px;line-height:26px;border-radius:0 0 5px 0;">S</div>
<div style="left:887px;top:1802px;width:106px;height:78px;background:#1d1d1d;border-radius:7px;"></div>
<div class="t pad" style="left:889px;top:1804px;width:102px;height:46px;line-height:46px;line-height:27px;padding-left:5px;">119</div>
<div class="t padb" style="left:889px;top:1852px;width:30.5px;height:26px;line-height:26px;border-radius:0 0 0 5px;">M</div>
<div class="padb" style="left:921.5px;top:1852px;width:34.5px;height:26px;"></div>
<svg style="left:921.5px;top:1852px" width="34.5" height="26" viewBox="921.5 1852 34.5 26"><path d="M931 1856.5v17l15-8.5z" fill="#6b6b6b"/></svg>
<div class="t padb" style="left:958px;top:1852px;width:33px;height:26px;line-height:26px;border-radius:0 0 5px 0;">S</div>
<div style="left:557px;top:1884px;width:106px;height:78px;background:#1d1d1d;border-radius:7px;"></div>
<div class="t pad" style="left:559px;top:1886px;width:102px;height:46px;line-height:46px;line-height:27px;padding-left:5px;">112</div>
<div class="t padb" style="left:559px;top:1934px;width:30.5px;height:26px;line-height:26px;border-radius:0 0 0 5px;">M</div>
<div class="padb" style="left:591.5px;top:1934px;width:34.5px;height:26px;"></div>
<svg style="left:591.5px;top:1934px" width="34.5" height="26" viewBox="591.5 1934 34.5 26"><path d="M601 1938.5v17l15-8.5z" fill="#6b6b6b"/></svg>
<div class="t padb" style="left:628px;top:1934px;width:33px;height:26px;line-height:26px;border-radius:0 0 5px 0;">S</div>
<div style="left:667px;top:1884px;width:106px;height:78px;background:#1d1d1d;border-radius:7px;"></div>
<div class="t pad" style="left:669px;top:1886px;width:102px;height:46px;line-height:46px;line-height:27px;padding-left:5px;">113</div>
<div class="t padb" style="left:669px;top:1934px;width:30.5px;height:26px;line-height:26px;border-radius:0 0 0 5px;">M</div>
<div class="padb" style="left:701.5px;top:1934px;width:34.5px;height:26px;"></div>
<svg style="left:701.5px;top:1934px" width="34.5" height="26" viewBox="701.5 1934 34.5 26"><path d="M711 1938.5v17l15-8.5z" fill="#6b6b6b"/></svg>
<div class="t padb" style="left:738px;top:1934px;width:33px;height:26px;line-height:26px;border-radius:0 0 5px 0;">S</div>
<div style="left:777px;top:1884px;width:106px;height:78px;background:#1d1d1d;border-radius:7px;"></div>
<div class="t pad" style="left:779px;top:1886px;width:102px;height:46px;line-height:46px;line-height:27px;padding-left:5px;">114</div>
<div class="t padb" style="left:779px;top:1934px;width:30.5px;height:26px;line-height:26px;border-radius:0 0 0 5px;">M</div>
<div class="padb" style="left:811.5px;top:1934px;width:34.5px;height:26px;"></div>
<svg style="left:811.5px;top:1934px" width="34.5" height="26" viewBox="811.5 1934 34.5 26"><path d="M821 1938.5v17l15-8.5z" fill="#6b6b6b"/></svg>
<div class="t padb" style="left:848px;top:1934px;width:33px;height:26px;line-height:26px;border-radius:0 0 5px 0;">S</div>
<div style="left:887px;top:1884px;width:106px;height:78px;background:#1d1d1d;border-radius:7px;"></div>
<div class="t pad" style="left:889px;top:1886px;width:102px;height:46px;line-height:46px;line-height:27px;padding-left:5px;">115</div>
<div class="t padb" style="left:889px;top:1934px;width:30.5px;height:26px;line-height:26px;border-radius:0 0 0 5px;">M</div>
<div class="padb" style="left:921.5px;top:1934px;width:34.5px;height:26px;"></div>
<svg style="left:921.5px;top:1934px" width="34.5" height="26" viewBox="921.5 1934 34.5 26"><path d="M931 1938.5v17l15-8.5z" fill="#6b6b6b"/></svg>
<div class="t padb" style="left:958px;top:1934px;width:33px;height:26px;line-height:26px;border-radius:0 0 5px 0;">S</div>
<div class="t b" style="left:1019px;top:1636px;width:100px;height:30px;line-height:30px;font-size:20.3px;letter-spacing:.1px;">Chain</div>
<div class="t b" style="left:1221px;top:1636px;width:60px;height:30px;line-height:30px;font-size:20.3px;letter-spacing:.3px;">Vol</div>
<div class="t b" style="left:1301px;top:1636px;width:60px;height:30px;line-height:30px;font-size:20.3px;letter-spacing:.1px;">Pan</div>
<div style="left:1009.5px;top:1666.5px;width:519px;height:287px;border:1.5px solid #1b1b1b;border-radius:7px;overflow:hidden;background:#1b1b1b;">
<div style="left:0px;top:0px;width:150px;height:36px;background:#6ae6fc;"></div>
<div class="t" style="left:7px;top:0px;width:60px;height:36px;line-height:36px;color:#0c0c0c;font-size:20.5px;">0</div>
<div style="left:150px;top:0px;width:332px;height:36px;background:#333;"></div>
<svg style="left:158px;top:8px" width="18" height="20"><path d="M1.5 1v18l15.5-9z" fill="#6b6b6b"/></svg>
<div style="left:183px;top:2.5px;width:6px;height:6px;background:#0c0c0c;border-radius:50%;"></div>
<div style="left:183px;top:7.7px;width:6px;height:6px;background:#0c0c0c;border-radius:50%;"></div>
<div style="left:183px;top:12.9px;width:6px;height:6px;background:#0c0c0c;border-radius:50%;"></div>
<div style="left:183px;top:18.1px;width:6px;height:6px;background:#0c0c0c;border-radius:50%;"></div>
<div style="left:183px;top:23.3px;width:6px;height:6px;background:#0c0c0c;border-radius:50%;"></div>
<div style="left:183px;top:28.5px;width:6px;height:6px;background:#0c0c0c;border-radius:50%;"></div>
<div class="vbox" style="left:204px;top:4px;width:76px;height:26px;background:linear-gradient(90deg,#b05a2a 0,#b05a2a 62px,#3d3d3d 62px);"></div>
<div class="t c" style="left:204px;top:4px;width:76px;height:26px;line-height:26px;font-size:20.3px;letter-spacing:.4px;">0.0 dB</div>
<div class="t vbox" style="left:284px;top:4px;width:76px;height:26px;line-height:26px;line-height:22px;">C</div>
<div style="left:364px;top:4px;width:32px;height:26px;background:#f5b94f;border:2px solid #6b6f73;"></div>
<svg style="left:364px;top:4px" width="32" height="26"><path d="M15.5 9H10a2 2 0 0 0-2 2v4.5a2 2 0 0 0 2 2h5.5" fill="none" stroke="#eef1f5" stroke-width="2"/><path d="M15.5 9l4-4.3V21.8l-4-4.3z" fill="none" stroke="#eef1f5" stroke-width="2" stroke-linejoin="round"/></svg>
<div class="t sb" style="left:400px;top:4px;width:32px;height:26px;line-height:26px;line-height:22px;font-size:21px;">S</div>
<div style="left:438px;top:4px;width:26px;height:26px;background:#232523;border:2px solid #626262;border-radius:50%;"></div>
<svg style="left:439px;top:5px" width="24" height="24" viewBox="439 5 24 24"><path d="M451.9 10.9A6.2 6.2 0 0 0 444.8 16.5" fill="none" stroke="#f0f0f0" stroke-width="2"/><path d="M450.1 23.1A6.2 6.2 0 0 0 457.2 17.5" fill="none" stroke="#f0f0f0" stroke-width="2"/><path d="M441.6 15.8h6.8l-3.4 4.4z" fill="#f0f0f0"/><path d="M453.6 18.2h6.8l-3.4-4.4z" fill="#f0f0f0"/></svg>
<div style="left:470px;top:5px;width:4px;height:27px;background:#0a0a0a;"></div>
<div style="left:476px;top:5px;width:4px;height:27px;background:#0a0a0a;"></div>
<div style="left:470px;top:2px;width:4px;height:1.7px;background:#0a0a0a;"></div>
<div style="left:476px;top:2px;width:4px;height:1.7px;background:#0a0a0a;"></div>
<div style="left:0px;top:38px;width:150px;height:36px;background:#6ae6fc;"></div>
<div class="t" style="left:7px;top:38px;width:60px;height:36px;line-height:36px;color:#0c0c0c;font-size:20.5px;">1</div>
<div style="left:150px;top:38px;width:332px;height:36px;background:#333;"></div>
<svg style="left:158px;top:46px" width="18" height="20"><path d="M1.5 1v18l15.5-9z" fill="#6b6b6b"/></svg>
<div style="left:183px;top:40.5px;width:6px;height:6px;background:#0c0c0c;border-radius:50%;"></div>
<div style="left:183px;top:45.7px;width:6px;height:6px;background:#0c0c0c;border-radius:50%;"></div>
<div style="left:183px;top:50.9px;width:6px;height:6px;background:#0c0c0c;border-radius:50%;"></div>
<div style="left:183px;top:56.1px;width:6px;height:6px;background:#0c0c0c;border-radius:50%;"></div>
<div style="left:183px;top:61.3px;width:6px;height:6px;background:#0c0c0c;border-radius:50%;"></div>
<div style="left:183px;top:66.5px;width:6px;height:6px;background:#0c0c0c;border-radius:50%;"></div>
<div class="vbox" style="left:204px;top:42px;width:76px;height:26px;background:linear-gradient(90deg,#b05a2a 0,#b05a2a 62px,#3d3d3d 62px);"></div>
<div class="t c" style="left:204px;top:42px;width:76px;height:26px;line-height:26px;font-size:20.3px;letter-spacing:.4px;">0.0 dB</div>
<div class="t vbox" style="left:284px;top:42px;width:76px;height:26px;line-height:26px;line-height:22px;">C</div>
<div style="left:364px;top:42px;width:32px;height:26px;background:#f5b94f;border:2px solid #6b6f73;"></div>
<svg style="left:364px;top:42px" width="32" height="26"><path d="M15.5 9H10a2 2 0 0 0-2 2v4.5a2 2 0 0 0 2 2h5.5" fill="none" stroke="#eef1f5" stroke-width="2"/><path d="M15.5 9l4-4.3V21.8l-4-4.3z" fill="none" stroke="#eef1f5" stroke-width="2" stroke-linejoin="round"/></svg>
<div class="t sb" style="left:400px;top:42px;width:32px;height:26px;line-height:26px;line-height:22px;font-size:21px;">S</div>
<div style="left:438px;top:42px;width:26px;height:26px;background:#232523;border:2px solid #626262;border-radius:50%;"></div>
<svg style="left:439px;top:43px" width="24" height="24" viewBox="439 43 24 24"><path d="M451.9 48.9A6.2 6.2 0 0 0 444.8 54.5" fill="none" stroke="#f0f0f0" stroke-width="2"/><path d="M450.1 61.1A6.2 6.2 0 0 0 457.2 55.5" fill="none" stroke="#f0f0f0" stroke-width="2"/><path d="M441.6 53.8h6.8l-3.4 4.4z" fill="#f0f0f0"/><path d="M453.6 56.2h6.8l-3.4-4.4z" fill="#f0f0f0"/></svg>
<div style="left:470px;top:43px;width:4px;height:27px;background:#0a0a0a;"></div>
<div style="left:476px;top:43px;width:4px;height:27px;background:#0a0a0a;"></div>
<div style="left:470px;top:40px;width:4px;height:1.7px;background:#0a0a0a;"></div>
<div style="left:476px;top:40px;width:4px;height:1.7px;background:#0a0a0a;"></div>
<div style="left:0px;top:76px;width:150px;height:36px;background:#6ae6fc;"></div>
<div class="t" style="left:7px;top:76px;width:60px;height:36px;line-height:36px;color:#0c0c0c;font-size:20.5px;">2</div>
<div style="left:150px;top:76px;width:332px;height:36px;background:#333;"></div>
<svg style="left:158px;top:84px" width="18" height="20"><path d="M1.5 1v18l15.5-9z" fill="#6b6b6b"/></svg>
<div style="left:183px;top:78.5px;width:6px;height:6px;background:#0c0c0c;border-radius:50%;"></div>
<div style="left:183px;top:83.7px;width:6px;height:6px;background:#0c0c0c;border-radius:50%;"></div>
<div style="left:183px;top:88.9px;width:6px;height:6px;background:#0c0c0c;border-radius:50%;"></div>
<div style="left:183px;top:94.1px;width:6px;height:6px;background:#0c0c0c;border-radius:50%;"></div>
<div style="left:183px;top:99.3px;width:6px;height:6px;background:#0c0c0c;border-radius:50%;"></div>
<div style="left:183px;top:104.5px;width:6px;height:6px;background:#0c0c0c;border-radius:50%;"></div>
<div class="vbox" style="left:204px;top:80px;width:76px;height:26px;background:linear-gradient(90deg,#b05a2a 0,#b05a2a 62px,#3d3d3d 62px);"></div>
<div class="t c" style="left:204px;top:80px;width:76px;height:26px;line-height:26px;font-size:20.3px;letter-spacing:.4px;">0.0 dB</div>
<div class="t vbox" style="left:284px;top:80px;width:76px;height:26px;line-height:26px;line-height:22px;">C</div>
<div style="left:364px;top:80px;width:32px;height:26px;background:#f5b94f;border:2px solid #6b6f73;"></div>
<svg style="left:364px;top:80px" width="32" height="26"><path d="M15.5 9H10a2 2 0 0 0-2 2v4.5a2 2 0 0 0 2 2h5.5" fill="none" stroke="#eef1f5" stroke-width="2"/><path d="M15.5 9l4-4.3V21.8l-4-4.3z" fill="none" stroke="#eef1f5" stroke-width="2" stroke-linejoin="round"/></svg>
<div class="t sb" style="left:400px;top:80px;width:32px;height:26px;line-height:26px;line-height:22px;font-size:21px;">S</div>
<div style="left:438px;top:80px;width:26px;height:26px;background:#232523;border:2px solid #626262;border-radius:50%;"></div>
<svg style="left:439px;top:81px" width="24" height="24" viewBox="439 81 24 24"><path d="M451.9 86.9A6.2 6.2 0 0 0 444.8 92.5" fill="none" stroke="#f0f0f0" stroke-width="2"/><path d="M450.1 99.1A6.2 6.2 0 0 0 457.2 93.5" fill="none" stroke="#f0f0f0" stroke-width="2"/><path d="M441.6 91.8h6.8l-3.4 4.4z" fill="#f0f0f0"/><path d="M453.6 94.2h6.8l-3.4-4.4z" fill="#f0f0f0"/></svg>
<div style="left:470px;top:81px;width:4px;height:27px;background:#0a0a0a;"></div>
<div style="left:476px;top:81px;width:4px;height:27px;background:#0a0a0a;"></div>
<div style="left:470px;top:78px;width:4px;height:1.7px;background:#0a0a0a;"></div>
<div style="left:476px;top:78px;width:4px;height:1.7px;background:#0a0a0a;"></div>
<div style="left:0px;top:114px;width:150px;height:36px;background:#6ae6fc;"></div>
<div class="t" style="left:7px;top:114px;width:60px;height:36px;line-height:36px;color:#0c0c0c;font-size:20.5px;">3</div>
<div style="left:150px;top:114px;width:332px;height:36px;background:#333;"></div>
<svg style="left:158px;top:122px" width="18" height="20"><path d="M1.5 1v18l15.5-9z" fill="#6b6b6b"/></svg>
<div style="left:183px;top:116.5px;width:6px;height:6px;background:#0c0c0c;border-radius:50%;"></div>
<div style="left:183px;top:121.7px;width:6px;height:6px;background:#0c0c0c;border-radius:50%;"></div>
<div style="left:183px;top:126.9px;width:6px;height:6px;background:#0c0c0c;border-radius:50%;"></div>
<div style="left:183px;top:132.1px;width:6px;height:6px;background:#0c0c0c;border-radius:50%;"></div>
<div style="left:183px;top:137.3px;width:6px;height:6px;background:#0c0c0c;border-radius:50%;"></div>
<div style="left:183px;top:142.5px;width:6px;height:6px;background:#0c0c0c;border-radius:50%;"></div>
<div class="vbox" style="left:204px;top:118px;width:76px;height:26px;background:linear-gradient(90deg,#b05a2a 0,#b05a2a 62px,#3d3d3d 62px);"></div>
<div class="t c" style="left:204px;top:118px;width:76px;height:26px;line-height:26px;font-size:20.3px;letter-spacing:.4px;">0.0 dB</div>
<div class="t vbox" style="left:284px;top:118px;width:76px;height:26px;line-height:26px;line-height:22px;">C</div>
<div style="left:364px;top:118px;width:32px;height:26px;background:#f5b94f;border:2px solid #6b6f73;"></div>
<svg style="left:364px;top:118px" width="32" height="26"><path d="M15.5 9H10a2 2 0 0 0-2 2v4.5a2 2 0 0 0 2 2h5.5" fill="none" stroke="#eef1f5" stroke-width="2"/><path d="M15.5 9l4-4.3V21.8l-4-4.3z" fill="none" stroke="#eef1f5" stroke-width="2" stroke-linejoin="round"/></svg>
<div class="t sb" style="left:400px;top:118px;width:32px;height:26px;line-height:26px;line-height:22px;font-size:21px;">S</div>
<div style="left:438px;top:118px;width:26px;height:26px;background:#232523;border:2px solid #626262;border-radius:50%;"></div>
<svg style="left:439px;top:119px" width="24" height="24" viewBox="439 119 24 24"><path d="M451.9 124.9A6.2 6.2 0 0 0 444.8 130.5" fill="none" stroke="#f0f0f0" stroke-width="2"/><path d="M450.1 137.1A6.2 6.2 0 0 0 457.2 131.5" fill="none" stroke="#f0f0f0" stroke-width="2"/><path d="M441.6 129.8h6.8l-3.4 4.4z" fill="#f0f0f0"/><path d="M453.6 132.2h6.8l-3.4-4.4z" fill="#f0f0f0"/></svg>
<div style="left:470px;top:119px;width:4px;height:27px;background:#0a0a0a;"></div>
<div style="left:476px;top:119px;width:4px;height:27px;background:#0a0a0a;"></div>
<div style="left:470px;top:116px;width:4px;height:1.7px;background:#0a0a0a;"></div>
<div style="left:476px;top:116px;width:4px;height:1.7px;background:#0a0a0a;"></div>
<div style="left:0px;top:152px;width:150px;height:36px;background:#6ae6fc;"></div>
<div class="t" style="left:7px;top:152px;width:60px;height:36px;line-height:36px;color:#0c0c0c;font-size:20.5px;">4</div>
<div style="left:150px;top:152px;width:332px;height:36px;background:#333;"></div>
<svg style="left:158px;top:160px" width="18" height="20"><path d="M1.5 1v18l15.5-9z" fill="#6b6b6b"/></svg>
<div style="left:183px;top:154.5px;width:6px;height:6px;background:#0c0c0c;border-radius:50%;"></div>
<div style="left:183px;top:159.7px;width:6px;height:6px;background:#0c0c0c;border-radius:50%;"></div>
<div style="left:183px;top:164.9px;width:6px;height:6px;background:#0c0c0c;border-radius:50%;"></div>
<div style="left:183px;top:170.1px;width:6px;height:6px;background:#0c0c0c;border-radius:50%;"></div>
<div style="left:183px;top:175.3px;width:6px;height:6px;background:#0c0c0c;border-radius:50%;"></div>
<div style="left:183px;top:180.5px;width:6px;height:6px;background:#0c0c0c;border-radius:50%;"></div>
<div class="vbox" style="left:204px;top:156px;width:76px;height:26px;background:linear-gradient(90deg,#b05a2a 0,#b05a2a 62px,#3d3d3d 62px);"></div>
<div class="t c" style="left:204px;top:156px;width:76px;height:26px;line-height:26px;font-size:20.3px;letter-spacing:.4px;">0.0 dB</div>
<div class="t vbox" style="left:284px;top:156px;width:76px;height:26px;line-height:26px;line-height:22px;">C</div>
<div style="left:364px;top:156px;width:32px;height:26px;background:#f5b94f;border:2px solid #6b6f73;"></div>
<svg style="left:364px;top:156px" width="32" height="26"><path d="M15.5 9H10a2 2 0 0 0-2 2v4.5a2 2 0 0 0 2 2h5.5" fill="none" stroke="#eef1f5" stroke-width="2"/><path d="M15.5 9l4-4.3V21.8l-4-4.3z" fill="none" stroke="#eef1f5" stroke-width="2" stroke-linejoin="round"/></svg>
<div class="t sb" style="left:400px;top:156px;width:32px;height:26px;line-height:26px;line-height:22px;font-size:21px;">S</div>
<div style="left:438px;top:156px;width:26px;height:26px;background:#232523;border:2px solid #626262;border-radius:50%;"></div>
<svg style="left:439px;top:157px" width="24" height="24" viewBox="439 157 24 24"><path d="M451.9 162.9A6.2 6.2 0 0 0 444.8 168.5" fill="none" stroke="#f0f0f0" stroke-width="2"/><path d="M450.1 175.1A6.2 6.2 0 0 0 457.2 169.5" fill="none" stroke="#f0f0f0" stroke-width="2"/><path d="M441.6 167.8h6.8l-3.4 4.4z" fill="#f0f0f0"/><path d="M453.6 170.2h6.8l-3.4-4.4z" fill="#f0f0f0"/></svg>
<div style="left:470px;top:157px;width:4px;height:27px;background:#0a0a0a;"></div>
<div style="left:476px;top:157px;width:4px;height:27px;background:#0a0a0a;"></div>
<div style="left:470px;top:154px;width:4px;height:1.7px;background:#0a0a0a;"></div>
<div style="left:476px;top:154px;width:4px;height:1.7px;background:#0a0a0a;"></div>
<div style="left:0px;top:190px;width:150px;height:36px;background:#6ae6fc;"></div>
<div class="t" style="left:7px;top:190px;width:60px;height:36px;line-height:36px;color:#0c0c0c;font-size:20.5px;">5</div>
<div style="left:150px;top:190px;width:332px;height:36px;background:#333;"></div>
<svg style="left:158px;top:198px" width="18" height="20"><path d="M1.5 1v18l15.5-9z" fill="#6b6b6b"/></svg>
<div style="left:183px;top:192.5px;width:6px;height:6px;background:#0c0c0c;border-radius:50%;"></div>
<div style="left:183px;top:197.7px;width:6px;height:6px;background:#0c0c0c;border-radius:50%;"></div>
<div style="left:183px;top:202.9px;width:6px;height:6px;background:#0c0c0c;border-radius:50%;"></div>
<div style="left:183px;top:208.1px;width:6px;height:6px;background:#0c0c0c;border-radius:50%;"></div>
<div style="left:183px;top:213.3px;width:6px;height:6px;background:#0c0c0c;border-radius:50%;"></div>
<div style="left:183px;top:218.5px;width:6px;height:6px;background:#0c0c0c;border-radius:50%;"></div>
<div class="vbox" style="left:204px;top:194px;width:76px;height:26px;background:linear-gradient(90deg,#b05a2a 0,#b05a2a 62px,#3d3d3d 62px);"></div>
<div class="t c" style="left:204px;top:194px;width:76px;height:26px;line-height:26px;font-size:20.3px;letter-spacing:.4px;">0.0 dB</div>
<div class="t vbox" style="left:284px;top:194px;width:76px;height:26px;line-height:26px;line-height:22px;">C</div>
<div style="left:364px;top:194px;width:32px;height:26px;background:#f5b94f;border:2px solid #6b6f73;"></div>
<svg style="left:364px;top:194px" width="32" height="26"><path d="M15.5 9H10a2 2 0 0 0-2 2v4.5a2 2 0 0 0 2 2h5.5" fill="none" stroke="#eef1f5" stroke-width="2"/><path d="M15.5 9l4-4.3V21.8l-4-4.3z" fill="none" stroke="#eef1f5" stroke-width="2" stroke-linejoin="round"/></svg>
<div class="t sb" style="left:400px;top:194px;width:32px;height:26px;line-height:26px;line-height:22px;font-size:21px;">S</div>
<div style="left:438px;top:194px;width:26px;height:26px;background:#232523;border:2px solid #626262;border-radius:50%;"></div>
<svg style="left:439px;top:195px" width="24" height="24" viewBox="439 195 24 24"><path d="M451.9 200.9A6.2 6.2 0 0 0 444.8 206.5" fill="none" stroke="#f0f0f0" stroke-width="2"/><path d="M450.1 213.1A6.2 6.2 0 0 0 457.2 207.5" fill="none" stroke="#f0f0f0" stroke-width="2"/><path d="M441.6 205.8h6.8l-3.4 4.4z" fill="#f0f0f0"/><path d="M453.6 208.2h6.8l-3.4-4.4z" fill="#f0f0f0"/></svg>
<div style="left:470px;top:195px;width:4px;height:27px;background:#0a0a0a;"></div>
<div style="left:476px;top:195px;width:4px;height:27px;background:#0a0a0a;"></div>
<div style="left:470px;top:192px;width:4px;height:1.7px;background:#0a0a0a;"></div>
<div style="left:476px;top:192px;width:4px;height:1.7px;background:#0a0a0a;"></div>
<div style="left:0px;top:228px;width:150px;height:36px;background:#6ae6fc;"></div>
<div class="t" style="left:7px;top:228px;width:60px;height:36px;line-height:36px;color:#0c0c0c;font-size:20.5px;">6</div>
<div style="left:150px;top:228px;width:332px;height:36px;background:#333;"></div>
<svg style="left:158px;top:236px" width="18" height="20"><path d="M1.5 1v18l15.5-9z" fill="#6b6b6b"/></svg>
<div style="left:183px;top:230.5px;width:6px;height:6px;background:#0c0c0c;border-radius:50%;"></div>
<div style="left:183px;top:235.7px;width:6px;height:6px;background:#0c0c0c;border-radius:50%;"></div>
<div style="left:183px;top:240.9px;width:6px;height:6px;background:#0c0c0c;border-radius:50%;"></div>
<div style="left:183px;top:246.1px;width:6px;height:6px;background:#0c0c0c;border-radius:50%;"></div>
<div style="left:183px;top:251.3px;width:6px;height:6px;background:#0c0c0c;border-radius:50%;"></div>
<div style="left:183px;top:256.5px;width:6px;height:6px;background:#0c0c0c;border-radius:50%;"></div>
<div class="vbox" style="left:204px;top:232px;width:76px;height:26px;background:linear-gradient(90deg,#b05a2a 0,#b05a2a 62px,#3d3d3d 62px);"></div>
<div class="t c" style="left:204px;top:232px;width:76px;height:26px;line-height:26px;font-size:20.3px;letter-spacing:.4px;">0.0 dB</div>
<div class="t vbox" style="left:284px;top:232px;width:76px;height:26px;line-height:26px;line-height:22px;">C</div>
<div style="left:364px;top:232px;width:32px;height:26px;background:#f5b94f;border:2px solid #6b6f73;"></div>
<svg style="left:364px;top:232px" width="32" height="26"><path d="M15.5 9H10a2 2 0 0 0-2 2v4.5a2 2 0 0 0 2 2h5.5" fill="none" stroke="#eef1f5" stroke-width="2"/><path d="M15.5 9l4-4.3V21.8l-4-4.3z" fill="none" stroke="#eef1f5" stroke-width="2" stroke-linejoin="round"/></svg>
<div class="t sb" style="left:400px;top:232px;width:32px;height:26px;line-height:26px;line-height:22px;font-size:21px;">S</div>
<div style="left:438px;top:232px;width:26px;height:26px;background:#232523;border:2px solid #626262;border-radius:50%;"></div>
<svg style="left:439px;top:233px" width="24" height="24" viewBox="439 233 24 24"><path d="M451.9 238.9A6.2 6.2 0 0 0 444.8 244.5" fill="none" stroke="#f0f0f0" stroke-width="2"/><path d="M450.1 251.1A6.2 6.2 0 0 0 457.2 245.5" fill="none" stroke="#f0f0f0" stroke-width="2"/><path d="M441.6 243.8h6.8l-3.4 4.4z" fill="#f0f0f0"/><path d="M453.6 246.2h6.8l-3.4-4.4z" fill="#f0f0f0"/></svg>
<div style="left:470px;top:233px;width:4px;height:27px;background:#0a0a0a;"></div>
<div style="left:476px;top:233px;width:4px;height:27px;background:#0a0a0a;"></div>
<div style="left:470px;top:230px;width:4px;height:1.7px;background:#0a0a0a;"></div>
<div style="left:476px;top:230px;width:4px;height:1.7px;background:#0a0a0a;"></div>
<div style="left:0px;top:266px;width:150px;height:36px;background:#6ae6fc;"></div>
<div class="t" style="left:7px;top:266px;width:60px;height:36px;line-height:36px;color:#0c0c0c;font-size:20.5px;">7</div>
<div style="left:150px;top:266px;width:332px;height:36px;background:#3a413a;"></div>
<svg style="left:158px;top:274px" width="18" height="20"><path d="M1.5 1v18l15.5-9z" fill="#f0f0f0"/></svg>
<div style="left:183px;top:268.5px;width:6px;height:6px;background:#0c0c0c;border-radius:50%;"></div>
<div style="left:183px;top:273.7px;width:6px;height:6px;background:#0c0c0c;border-radius:50%;"></div>
<div style="left:183px;top:278.9px;width:6px;height:6px;background:#0c0c0c;border-radius:50%;"></div>
<div style="left:183px;top:284.1px;width:6px;height:6px;background:#0c0c0c;border-radius:50%;"></div>
<div style="left:183px;top:289.3px;width:6px;height:6px;background:#0c0c0c;border-radius:50%;"></div>
<div style="left:183px;top:294.5px;width:6px;height:6px;background:#0c0c0c;border-radius:50%;"></div>
<div class="vbox" style="left:204px;top:270px;width:76px;height:26px;background:linear-gradient(90deg,#b05a2a 0,#b05a2a 62px,#3d3d3d 62px);"></div>
<div class="t c" style="left:204px;top:270px;width:76px;height:26px;line-height:26px;font-size:20.3px;letter-spacing:.4px;">0.0 dB</div>
<div class="t vbox" style="left:284px;top:270px;width:76px;height:26px;line-height:26px;line-height:22px;">C</div>
<div style="left:364px;top:270px;width:32px;height:26px;background:#f5b94f;border:2px solid #6b6f73;"></div>
<svg style="left:364px;top:270px" width="32" height="26"><path d="M15.5 9H10a2 2 0 0 0-2 2v4.5a2 2 0 0 0 2 2h5.5" fill="none" stroke="#eef1f5" stroke-width="2"/><path d="M15.5 9l4-4.3V21.8l-4-4.3z" fill="none" stroke="#eef1f5" stroke-width="2" stroke-linejoin="round"/></svg>
<div class="t sb" style="left:400px;top:270px;width:32px;height:26px;line-height:26px;line-height:22px;font-size:21px;">S</div>
<div style="left:438px;top:270px;width:26px;height:26px;background:#232523;border:2px solid #626262;border-radius:50%;"></div>
<svg style="left:439px;top:271px" width="24" height="24" viewBox="439 271 24 24"><path d="M451.9 276.9A6.2 6.2 0 0 0 444.8 282.5" fill="none" stroke="#f0f0f0" stroke-width="2"/><path d="M450.1 289.1A6.2 6.2 0 0 0 457.2 283.5" fill="none" stroke="#f0f0f0" stroke-width="2"/><path d="M441.6 281.8h6.8l-3.4 4.4z" fill="#f0f0f0"/><path d="M453.6 284.2h6.8l-3.4-4.4z" fill="#f0f0f0"/></svg>
<div style="left:470px;top:271px;width:4px;height:27px;background:#0a0a0a;"></div>
<div style="left:476px;top:271px;width:4px;height:27px;background:#0a0a0a;"></div>
<div style="left:470px;top:268px;width:4px;height:1.7px;background:#0a0a0a;"></div>
<div style="left:476px;top:268px;width:4px;height:1.7px;background:#0a0a0a;"></div>
<div style="left:482px;top:0px;width:36px;height:290px;background:#333;"></div>
<div style="left:494px;top:10px;width:15px;height:268px;background:#383838;border-radius:8px;"></div>
</div>
<div style="left:1539px;top:1595px;width:2px;height:377px;background:#1b1c1b;"></div>
<div style="left:1541px;top:1630px;width:1438px;height:338px;background:#333;"></div>
<div style="left:2979px;top:1596px;width:4px;height:34px;background:#2e322e;"></div>
<div style="left:2979px;top:1630px;width:4px;height:338px;background:#333;"></div>
<div style="left:1549px;top:1600px;width:26px;height:26px;background:#f5b94f;border:2px solid #6d6d6d;border-radius:50%;"></div>
<div style="left:1581px;top:1600px;width:26px;height:26px;background:#232523;border:2px solid #626262;border-radius:50%;"></div>
<svg style="left:1582px;top:1601px" width="24" height="24" viewBox="1582 1601 24 24"><path d="M1589.5 1606v14l11.5-7z" fill="#f0f0f0"/></svg>
<div class="t b" style="left:1616px;top:1596px;width:30px;height:34px;line-height:34px;font-size:20.3px;">7</div>
<div class="t c" style="left:2702px;top:1600px;width:97px;height:27px;line-height:27px;background:#333;border-radius:7px 7px 0 0;font-size:20.3px;letter-spacing:.3px;height:31px;">Sample</div>
<div class="t c" style="left:2803px;top:1600px;width:104px;height:27px;line-height:27px;background:#363c36;border-radius:7px;font-size:20.3px;letter-spacing:.7px;">Controls</div>
<div style="left:2913px;top:1600px;width:26px;height:26px;background:#232523;border:2px solid #626262;border-radius:50%;"></div>
<svg style="left:2914px;top:1601px" width="24" height="24" viewBox="2914 1601 24 24"><path d="M2926.9 1606.9A6.2 6.2 0 0 0 2919.8 1612.5" fill="none" stroke="#f0f0f0" stroke-width="2"/><path d="M2925.1 1619.1A6.2 6.2 0 0 0 2932.2 1613.5" fill="none" stroke="#f0f0f0" stroke-width="2"/><path d="M2916.6 1611.8h6.8l-3.4 4.4z" fill="#f0f0f0"/><path d="M2928.6 1614.2h6.8l-3.4-4.4z" fill="#f0f0f0"/></svg>
<div style="left:2947px;top:1600px;width:26px;height:26px;background:#232523;border:2px solid #626262;border-radius:50%;"></div>
<svg style="left:2948px;top:1601px" width="24" height="24" viewBox="2948 1601 24 24"><path d="M2953.5 1606.5h10l3 3v10h-13z" fill="#f0f0f0"/><rect x="2956.5" y="1606.5" width="6" height="5" fill="#1e201e"/></svg>
<div style="left:1549px;top:1634px;width:83px;height:84px;background:#353535;"></div>
<div style="left:1549px;top:1721px;width:83px;height:83px;background:#353535;"></div>
<div style="left:1549px;top:1807px;width:83px;height:81px;background:#353535;"></div>
<svg style="left:1575px;top:1650px" width="36" height="28" viewBox="1575 1650 36 28"><path d="M1599.1 1661.9A8 6.2 0 1 0 1592.8 1669.4H1596.1" fill="none" stroke="#dc3a2c" stroke-width="2.3"/><path d="M1595.7 1665.4v7.8l5.3-3.9z" fill="#dc3a2c"/></svg>
<div class="t c" style="left:1549px;top:1680px;width:86px;height:28px;line-height:28px;color:#dc3a2c;font-size:19.3px;letter-spacing:-.5px;">Classic</div>
<svg style="left:1578px;top:1738px" width="30" height="24" viewBox="1578 1738 30 24"><path d="M1583.5 1740v18M1584 1749h14" stroke="#8ee64c" stroke-width="2.4"/><path d="M1601.5 1749l-6 -5v10z" fill="#8ee64c"/></svg>
<div class="t c" style="left:1549px;top:1765px;width:86px;height:28px;line-height:28px;color:#8ee64c;font-size:19.3px;letter-spacing:-.5px;">1-Shot</div>
<svg style="left:1580px;top:1824px" width="26" height="22" viewBox="1580 1824 26 22"><path d="M1583.5 1826v18" stroke="#dc3a2c" stroke-width="2"/><path d="M1587.9 1826v18" stroke="#dc3a2c" stroke-width="2"/><path d="M1592.3 1826v18" stroke="#dc3a2c" stroke-width="2"/><path d="M1596.7 1826v18" stroke="#dc3a2c" stroke-width="2"/><path d="M1601.1 1826v18" stroke="#dc3a2c" stroke-width="2"/></svg>
<div class="t c" style="left:1549px;top:1851px;width:86px;height:28px;line-height:28px;color:#dc3a2c;font-size:19.3px;letter-spacing:-.5px;">Slice</div>
<div style="left:1643px;top:1642px;width:1323.5px;height:180px;background:#854b27;"></div>
<svg style="left:1643px;top:1642px" width="1325" height="180" viewBox="1643 1642 1325 180"><polygon points="1646.0,1728.8 1648.5,1727.8 1651.0,1727.3 1653.5,1727.3 1656.0,1726.8 1658.5,1726.3 1661.0,1725.8 1663.5,1726.4 1666.0,1725.7 1668.5,1725.8 1671.0,1725.3 1673.5,1725.6 1676.0,1726.7 1678.5,1726.6 1681.0,1726.8 1683.5,1726.3 1686.0,1726.5 1688.5,1727.2 1691.0,1726.4 1693.5,1727.0 1696.0,1726.9 1698.5,1726.5 1701.0,1727.3 1703.5,1727.0 1706.0,1726.9 1708.5,1726.6 1711.0,1727.4 1713.5,1727.8 1716.0,1728.0 1718.5,1727.2 1721.0,1727.1 1723.5,1727.4 1726.0,1727.6 1728.5,1727.4 1731.0,1727.8 1733.5,1728.4 1736.0,1727.8 1738.5,1727.6 1741.0,1728.2 1743.5,1728.6 1746.0,1728.5 1748.5,1728.7 1751.0,1728.7 1753.5,1728.4 1756.0,1728.8 1758.5,1728.4 1761.0,1728.2 1763.5,1728.8 1766.0,1728.7 1768.5,1728.2 1771.0,1729.0 1773.5,1729.0 1776.0,1728.7 1778.5,1729.3 1781.0,1729.0 1783.5,1728.5 1786.0,1729.0 1788.5,1728.9 1791.0,1728.7 1793.5,1728.8 1796.0,1729.2 1798.5,1729.5 1801.0,1729.6 1803.5,1729.5 1806.0,1729.4 1808.5,1729.8 1811.0,1729.7 1813.5,1729.8 1816.0,1729.4 1818.5,1729.7 1821.0,1729.7 1823.5,1729.3 1826.0,1729.6 1828.5,1730.0 1831.0,1729.8 1833.5,1729.5 1836.0,1730.1 1838.5,1729.8 1841.0,1729.8 1843.5,1729.8 1846.0,1729.6 1848.5,1730.1 1851.0,1730.2 1853.5,1730.0 1856.0,1730.1 1858.5,1729.8 1861.0,1729.9 1863.5,1729.9 1866.0,1730.3 1868.5,1730.2 1871.0,1730.5 1873.5,1730.4 1876.0,1730.0 1878.5,1730.0 1881.0,1730.1 1883.5,1730.5 1886.0,1730.5 1888.5,1730.3 1891.0,1730.2 1893.5,1730.3 1896.0,1730.6 1898.5,1730.3 1901.0,1730.4 1903.5,1730.7 1906.0,1730.6 1908.5,1730.4 1911.0,1730.6 1913.5,1730.5 1916.0,1730.8 1918.5,1730.5 1921.0,1730.8 1923.5,1730.5 1926.0,1730.8 1928.5,1730.9 1931.0,1730.6 1933.5,1730.8 1936.0,1730.8 1938.5,1730.7 1941.0,1730.9 1943.5,1730.9 1946.0,1730.9 1948.5,1731.0 1951.0,1730.9 1953.5,1730.9 1956.0,1731.0 1958.5,1730.9 1961.0,1731.0 1963.5,1731.0 1966.0,1731.1 1968.5,1731.1 1971.0,1731.0 1973.5,1731.1 1976.0,1731.0 1978.5,1731.2 1981.0,1731.2 1983.5,1731.0 1986.0,1731.1 1988.5,1731.0 1991.0,1731.1 1993.5,1731.2 1996.0,1731.2 1998.5,1731.2 2001.0,1731.1 2003.5,1731.1 2006.0,1731.2 2008.5,1731.2 2011.0,1731.3 2013.5,1731.4 2016.0,1731.4 2018.5,1731.2 2021.0,1731.4 2023.5,1731.3 2026.0,1731.2 2028.5,1731.4 2031.0,1731.4 2033.5,1731.3 2036.0,1731.4 2038.5,1731.4 2041.0,1731.4 2043.5,1731.4 2046.0,1731.4 2048.5,1731.5 2051.0,1731.4 2053.5,1731.5 2056.0,1731.4 2058.5,1731.5 2061.0,1731.5 2063.5,1731.5 2066.0,1731.5 2068.5,1731.4 2071.0,1731.6 2073.5,1731.5 2076.0,1731.6 2078.5,1731.5 2081.0,1731.6 2083.5,1731.5 2086.0,1731.6 2088.5,1731.6 2091.0,1731.6 2093.5,1731.6 2096.0,1731.6 2098.5,1731.6 2101.0,1731.6 2103.5,1731.7 2106.0,1731.6 2108.5,1731.6 2111.0,1731.6 2113.5,1731.6 2116.0,1731.7 2118.5,1731.6 2121.0,1731.7 2123.5,1731.6 2126.0,1731.6 2128.5,1731.7 2131.0,1731.7 2133.5,1731.7 2136.0,1731.7 2138.5,1731.7 2141.0,1731.7 2143.5,1731.8 2146.0,1731.8 2148.5,1731.7 2151.0,1731.8 2153.5,1731.7 2156.0,1731.8 2158.5,1731.8 2161.0,1731.8 2163.5,1731.8 2166.0,1731.7 2168.5,1731.8 2171.0,1731.8 2173.5,1731.8 2176.0,1731.8 2178.5,1731.8 2181.0,1731.8 2183.5,1731.8 2186.0,1731.8 2188.5,1731.8 2191.0,1731.8 2193.5,1731.8 2196.0,1731.8 2198.5,1731.8 2201.0,1731.8 2203.5,1731.8 2206.0,1731.9 2208.5,1731.8 2211.0,1731.8 2213.5,1731.9 2216.0,1731.8 2218.5,1731.8 2221.0,1731.8 2223.5,1731.8 2226.0,1731.9 2228.5,1731.9 2231.0,1731.9 2233.5,1731.9 2236.0,1731.9 2238.5,1731.9 2241.0,1731.8 2243.5,1731.9 2246.0,1731.9 2248.5,1731.9 2251.0,1731.9 2253.5,1731.9 2256.0,1731.9 2258.5,1731.9 2261.0,1731.9 2263.5,1731.9 2266.0,1731.9 2268.5,1731.9 2271.0,1731.9 2273.5,1731.9 2276.0,1732.0 2278.5,1731.9 2281.0,1731.9 2283.5,1731.9 2286.0,1731.9 2288.5,1731.9 2291.0,1731.9 2293.5,1732.0 2296.0,1731.9 2298.5,1731.9 2301.0,1732.0 2303.5,1732.0 2306.0,1732.0 2308.5,1731.9 2311.0,1731.9 2313.5,1731.9 2316.0,1732.0 2318.5,1732.0 2321.0,1732.0 2323.5,1732.0 2326.0,1732.0 2328.5,1732.0 2331.0,1732.0 2333.5,1731.9 2336.0,1731.9 2338.5,1731.9 2341.0,1732.0 2343.5,1731.9 2346.0,1732.0 2348.5,1732.0 2351.0,1732.0 2353.5,1732.0 2356.0,1732.0 2358.5,1732.0 2361.0,1732.0 2363.5,1732.0 2366.0,1732.0 2368.5,1732.0 2371.0,1732.0 2373.5,1732.0 2376.0,1732.0 2378.5,1732.0 2381.0,1732.0 2383.5,1732.0 2386.0,1732.0 2388.5,1732.0 2391.0,1732.0 2393.5,1732.0 2396.0,1732.0 2398.5,1732.0 2401.0,1732.0 2403.5,1732.0 2406.0,1732.0 2408.5,1732.0 2411.0,1732.0 2413.5,1732.0 2416.0,1732.0 2418.5,1732.0 2421.0,1732.0 2423.5,1732.0 2426.0,1732.1 2428.5,1732.0 2431.0,1732.0 2433.5,1732.0 2436.0,1732.0 2438.5,1732.0 2441.0,1732.0 2443.5,1732.0 2446.0,1732.1 2448.5,1732.0 2451.0,1732.0 2453.5,1732.0 2456.0,1732.0 2458.5,1732.0 2461.0,1732.1 2463.5,1732.0 2466.0,1732.0 2468.5,1732.0 2471.0,1732.0 2473.5,1732.1 2476.0,1732.1 2478.5,1732.0 2481.0,1732.1 2483.5,1732.0 2486.0,1732.1 2488.5,1732.0 2491.0,1732.1 2493.5,1732.0 2496.0,1732.1 2498.5,1732.0 2501.0,1732.0 2503.5,1732.1 2506.0,1732.0 2508.5,1732.1 2511.0,1732.1 2513.5,1732.1 2516.0,1732.0 2518.5,1732.1 2521.0,1732.1 2523.5,1732.0 2526.0,1732.0 2528.5,1732.1 2531.0,1732.0 2533.5,1732.0 2536.0,1732.1 2538.5,1732.1 2541.0,1732.1 2543.5,1732.1 2546.0,1732.1 2548.5,1732.1 2551.0,1732.1 2553.5,1732.1 2556.0,1732.1 2558.5,1732.0 2561.0,1732.0 2563.5,1732.0 2566.0,1732.1 2568.5,1732.0 2571.0,1732.1 2573.5,1732.1 2576.0,1732.1 2578.5,1732.1 2581.0,1732.0 2583.5,1732.0 2586.0,1732.1 2588.5,1732.0 2591.0,1732.1 2593.5,1732.1 2596.0,1732.1 2598.5,1732.0 2601.0,1732.1 2603.5,1732.1 2606.0,1732.1 2608.5,1732.0 2611.0,1732.1 2613.5,1732.1 2616.0,1732.0 2618.5,1732.1 2621.0,1732.1 2623.5,1732.1 2626.0,1732.0 2628.5,1732.0 2631.0,1732.1 2633.5,1732.0 2636.0,1732.1 2638.5,1732.1 2641.0,1732.1 2643.5,1732.1 2646.0,1732.1 2648.5,1732.1 2651.0,1732.1 2653.5,1732.1 2656.0,1732.1 2658.5,1732.1 2661.0,1732.1 2663.5,1732.1 2666.0,1732.1 2668.5,1732.1 2671.0,1732.1 2673.5,1732.1 2676.0,1732.1 2678.5,1732.1 2681.0,1732.1 2683.5,1732.1 2686.0,1732.1 2688.5,1732.1 2691.0,1732.1 2693.5,1732.1 2696.0,1732.1 2698.5,1732.1 2701.0,1732.1 2703.5,1732.1 2706.0,1732.1 2708.5,1732.1 2711.0,1732.1 2713.5,1732.1 2716.0,1732.1 2718.5,1732.1 2721.0,1732.1 2723.5,1732.1 2726.0,1732.1 2728.5,1732.1 2731.0,1732.1 2733.5,1732.1 2736.0,1732.1 2738.5,1732.1 2741.0,1732.1 2743.5,1732.1 2746.0,1732.1 2748.5,1732.1 2751.0,1732.1 2753.5,1732.1 2756.0,1732.1 2758.5,1732.1 2761.0,1732.1 2763.5,1732.1 2766.0,1732.1 2768.5,1732.1 2771.0,1732.1 2773.5,1732.1 2776.0,1732.1 2778.5,1732.1 2781.0,1732.1 2783.5,1732.1 2786.0,1732.1 2788.5,1732.1 2791.0,1732.1 2793.5,1732.1 2796.0,1732.1 2798.5,1732.1 2801.0,1732.1 2803.5,1732.1 2806.0,1732.1 2808.5,1732.1 2811.0,1732.1 2813.5,1732.1 2816.0,1732.1 2818.5,1732.1 2821.0,1732.1 2823.5,1732.1 2826.0,1732.1 2828.5,1732.1 2831.0,1732.1 2833.5,1732.1 2836.0,1732.1 2838.5,1732.1 2841.0,1732.1 2843.5,1732.1 2846.0,1732.1 2848.5,1732.1 2851.0,1732.1 2853.5,1732.1 2856.0,1732.1 2858.5,1732.1 2861.0,1732.1 2863.5,1732.1 2866.0,1732.1 2868.5,1732.1 2871.0,1732.1 2873.5,1732.1 2876.0,1732.1 2878.5,1732.1 2881.0,1732.1 2883.5,1732.1 2886.0,1732.1 2888.5,1732.1 2891.0,1732.1 2893.5,1732.1 2896.0,1732.1 2898.5,1732.1 2901.0,1732.1 2903.5,1732.1 2906.0,1732.1 2908.5,1732.1 2911.0,1732.1 2913.5,1732.1 2916.0,1732.1 2918.5,1732.1 2921.0,1732.1 2923.5,1732.1 2926.0,1732.1 2928.5,1732.1 2931.0,1732.1 2933.5,1732.1 2936.0,1732.1 2938.5,1732.1 2941.0,1732.1 2943.5,1732.1 2946.0,1732.1 2948.5,1732.1 2951.0,1732.1 2953.5,1732.1 2956.0,1732.1 2958.5,1732.1 2961.0,1732.1 2963.5,1732.1 2963.5,1734.5 2961.0,1734.5 2958.5,1734.5 2956.0,1734.5 2953.5,1734.5 2951.0,1734.5 2948.5,1734.5 2946.0,1734.5 2943.5,1734.5 2941.0,1734.5 2938.5,1734.5 2936.0,1734.5 2933.5,1734.5 2931.0,1734.5 2928.5,1734.5 2926.0,1734.5 2923.5,1734.5 2921.0,1734.5 2918.5,1734.5 2916.0,1734.5 2913.5,1734.5 2911.0,1734.5 2908.5,1734.5 2906.0,1734.5 2903.5,1734.5 2901.0,1734.5 2898.5,1734.5 2896.0,1734.5 2893.5,1734.5 2891.0,1734.5 2888.5,1734.5 2886.0,1734.5 2883.5,1734.5 2881.0,1734.5 2878.5,1734.5 2876.0,1734.5 2873.5,1734.5 2871.0,1734.5 2868.5,1734.5 2866.0,1734.5 2863.5,1734.5 2861.0,1734.5 2858.5,1734.5 2856.0,1734.5 2853.5,1734.5 2851.0,1734.5 2848.5,1734.5 2846.0,1734.5 2843.5,1734.5 2841.0,1734.5 2838.5,1734.5 2836.0,1734.5 2833.5,1734.5 2831.0,1734.5 2828.5,1734.5 2826.0,1734.5 2823.5,1734.5 2821.0,1734.5 2818.5,1734.5 2816.0,1734.5 2813.5,1734.5 2811.0,1734.5 2808.5,1734.5 2806.0,1734.5 2803.5,1734.5 2801.0,1734.5 2798.5,1734.5 2796.0,1734.5 2793.5,1734.5 2791.0,1734.5 2788.5,1734.5 2786.0,1734.5 2783.5,1734.5 2781.0,1734.5 2778.5,1734.5 2776.0,1734.5 2773.5,1734.5 2771.0,1734.5 2768.5,1734.5 2766.0,1734.5 2763.5,1734.5 2761.0,1734.5 2758.5,1734.5 2756.0,1734.5 2753.5,1734.5 2751.0,1734.5 2748.5,1734.5 2746.0,1734.5 2743.5,1734.5 2741.0,1734.5 2738.5,1734.5 2736.0,1734.5 2733.5,1734.5 2731.0,1734.5 2728.5,1734.5 2726.0,1734.5 2723.5,1734.5 2721.0,1734.5 2718.5,1734.5 2716.0,1734.5 2713.5,1734.5 2711.0,1734.5 2708.5,1734.5 2706.0,1734.5 2703.5,1734.5 2701.0,1734.5 2698.5,1734.5 2696.0,1734.5 2693.5,1734.5 2691.0,1734.5 2688.5,1734.5 2686.0,1734.5 2683.5,1734.5 2681.0,1734.5 2678.5,1734.5 2676.0,1734.5 2673.5,1734.5 2671.0,1734.5 2668.5,1734.5 2666.0,1734.5 2663.5,1734.5 2661.0,1734.5 2658.5,1734.5 2656.0,1734.5 2653.5,1734.5 2651.0,1734.5 2648.5,1734.5 2646.0,1734.5 2643.5,1734.5 2641.0,1734.5 2638.5,1734.5 2636.0,1734.5 2633.5,1734.6 2631.0,1734.5 2628.5,1734.5 2626.0,1734.5 2623.5,1734.5 2621.0,1734.5 2618.5,1734.5 2616.0,1734.5 2613.5,1734.5 2611.0,1734.6 2608.5,1734.5 2606.0,1734.5 2603.5,1734.5 2601.0,1734.5 2598.5,1734.5 2596.0,1734.5 2593.5,1734.6 2591.0,1734.5 2588.5,1734.5 2586.0,1734.6 2583.5,1734.5 2581.0,1734.5 2578.5,1734.5 2576.0,1734.5 2573.5,1734.5 2571.0,1734.5 2568.5,1734.5 2566.0,1734.6 2563.5,1734.5 2561.0,1734.6 2558.5,1734.6 2556.0,1734.5 2553.5,1734.5 2551.0,1734.6 2548.5,1734.5 2546.0,1734.6 2543.5,1734.5 2541.0,1734.5 2538.5,1734.6 2536.0,1734.6 2533.5,1734.5 2531.0,1734.5 2528.5,1734.5 2526.0,1734.6 2523.5,1734.5 2521.0,1734.5 2518.5,1734.5 2516.0,1734.6 2513.5,1734.5 2511.0,1734.6 2508.5,1734.5 2506.0,1734.6 2503.5,1734.5 2501.0,1734.5 2498.5,1734.6 2496.0,1734.5 2493.5,1734.5 2491.0,1734.5 2488.5,1734.6 2486.0,1734.5 2483.5,1734.6 2481.0,1734.5 2478.5,1734.5 2476.0,1734.6 2473.5,1734.6 2471.0,1734.6 2468.5,1734.6 2466.0,1734.6 2463.5,1734.6 2461.0,1734.5 2458.5,1734.5 2456.0,1734.6 2453.5,1734.6 2451.0,1734.5 2448.5,1734.6 2446.0,1734.6 2443.5,1734.5 2441.0,1734.6 2438.5,1734.6 2436.0,1734.6 2433.5,1734.6 2431.0,1734.6 2428.5,1734.6 2426.0,1734.6 2423.5,1734.6 2421.0,1734.6 2418.5,1734.6 2416.0,1734.6 2413.5,1734.6 2411.0,1734.6 2408.5,1734.6 2406.0,1734.6 2403.5,1734.6 2401.0,1734.6 2398.5,1734.6 2396.0,1734.6 2393.5,1734.6 2391.0,1734.6 2388.5,1734.6 2386.0,1734.6 2383.5,1734.6 2381.0,1734.6 2378.5,1734.6 2376.0,1734.6 2373.5,1734.6 2371.0,1734.6 2368.5,1734.6 2366.0,1734.6 2363.5,1734.6 2361.0,1734.6 2358.5,1734.6 2356.0,1734.6 2353.5,1734.7 2351.0,1734.6 2348.5,1734.6 2346.0,1734.6 2343.5,1734.6 2341.0,1734.6 2338.5,1734.6 2336.0,1734.6 2333.5,1734.6 2331.0,1734.7 2328.5,1734.7 2326.0,1734.6 2323.5,1734.6 2321.0,1734.6 2318.5,1734.6 2316.0,1734.7 2313.5,1734.7 2311.0,1734.7 2308.5,1734.6 2306.0,1734.7 2303.5,1734.7 2301.0,1734.7 2298.5,1734.6 2296.0,1734.7 2293.5,1734.7 2291.0,1734.7 2288.5,1734.6 2286.0,1734.6 2283.5,1734.7 2281.0,1734.7 2278.5,1734.7 2276.0,1734.7 2273.5,1734.6 2271.0,1734.7 2268.5,1734.7 2266.0,1734.7 2263.5,1734.7 2261.0,1734.7 2258.5,1734.7 2256.0,1734.8 2253.5,1734.7 2251.0,1734.7 2248.5,1734.7 2246.0,1734.7 2243.5,1734.7 2241.0,1734.7 2238.5,1734.7 2236.0,1734.8 2233.5,1734.7 2231.0,1734.8 2228.5,1734.7 2226.0,1734.7 2223.5,1734.8 2221.0,1734.8 2218.5,1734.8 2216.0,1734.8 2213.5,1734.8 2211.0,1734.8 2208.5,1734.8 2206.0,1734.8 2203.5,1734.8 2201.0,1734.7 2198.5,1734.8 2196.0,1734.8 2193.5,1734.8 2191.0,1734.8 2188.5,1734.8 2186.0,1734.8 2183.5,1734.8 2181.0,1734.8 2178.5,1734.8 2176.0,1734.8 2173.5,1734.8 2171.0,1734.8 2168.5,1734.9 2166.0,1734.9 2163.5,1734.9 2161.0,1734.9 2158.5,1734.9 2156.0,1734.8 2153.5,1734.9 2151.0,1734.9 2148.5,1734.8 2146.0,1734.9 2143.5,1734.9 2141.0,1734.9 2138.5,1734.9 2136.0,1735.0 2133.5,1735.0 2131.0,1734.9 2128.5,1735.0 2126.0,1734.9 2123.5,1734.9 2121.0,1734.9 2118.5,1735.0 2116.0,1734.9 2113.5,1734.9 2111.0,1734.9 2108.5,1735.0 2106.0,1735.0 2103.5,1735.0 2101.0,1735.0 2098.5,1735.0 2096.0,1735.0 2093.5,1735.1 2091.0,1735.0 2088.5,1735.1 2086.0,1735.1 2083.5,1735.1 2081.0,1735.1 2078.5,1735.1 2076.0,1735.0 2073.5,1735.1 2071.0,1735.2 2068.5,1735.1 2066.0,1735.2 2063.5,1735.1 2061.0,1735.2 2058.5,1735.1 2056.0,1735.2 2053.5,1735.3 2051.0,1735.2 2048.5,1735.2 2046.0,1735.2 2043.5,1735.1 2041.0,1735.2 2038.5,1735.2 2036.0,1735.2 2033.5,1735.3 2031.0,1735.3 2028.5,1735.4 2026.0,1735.4 2023.5,1735.2 2021.0,1735.4 2018.5,1735.4 2016.0,1735.4 2013.5,1735.3 2011.0,1735.3 2008.5,1735.3 2006.0,1735.5 2003.5,1735.3 2001.0,1735.5 1998.5,1735.5 1996.0,1735.4 1993.5,1735.5 1991.0,1735.5 1988.5,1735.5 1986.0,1735.6 1983.5,1735.5 1981.0,1735.5 1978.5,1735.5 1976.0,1735.6 1973.5,1735.6 1971.0,1735.6 1968.5,1735.6 1966.0,1735.7 1963.5,1735.5 1961.0,1735.5 1958.5,1735.7 1956.0,1735.8 1953.5,1735.8 1951.0,1735.7 1948.5,1735.9 1946.0,1735.7 1943.5,1735.8 1941.0,1735.7 1938.5,1735.7 1936.0,1735.9 1933.5,1736.0 1931.0,1735.9 1928.5,1735.7 1926.0,1735.9 1923.5,1736.0 1921.0,1736.1 1918.5,1736.1 1916.0,1735.8 1913.5,1735.9 1911.0,1736.2 1908.5,1736.0 1906.0,1736.2 1903.5,1736.2 1901.0,1736.1 1898.5,1736.3 1896.0,1736.2 1893.5,1736.3 1891.0,1736.2 1888.5,1736.4 1886.0,1736.1 1883.5,1736.1 1881.0,1736.2 1878.5,1736.6 1876.0,1736.3 1873.5,1736.5 1871.0,1736.3 1868.5,1736.2 1866.0,1736.5 1863.5,1736.6 1861.0,1736.7 1858.5,1736.9 1856.0,1736.4 1853.5,1736.8 1851.0,1736.8 1848.5,1736.6 1846.0,1736.8 1843.5,1737.1 1841.0,1736.4 1838.5,1736.6 1836.0,1737.2 1833.5,1736.6 1831.0,1736.7 1828.5,1736.7 1826.0,1737.0 1823.5,1737.4 1821.0,1736.8 1818.5,1737.0 1816.0,1736.9 1813.5,1737.5 1811.0,1737.1 1808.5,1737.0 1806.0,1736.9 1803.5,1737.0 1801.0,1737.0 1798.5,1737.5 1796.0,1737.4 1793.5,1737.7 1791.0,1737.8 1788.5,1737.2 1786.0,1737.7 1783.5,1737.8 1781.0,1737.8 1778.5,1737.7 1776.0,1737.6 1773.5,1737.8 1771.0,1737.7 1768.5,1737.6 1766.0,1738.4 1763.5,1738.0 1761.0,1738.5 1758.5,1738.5 1756.0,1738.2 1753.5,1738.6 1751.0,1738.1 1748.5,1738.7 1746.0,1738.0 1743.5,1738.4 1741.0,1738.7 1738.5,1738.4 1736.0,1739.2 1733.5,1739.0 1731.0,1739.0 1728.5,1739.4 1726.0,1738.9 1723.5,1739.1 1721.0,1738.8 1718.5,1739.2 1716.0,1739.4 1713.5,1739.2 1711.0,1739.6 1708.5,1738.9 1706.0,1739.2 1703.5,1740.0 1701.0,1739.7 1698.5,1739.9 1696.0,1739.5 1693.5,1739.9 1691.0,1739.8 1688.5,1739.6 1686.0,1739.4 1683.5,1740.0 1681.0,1740.3 1678.5,1740.8 1676.0,1739.8 1673.5,1740.2 1671.0,1739.9 1668.5,1740.5 1666.0,1741.4 1663.5,1740.4 1661.0,1741.4 1658.5,1740.3 1656.0,1740.4 1653.5,1739.9 1651.0,1739.1 1648.5,1738.1 1646.0,1737.6" fill="#8fe84f"/><path d="M1715.2 1813V1822" stroke="#b9927b" stroke-width="1.5"/><path d="M1784.4 1813V1822" stroke="#b9927b" stroke-width="1.5"/><path d="M1853.6 1813V1822" stroke="#b9927b" stroke-width="1.5"/><path d="M1922.8 1813V1822" stroke="#b9927b" stroke-width="1.5"/><path d="M1997.0 1803.5h-5V1822" stroke="#b9927b" stroke-width="1.5" fill="none"/><path d="M2061.2 1813V1822" stroke="#b9927b" stroke-width="1.5"/><path d="M2130.4 1813V1822" stroke="#b9927b" stroke-width="1.5"/><path d="M2199.6 1813V1822" stroke="#b9927b" stroke-width="1.5"/><path d="M2268.8 1813V1822" stroke="#b9927b" stroke-width="1.5"/><path d="M2343.0 1803.5h-5V1822" stroke="#b9927b" stroke-width="1.5" fill="none"/><path d="M2407.2 1813V1822" stroke="#b9927b" stroke-width="1.5"/><path d="M2476.4 1813V1822" stroke="#b9927b" stroke-width="1.5"/><path d="M2545.6 1813V1822" stroke="#b9927b" stroke-width="1.5"/><path d="M2614.8 1813V1822" stroke="#b9927b" stroke-width="1.5"/><path d="M2689.0 1803.5h-5V1822" stroke="#b9927b" stroke-width="1.5" fill="none"/><path d="M2753.2 1813V1822" stroke="#b9927b" stroke-width="1.5"/><path d="M2822.4 1813V1822" stroke="#b9927b" stroke-width="1.5"/><path d="M2891.6 1813V1822" stroke="#b9927b" stroke-width="1.5"/><path d="M2960.8 1813V1822" stroke="#b9927b" stroke-width="1.5"/><path d="M1644 1663V1822" stroke="#f4f4f4" stroke-width="2.5"/><path d="M1644 1643.5v19.5l18-9.7z" fill="#d7302a"/><path d="M2966 1663V1822" stroke="#f4f4f4" stroke-width="2.5"/><path d="M2966.5 1642.5v20.5l-18.5-10.2z" fill="#d7302a"/></svg>
<div class="t" style="left:1649px;top:1790px;width:110px;height:26px;line-height:26px;color:#b9927b;font-size:19.5px;letter-spacing:.8px;-webkit-text-stroke:.2px;">0:00</div>
<div class="t" style="left:1998px;top:1790px;width:110px;height:26px;line-height:26px;color:#b9927b;font-size:19.5px;letter-spacing:.8px;-webkit-text-stroke:.2px;">0:00:500</div>
<div class="t" style="left:2343.5px;top:1790px;width:110px;height:26px;line-height:26px;color:#b9927b;font-size:19.5px;letter-spacing:.8px;-webkit-text-stroke:.2px;">0:01</div>
<div class="t" style="left:2691px;top:1790px;width:110px;height:26px;line-height:26px;color:#b9927b;font-size:19.5px;letter-spacing:.8px;-webkit-text-stroke:.2px;">0:01:500</div>
<div class="t b" style="left:1646px;top:1828px;width:70px;height:28px;line-height:28px;color:#dc3a2c;font-size:20.3px;letter-spacing:.2px;-webkit-text-stroke:0;font-weight:normal;text-shadow:.4px 0 #dc3a2c;">Gain</div>
<div class="t" style="left:1649px;top:1857px;width:90px;height:28px;line-height:28px;color:#f0712c;font-size:20.3px;letter-spacing:.25px;text-shadow:.4px 0 #f0712c;">0.0 dB</div>
<div class="t c" style="left:1735px;top:1832px;width:86px;height:26px;line-height:26px;background:#f0712c;color:#2b1a10;font-size:15.5px;letter-spacing:.4px;">TRIGGER</div>
<div class="t c" style="left:1735px;top:1858px;width:86px;height:26px;line-height:26px;border:2px solid #f0712c;color:#f0712c;font-size:15.5px;letter-spacing:1.25px;line-height:22px;">GATE</div>
<div class="t c" style="left:1843px;top:1846px;width:77px;height:22px;line-height:22px;border:2px solid #f0712c;color:#f0712c;font-size:15.5px;letter-spacing:1.05px;line-height:18px;">SNAP</div>
<div class="t c" style="left:2703px;top:1832px;width:108px;height:22px;line-height:22px;border:2px solid #8ee64c;color:#8ee64c;font-size:15.5px;letter-spacing:.2px;line-height:18px;">WARP</div>
<div class="t" style="left:2826px;top:1830px;width:30px;height:27px;line-height:27px;color:#dc3a2c;font-size:20.3px;letter-spacing:.6px;">as</div>
<div class="t c" style="left:2853px;top:1830px;width:106px;height:26px;line-height:26px;border:2px solid #7ea9ea;border-radius:13px;color:#8ee64c;font-size:20.3px;letter-spacing:0;line-height:22px;">1 Bar</div>
<div class="t c" style="left:2853px;top:1860px;width:50px;height:26px;line-height:26px;border:2px solid #7ea9ea;border-radius:13px;color:#dc3a2c;font-size:20.3px;line-height:22px;">:2</div>
<div class="t c" style="left:2907px;top:1860px;width:50px;height:26px;line-height:26px;border:2px solid #7ea9ea;border-radius:13px;color:#dc3a2c;font-size:20.3px;line-height:22px;">*2</div>
<div class="t" style="left:2708px;top:1860px;width:80px;height:28px;line-height:28px;color:#dc3a2c;font-size:20.6px;letter-spacing:0;">Beats</div>
<svg style="left:2793px;top:1868px" width="14" height="10" viewBox="2793 1868 14 10"><path d="M2795 1870.5h10.5l-5.2 6z" fill="#dc3a2c"/></svg>
<div style="left:1553px;top:1900.5px;width:26px;height:26px;background:#242624;border:1.5px solid #5d5d5d;"></div>
<div class="t b" style="left:1592px;top:1899px;width:60px;height:28px;line-height:28px;font-size:20.3px;letter-spacing:.6px;">Filter</div>
<div class="dd" style="left:1649px;top:1900.5px;width:80px;height:26px;"></div>
<svg style="left:1709px;top:1906.5px" width="16" height="14" viewBox="1709 1906.5 16 14"><path d="M1711 1909.5h13l-6.5 8.5z" fill="#f0f0f0"/></svg>
<div class="dd" style="left:1649px;top:1936.5px;width:80px;height:26px;"></div>
<svg style="left:1709px;top:1942.5px" width="16" height="14" viewBox="1709 1942.5 16 14"><path d="M1711 1945.5h13l-6.5 8.5z" fill="#f0f0f0"/></svg>
<div class="t" style="left:1745.5px;top:1893px;width:110px;height:28px;line-height:28px;font-size:20.3px;letter-spacing:.75px;">Frequency</div>
<div class="t" style="left:1859px;top:1893px;width:50px;height:28px;line-height:28px;font-size:20.3px;letter-spacing:-.3px;">Res</div>
<svg style="left:1742px;top:1921px" width="44" height="44" viewBox="1742 1921 44 44"><path d="M1764.0 1960.0A17 17 0 1 1 1781.0 1943.0" fill="none" stroke="#6e6e6e" stroke-width="4"/><path d="M1764.0 1943.0L1764.0 1961.5" stroke="#6e6e6e" stroke-width="4" stroke-linecap="butt"/></svg>
<svg style="left:1856px;top:1921px" width="44" height="44" viewBox="1856 1921 44 44"><path d="M1878.0 1960.0A17 17 0 1 1 1895.0 1943.0" fill="none" stroke="#6e6e6e" stroke-width="4"/><path d="M1878.0 1943.0L1878.0 1961.5" stroke="#6e6e6e" stroke-width="4" stroke-linecap="butt"/></svg>
<div style="left:2075px;top:1894.5px;width:2px;height:74px;background:#0e0e0e;"></div>
<div style="left:2111px;top:1902px;width:26px;height:26px;background:#242624;border:1.5px solid #5d5d5d;"></div>
<div class="t b" style="left:2146px;top:1901px;width:60px;height:28px;line-height:28px;font-size:20.3px;letter-spacing:-1.3px;">LFO</div>
<div class="t c" style="left:2225px;top:1902px;width:48px;height:26px;line-height:26px;background:#586a5d;color:#6f8174;font-size:20.3px;">Hz</div>
<div class="dk" style="left:2281px;top:1902px;width:48px;height:26px;"></div>
<svg style="left:2295px;top:1905px" width="20" height="20" viewBox="2295 1905 20 20"><path d="M2306.5 1909v11" stroke="#7a7a7a" stroke-width="1.6"/><ellipse cx="2304" cy="1920.5" rx="3.2" ry="2.4" fill="#7a7a7a"/><path d="M2306.5 1909c3 1.5 4.5 3.5 3.5 7" stroke="#7a7a7a" stroke-width="1.4" fill="none"/></svg>
<div class="dd" style="left:2111px;top:1936.5px;width:86px;height:26px;"></div>
<svg style="left:2177px;top:1942.5px" width="16" height="14" viewBox="2177 1942.5 16 14"><path d="M2179 1945.5h13l-6.5 8.5z" fill="#f0f0f0"/></svg>
<div class="dd" style="left:2225px;top:1936.5px;width:104px;height:26px;"></div>
<div style="left:2367px;top:1894.5px;width:2px;height:74px;background:#0e0e0e;"></div>
<div class="t" style="left:2386px;top:1893px;width:100px;height:28px;line-height:28px;font-size:20.3px;letter-spacing:.15px;">Fade In</div>
<svg style="left:2380px;top:1919px" width="48" height="48" viewBox="2380 1919 48 48"><path d="M2404.0 1960.0A17 17 0 1 1 2420.9 1944.5" fill="none" stroke="#272727" stroke-width="4"/><path d="M2404.0 1943.0L2400.8 1961.2" stroke="#272727" stroke-width="4" stroke-linecap="round"/></svg>
<div style="left:2401.5px;top:1958.5px;width:2px;height:3px;background:#a9cdac;"></div>
<div class="t" style="left:2411px;top:1946px;width:90px;height:27px;line-height:27px;font-size:20.3px;letter-spacing:.28px;">0.10 ms</div>
<div class="t" style="left:2505.5px;top:1893px;width:110px;height:28px;line-height:28px;font-size:20.3px;letter-spacing:.28px;">Fade Out</div>
<svg style="left:2500px;top:1919px" width="48" height="48" viewBox="2500 1919 48 48"><path d="M2524.0 1960.0A17 17 0 1 1 2540.9 1944.5" fill="none" stroke="#272727" stroke-width="4"/><path d="M2524.0 1943.0L2520.8 1961.2" stroke="#272727" stroke-width="4" stroke-linecap="round"/></svg>
<div style="left:2521.5px;top:1958.5px;width:2px;height:3px;background:#a9cdac;"></div>
<div class="t" style="left:2531px;top:1946px;width:90px;height:27px;line-height:27px;font-size:20.3px;letter-spacing:.28px;">0.10 ms</div>
<div class="t" style="left:2625.5px;top:1893px;width:80px;height:28px;line-height:28px;font-size:20.3px;letter-spacing:.75px;">Transp</div>
<svg style="left:2625.8px;top:1919px" width="48" height="48" viewBox="2625.8 1919 48 48"><path d="M2649.8 1960.0A17 17 0 1 1 2666.7 1944.5" fill="none" stroke="#272727" stroke-width="4"/><path d="M2649.8 1943.0L2636.7 1929.9" stroke="#272727" stroke-width="4" stroke-linecap="round"/></svg>
<svg style="left:2622px;top:1914px" width="16" height="14" viewBox="2622 1914 16 14"><path d="M2625 1926h10v-9z" fill="#272727"/></svg>
<div class="t" style="left:2659px;top:1947px;width:60px;height:27px;line-height:27px;font-size:20.3px;letter-spacing:.55px;">0 st</div>
<div class="t" style="left:2745.5px;top:1893px;width:110px;height:28px;line-height:28px;font-size:20.3px;letter-spacing:.08px;">Vol &lt; Vel</div>
<svg style="left:2740.2px;top:1919px" width="48" height="48" viewBox="2740.2 1919 48 48"><path d="M2764.2 1960.0A17 17 0 1 1 2781.1 1944.5" fill="none" stroke="#272727" stroke-width="4"/><path d="M2764.2 1960.0A17 17 0 1 1 2770.6 1927.2" fill="none" stroke="#a9cdac" stroke-width="4"/><path d="M2764.2 1943.0L2771.1 1925.8" stroke="#272727" stroke-width="4" stroke-linecap="round"/></svg>
<div class="t" style="left:2772px;top:1946px;width:70px;height:27px;line-height:27px;font-size:20.3px;letter-spacing:-.1px;">75 %</div>
<div class="t" style="left:2866px;top:1893px;width:90px;height:28px;line-height:28px;font-size:20.3px;letter-spacing:.62px;">Volume</div>
<svg style="left:2860px;top:1919px" width="48" height="48" viewBox="2860 1919 48 48"><path d="M2884.0 1960.0A17 17 0 1 1 2900.9 1944.5" fill="none" stroke="#272727" stroke-width="4"/><path d="M2884.0 1960.0A17 17 0 0 1 2867.0 1943.0" fill="none" stroke="#a9cdac" stroke-width="4"/><path d="M2884.0 1943.0L2865.5 1943.0" stroke="#272727" stroke-width="4" stroke-linecap="round"/></svg>
<div class="t" style="left:2891.5px;top:1946px;width:90px;height:27px;line-height:27px;font-size:20.3px;letter-spacing:.35px;">-12.0 dB</div>
<div style="left:2983px;top:1630px;width:280px;height:338px;background:#333;"></div>
<div style="left:3263px;top:1595px;width:2px;height:377px;background:#1b1c1b;"></div>
<div style="left:3265px;top:1630px;width:28px;height:338px;background:#323232;"></div>
<div style="left:2988.5px;top:1600px;width:26px;height:26px;background:#f5b94f;border:2px solid #6d6d6d;border-radius:50%;"></div>
<div class="t b" style="left:3024px;top:1596px;width:100px;height:34px;line-height:34px;font-size:20.3px;letter-spacing:.8px;">Utility</div>
<div style="left:3197px;top:1600px;width:26px;height:26px;background:#232523;border:2px solid #626262;border-radius:50%;"></div>
<svg style="left:3198px;top:1601px" width="24" height="24" viewBox="3198 1601 24 24"><path d="M3210.9 1606.9A6.2 6.2 0 0 0 3203.8 1612.5" fill="none" stroke="#f0f0f0" stroke-width="2"/><path d="M3209.1 1619.1A6.2 6.2 0 0 0 3216.2 1613.5" fill="none" stroke="#f0f0f0" stroke-width="2"/><path d="M3200.6 1611.8h6.8l-3.4 4.4z" fill="#f0f0f0"/><path d="M3212.6 1614.2h6.8l-3.4-4.4z" fill="#f0f0f0"/></svg>
<div style="left:3229px;top:1600px;width:26px;height:26px;background:#232523;border:2px solid #626262;border-radius:50%;"></div>
<svg style="left:3230px;top:1601px" width="24" height="24" viewBox="3230 1601 24 24"><path d="M3235.5 1606.5h10l3 3v10h-13z" fill="#f0f0f0"/><rect x="3238.5" y="1606.5" width="6" height="5" fill="#1e201e"/></svg>
<div class="t c b" style="left:2995px;top:1635px;width:114px;height:28px;line-height:28px;font-size:20.3px;letter-spacing:.7px;">Input</div>
<div class="t dk" style="left:2995px;top:1668.5px;width:54px;height:25px;line-height:25px;line-height:21px;">Ø L</div>
<div class="t dk" style="left:3055px;top:1668.5px;width:54px;height:25px;line-height:25px;line-height:21px;">Ø R</div>
<div class="dd" style="left:2995px;top:1700.5px;width:114px;height:25px;"></div>
<svg style="left:3089px;top:1706.5px" width="16" height="14" viewBox="3089 1706.5 16 14"><path d="M3091 1709.5h13l-6.5 8.5z" fill="#f0f0f0"/></svg>
<div class="t" style="left:2999px;top:1700.5px;width:80px;height:25px;line-height:25px;font-size:20.3px;letter-spacing:.7px;">Stereo</div>
<div class="t c" style="left:2995px;top:1737px;width:114px;height:28px;line-height:28px;font-size:20.3px;letter-spacing:.8px;">Width</div>
<svg style="left:3020px;top:1760.7px" width="64" height="72" viewBox="3020 1760.7 64 72"><path d="M3041.2 1821.9A23.8 23.8 0 0 1 3048.3 1777.2" fill="none" stroke="#272727" stroke-width="4"/><path d="M3055.7 1777.2A23.8 23.8 0 0 1 3062.8 1821.9" fill="none" stroke="#272727" stroke-width="4"/><path d="M3052.0 1801.7L3052.0 1774.7" stroke="#272727" stroke-width="4" stroke-linecap="round"/><path d="M3044 1763.2h16l-8 9z" fill="#272727"/></svg>
<div class="t c" style="left:2995px;top:1820.5px;width:114px;height:28px;line-height:28px;font-size:20.3px;letter-spacing:-.4px;">100 %</div>
<div class="t dk" style="left:2995px;top:1858px;width:114px;height:25px;line-height:25px;line-height:21px;letter-spacing:.4px;font-size:20.5px;">Mono</div>
<div class="t dk" style="left:2995px;top:1901.5px;width:114px;height:25px;line-height:25px;line-height:21px;letter-spacing:-.1px;font-size:20.5px;">Bass Mono</div>
<div class="vbox" style="left:2995px;top:1933.5px;width:82px;height:25px;background:linear-gradient(90deg,#f5a945 0,#f5a945 30px,#333 30px);"></div>
<div class="t c" style="left:2995px;top:1933.5px;width:82px;height:25px;line-height:25px;font-size:20.3px;letter-spacing:-.1px;">120 Hz</div>
<div style="left:3083px;top:1933px;width:26px;height:26px;background:#232523;border:2px solid #626262;border-radius:50%;"></div>
<svg style="left:3084px;top:1933.5px" width="24" height="24" viewBox="3084 1933.5 24 24"><path d="M3089.7 1947.0A6.3 6.3 0 1 1 3102.3 1947.0" fill="none" stroke="#c4c4c4" stroke-width="3.4"/><rect x="3087.6" y="1945.5" width="4.6" height="8" rx="1.8" fill="#c4c4c4"/><rect x="3099.8" y="1945.5" width="4.6" height="8" rx="1.8" fill="#c4c4c4"/></svg>
<div style="left:3121.5px;top:1638px;width:2px;height:322px;background:#0e0e0e;"></div>
<svg style="left:3117px;top:1790px" width="14" height="18" viewBox="3117 1790 14 18"><path d="M3119.5 1792v14l8-7z" fill="#0e0e0e"/></svg>
<div class="t c b" style="left:3133px;top:1635px;width:120px;height:28px;line-height:28px;font-size:20.3px;letter-spacing:.7px;">Output</div>
<div class="t c" style="left:3133px;top:1675.5px;width:120px;height:28px;line-height:28px;font-size:20.3px;letter-spacing:.2px;">Gain</div>
<svg style="left:3160.5px;top:1698.5px" width="64" height="72" viewBox="3160.5 1698.5 64 72"><path d="M3181.7 1759.7A23.8 23.8 0 0 1 3188.8 1715.0" fill="none" stroke="#272727" stroke-width="4"/><path d="M3196.2 1715.0A23.8 23.8 0 0 1 3203.3 1759.7" fill="none" stroke="#272727" stroke-width="4"/><path d="M3192.5 1739.5L3192.5 1712.5" stroke="#272727" stroke-width="4" stroke-linecap="round"/><path d="M3184.5 1701.0h16l-8 9z" fill="#272727"/></svg>
<div class="t c" style="left:3133px;top:1759px;width:120px;height:28px;line-height:28px;font-size:20.3px;letter-spacing:.1px;">0.00 dB</div>
<div class="t c" style="left:3133px;top:1804px;width:120px;height:28px;line-height:28px;font-size:20.3px;letter-spacing:.3px;">Balance</div>
<svg style="left:3160.5px;top:1826.5px" width="64" height="72" viewBox="3160.5 1826.5 64 72"><path d="M3181.7 1887.7A23.8 23.8 0 0 1 3188.8 1843.0" fill="none" stroke="#272727" stroke-width="4"/><path d="M3196.2 1843.0A23.8 23.8 0 0 1 3203.3 1887.7" fill="none" stroke="#272727" stroke-width="4"/><path d="M3192.5 1867.5L3192.5 1840.5" stroke="#272727" stroke-width="4" stroke-linecap="round"/><path d="M3184.5 1829.0h16l-8 9z" fill="#272727"/></svg>
<div class="t c" style="left:3133px;top:1887px;width:120px;height:28px;line-height:28px;font-size:20.3px;">C</div>
<div class="t dk" style="left:3139.5px;top:1933.5px;width:61px;height:25px;line-height:25px;line-height:21px;letter-spacing:.6px;font-size:20.5px;">Mute</div>
<div class="t dk" style="left:3205.5px;top:1933.5px;width:39px;height:25px;line-height:25px;line-height:21px;font-size:20.5px;">DC</div>
<div style="left:3303px;top:1752.5px;width:4.5px;height:71px;background:#0c0c0c;"></div>
<div style="left:3308.7px;top:1752.5px;width:4.5px;height:71px;background:#0c0c0c;"></div>
<div style="left:3303px;top:1744px;width:4.5px;height:7px;background:#0c0c0c;"></div>
<div style="left:3308.7px;top:1744px;width:4.5px;height:7px;background:#0c0c0c;"></div>
<div style="left:2347px;top:1996px;width:412px;height:44px;background:#333;border-radius:9px;"></div>
<div style="left:2775px;top:1975px;width:494px;height:64.5px;background:#333;border-radius:0 0 9px 9px;"></div>
<svg style="left:3269px;top:1980px" width="12" height="12" viewBox="3269 1980 12 12"><path d="M3269 1980h12a12 12 0 0 0-12 12z" fill="#333"/></svg>
<svg style="left:2763px;top:1980px" width="12" height="12" viewBox="2763 1980 12 12"><path d="M2775 1980h-12a12 12 0 0 1 12 12z" fill="#333"/></svg>
<div class="t b" style="left:2783.5px;top:2004px;width:200px;height:30px;line-height:30px;font-size:19.3px;letter-spacing:.68px;">Kria combined rack</div>
<div style="left:2981px;top:1998px;width:264px;height:40px;background:#060606;"></div>
<svg style="left:2981px;top:1998px" width="290" height="40" viewBox="2981 1998 290 40"><clipPath id="tc1"><rect x="2984.9" y="2002.3" width="256.3" height="31.5"/></clipPath><clipPath id="tc2"><rect x="3245" y="1998" width="20" height="40"/></clipPath><rect x="2981" y="1998" width="264" height="40" fill="#050505"/><g clip-path="url(#tc1)"><rect x="2984.94" y="2002.15" width="266.34" height="31.24" fill="#303230"/><rect x="2984.94" y="2002.15" width="266.34" height="2.96" fill="#3a413a"/><rect x="2985.28" y="2002.98" width="20.64" height="1.32" fill="#bdbdbd" opacity="0.8"/><rect x="2985.28" y="2005.73" width="8.51" height="4.77" fill="#3a413a"/><rect x="2985.28" y="2010.50" width="8.51" height="8.38" fill="#2b2b2b"/><rect x="2986.49" y="2006.39" width="6.02" height="1.48" fill="#9a9a9a" opacity="0.7"/><circle cx="2989.67" cy="2013.87" r="2" fill="none" stroke="#6e6e6e" stroke-width=".6"/><rect x="2994.23" y="2005.73" width="8.51" height="4.77" fill="#3a413a"/><rect x="2994.23" y="2010.50" width="8.51" height="8.38" fill="#2b2b2b"/><rect x="2995.43" y="2006.39" width="6.02" height="1.48" fill="#9a9a9a" opacity="0.7"/><circle cx="2998.61" cy="2013.87" r="2" fill="none" stroke="#6e6e6e" stroke-width=".6"/><rect x="3003.17" y="2005.73" width="8.51" height="4.77" fill="#3a413a"/><rect x="3003.17" y="2010.50" width="8.51" height="8.38" fill="#2b2b2b"/><rect x="3004.37" y="2006.39" width="6.02" height="1.48" fill="#9a9a9a" opacity="0.7"/><circle cx="3007.56" cy="2013.87" r="2" fill="none" stroke="#6e6e6e" stroke-width=".6"/><rect x="3012.11" y="2005.73" width="8.51" height="4.77" fill="#3a413a"/><rect x="3012.11" y="2010.50" width="8.51" height="8.38" fill="#2b2b2b"/><rect x="3013.32" y="2006.39" width="6.02" height="1.48" fill="#9a9a9a" opacity="0.7"/><circle cx="3016.50" cy="2013.87" r="2" fill="none" stroke="#6e6e6e" stroke-width=".6"/><rect x="2985.28" y="2019.25" width="8.51" height="4.77" fill="#3a413a"/><rect x="2985.28" y="2024.02" width="8.51" height="8.38" fill="#2b2b2b"/><rect x="2986.49" y="2019.91" width="6.02" height="1.48" fill="#9a9a9a" opacity="0.7"/><circle cx="2989.67" cy="2027.39" r="2" fill="none" stroke="#6e6e6e" stroke-width=".6"/><rect x="2994.23" y="2019.25" width="8.51" height="4.77" fill="#3a413a"/><rect x="2994.23" y="2024.02" width="8.51" height="8.38" fill="#2b2b2b"/><rect x="2995.43" y="2019.91" width="6.02" height="1.48" fill="#9a9a9a" opacity="0.7"/><circle cx="2998.61" cy="2027.39" r="2" fill="none" stroke="#6e6e6e" stroke-width=".6"/><rect x="3003.17" y="2019.25" width="8.51" height="4.77" fill="#3a413a"/><rect x="3003.17" y="2024.02" width="8.51" height="8.38" fill="#2b2b2b"/><rect x="3004.37" y="2019.91" width="6.02" height="1.48" fill="#9a9a9a" opacity="0.7"/><circle cx="3007.56" cy="2027.39" r="2" fill="none" stroke="#6e6e6e" stroke-width=".6"/><rect x="3012.11" y="2019.25" width="8.51" height="4.77" fill="#3a413a"/><rect x="3012.11" y="2024.02" width="8.51" height="8.38" fill="#2b2b2b"/><rect x="3013.32" y="2019.91" width="6.02" height="1.48" fill="#9a9a9a" opacity="0.7"/><circle cx="3016.50" cy="2027.39" r="2" fill="none" stroke="#6e6e6e" stroke-width=".6"/><rect x="3021.92" y="2005.94" width="3.27" height="26.14" fill="#8a8a8a"/><rect x="3025.87" y="2005.94" width="8.77" height="3.78" fill="#c5c1c0"/><rect x="3025.87" y="2009.88" width="8.77" height="2.14" fill="#242424"/><rect x="3026.39" y="2010.37" width="1.38" height="1.15" fill="#d0d0d0"/><rect x="3032.58" y="2010.37" width="1.20" height="1.15" fill="#d0d0d0"/><rect x="3035.33" y="2005.94" width="8.77" height="3.78" fill="#c5c1c0"/><rect x="3035.33" y="2009.88" width="8.77" height="2.14" fill="#242424"/><rect x="3035.85" y="2010.37" width="1.38" height="1.15" fill="#d0d0d0"/><rect x="3042.04" y="2010.37" width="1.20" height="1.15" fill="#d0d0d0"/><rect x="3044.79" y="2005.94" width="8.77" height="3.78" fill="#c5c1c0"/><rect x="3044.79" y="2009.88" width="8.77" height="2.14" fill="#242424"/><rect x="3045.31" y="2010.37" width="1.38" height="1.15" fill="#d0d0d0"/><rect x="3051.50" y="2010.37" width="1.20" height="1.15" fill="#d0d0d0"/><rect x="3054.25" y="2005.94" width="8.77" height="3.78" fill="#c5c1c0"/><rect x="3054.25" y="2009.88" width="8.77" height="2.14" fill="#242424"/><rect x="3054.77" y="2010.37" width="1.38" height="1.15" fill="#d0d0d0"/><rect x="3060.96" y="2010.37" width="1.20" height="1.15" fill="#d0d0d0"/><rect x="3025.87" y="2012.68" width="8.77" height="3.78" fill="#c5c1c0"/><rect x="3025.87" y="2016.62" width="8.77" height="2.14" fill="#242424"/><rect x="3026.39" y="2017.11" width="1.38" height="1.15" fill="#d0d0d0"/><rect x="3032.58" y="2017.11" width="1.20" height="1.15" fill="#d0d0d0"/><rect x="3035.33" y="2012.68" width="8.77" height="3.78" fill="#c5c1c0"/><rect x="3035.33" y="2016.62" width="8.77" height="2.14" fill="#242424"/><rect x="3035.85" y="2017.11" width="1.38" height="1.15" fill="#d0d0d0"/><rect x="3042.04" y="2017.11" width="1.20" height="1.15" fill="#d0d0d0"/><rect x="3044.79" y="2012.68" width="8.77" height="3.78" fill="#c5c1c0"/><rect x="3044.79" y="2016.62" width="8.77" height="2.14" fill="#242424"/><rect x="3045.31" y="2017.11" width="1.38" height="1.15" fill="#d0d0d0"/><rect x="3051.50" y="2017.11" width="1.20" height="1.15" fill="#d0d0d0"/><rect x="3054.25" y="2012.68" width="8.77" height="3.78" fill="#c5c1c0"/><rect x="3054.25" y="2016.62" width="8.77" height="2.14" fill="#242424"/><rect x="3054.77" y="2017.11" width="1.38" height="1.15" fill="#d0d0d0"/><rect x="3060.96" y="2017.11" width="1.20" height="1.15" fill="#d0d0d0"/><rect x="3025.87" y="2019.42" width="8.77" height="3.78" fill="#c5c1c0"/><rect x="3025.87" y="2023.36" width="8.77" height="2.14" fill="#242424"/><rect x="3026.39" y="2023.86" width="1.38" height="1.15" fill="#d0d0d0"/><rect x="3032.58" y="2023.86" width="1.20" height="1.15" fill="#d0d0d0"/><rect x="3035.33" y="2019.42" width="8.77" height="3.78" fill="#c5c1c0"/><rect x="3035.33" y="2023.36" width="8.77" height="2.14" fill="#242424"/><rect x="3035.85" y="2023.86" width="1.38" height="1.15" fill="#d0d0d0"/><rect x="3042.04" y="2023.86" width="1.20" height="1.15" fill="#d0d0d0"/><rect x="3044.79" y="2019.42" width="8.77" height="3.78" fill="#c5c1c0"/><rect x="3044.79" y="2023.36" width="8.77" height="2.14" fill="#242424"/><rect x="3045.31" y="2023.86" width="1.38" height="1.15" fill="#d0d0d0"/><rect x="3051.50" y="2023.86" width="1.20" height="1.15" fill="#d0d0d0"/><rect x="3054.25" y="2019.42" width="8.77" height="3.78" fill="#c5c1c0"/><rect x="3054.25" y="2023.36" width="8.77" height="2.14" fill="#242424"/><rect x="3054.77" y="2023.86" width="1.38" height="1.15" fill="#d0d0d0"/><rect x="3060.96" y="2023.86" width="1.20" height="1.15" fill="#d0d0d0"/><rect x="3025.87" y="2026.16" width="8.77" height="3.78" fill="#c5c1c0"/><rect x="3025.87" y="2030.10" width="8.77" height="2.14" fill="#242424"/><rect x="3026.39" y="2030.60" width="1.38" height="1.15" fill="#d0d0d0"/><rect x="3032.58" y="2030.60" width="1.20" height="1.15" fill="#d0d0d0"/><rect x="3035.33" y="2026.16" width="8.77" height="3.78" fill="#c5c1c0"/><rect x="3035.33" y="2030.10" width="8.77" height="2.14" fill="#242424"/><rect x="3035.85" y="2030.60" width="1.38" height="1.15" fill="#d0d0d0"/><rect x="3042.04" y="2030.60" width="1.20" height="1.15" fill="#d0d0d0"/><rect x="3044.79" y="2026.16" width="8.77" height="3.78" fill="#c5c1c0"/><rect x="3044.79" y="2030.10" width="8.77" height="2.14" fill="#242424"/><rect x="3045.31" y="2030.60" width="1.38" height="1.15" fill="#d0d0d0"/><rect x="3051.50" y="2030.60" width="1.20" height="1.15" fill="#d0d0d0"/><rect x="3054.25" y="2026.16" width="8.77" height="3.78" fill="#c5c1c0"/><rect x="3054.25" y="2030.10" width="8.77" height="2.14" fill="#242424"/><rect x="3054.77" y="2030.60" width="1.38" height="1.15" fill="#d0d0d0"/><rect x="3060.96" y="2030.60" width="1.20" height="1.15" fill="#d0d0d0"/><rect x="3064.75" y="2008.24" width="12.90" height="2.96" fill="#6ae6fc"/><rect x="3082.29" y="2008.57" width="5.50" height="2.14" fill="#b05a2a"/><rect x="3089.17" y="2008.57" width="6.54" height="2.14" fill="#454545"/><rect x="3096.05" y="2008.57" width="2.75" height="2.14" fill="#f5b94f"/><rect x="3099.15" y="2008.57" width="2.75" height="2.14" fill="#1e201e"/><rect x="3064.75" y="2011.36" width="12.90" height="2.96" fill="#6ae6fc"/><rect x="3082.29" y="2011.69" width="5.50" height="2.14" fill="#b05a2a"/><rect x="3089.17" y="2011.69" width="6.54" height="2.14" fill="#454545"/><rect x="3096.05" y="2011.69" width="2.75" height="2.14" fill="#f5b94f"/><rect x="3099.15" y="2011.69" width="2.75" height="2.14" fill="#1e201e"/><rect x="3064.75" y="2014.48" width="12.90" height="2.96" fill="#6ae6fc"/><rect x="3082.29" y="2014.81" width="5.50" height="2.14" fill="#b05a2a"/><rect x="3089.17" y="2014.81" width="6.54" height="2.14" fill="#454545"/><rect x="3096.05" y="2014.81" width="2.75" height="2.14" fill="#f5b94f"/><rect x="3099.15" y="2014.81" width="2.75" height="2.14" fill="#1e201e"/><rect x="3064.75" y="2017.61" width="12.90" height="2.96" fill="#6ae6fc"/><rect x="3082.29" y="2017.94" width="5.50" height="2.14" fill="#b05a2a"/><rect x="3089.17" y="2017.94" width="6.54" height="2.14" fill="#454545"/><rect x="3096.05" y="2017.94" width="2.75" height="2.14" fill="#f5b94f"/><rect x="3099.15" y="2017.94" width="2.75" height="2.14" fill="#1e201e"/><rect x="3064.75" y="2020.73" width="12.90" height="2.96" fill="#6ae6fc"/><rect x="3082.29" y="2021.06" width="5.50" height="2.14" fill="#b05a2a"/><rect x="3089.17" y="2021.06" width="6.54" height="2.14" fill="#454545"/><rect x="3096.05" y="2021.06" width="2.75" height="2.14" fill="#f5b94f"/><rect x="3099.15" y="2021.06" width="2.75" height="2.14" fill="#1e201e"/><rect x="3064.75" y="2023.86" width="12.90" height="2.96" fill="#6ae6fc"/><rect x="3082.29" y="2024.18" width="5.50" height="2.14" fill="#b05a2a"/><rect x="3089.17" y="2024.18" width="6.54" height="2.14" fill="#454545"/><rect x="3096.05" y="2024.18" width="2.75" height="2.14" fill="#f5b94f"/><rect x="3099.15" y="2024.18" width="2.75" height="2.14" fill="#1e201e"/><rect x="3064.75" y="2026.98" width="12.90" height="2.96" fill="#6ae6fc"/><rect x="3082.29" y="2027.31" width="5.50" height="2.14" fill="#b05a2a"/><rect x="3089.17" y="2027.31" width="6.54" height="2.14" fill="#454545"/><rect x="3096.05" y="2027.31" width="2.75" height="2.14" fill="#f5b94f"/><rect x="3099.15" y="2027.31" width="2.75" height="2.14" fill="#1e201e"/><rect x="3064.75" y="2030.10" width="12.90" height="1.56" fill="#6ae6fc"/><rect x="3082.29" y="2030.43" width="5.50" height="1.07" fill="#b05a2a"/><rect x="3089.17" y="2030.43" width="6.54" height="1.07" fill="#454545"/><rect x="3096.05" y="2030.43" width="2.75" height="1.07" fill="#f5b94f"/><rect x="3099.15" y="2030.43" width="2.75" height="1.07" fill="#1e201e"/><rect x="3065.43" y="2006.10" width="4.82" height="1.32" fill="#9a9a9a" opacity="0.7"/><rect x="3082.81" y="2006.10" width="2.58" height="1.32" fill="#9a9a9a" opacity="0.7"/><rect x="3089.69" y="2006.10" width="3.10" height="1.32" fill="#9a9a9a" opacity="0.7"/><rect x="3110.33" y="2005.11" width="123.67" height="27.78" fill="#333"/><rect x="3111.27" y="2002.89" width="1.72" height="1.64" fill="#f5b94f"/><rect x="3114.02" y="2002.89" width="1.72" height="1.64" fill="#d0d0d0"/><rect x="3211.20" y="2002.98" width="6.19" height="1.32" fill="#9a9a9a" opacity="0.7"/><rect x="3219.80" y="2002.98" width="6.88" height="1.32" fill="#9a9a9a" opacity="0.7"/><rect x="3119.10" y="2006.10" width="113.82" height="14.80" fill="#854b27"/><rect x="3119.36" y="2013.25" width="43.00" height="0.74" fill="#8fe84f"/><rect x="3119.36" y="2013.50" width="113.35" height="0.29" fill="#8fe84f"/><rect x="3119.18" y="2006.18" width="1.55" height="1.64" fill="#d7302a"/><rect x="3231.33" y="2006.18" width="1.55" height="1.64" fill="#d7302a"/><rect x="3113.16" y="2007.58" width="2.92" height="2.96" fill="#dc3a2c" opacity="0.6"/><rect x="3113.16" y="2014.65" width="2.92" height="2.96" fill="#8ee64c" opacity="0.6"/><rect x="3113.16" y="2021.55" width="2.92" height="2.96" fill="#dc3a2c" opacity="0.6"/><rect x="3119.36" y="2021.88" width="3.78" height="1.32" fill="#dc3a2c"/><rect x="3119.61" y="2024.18" width="5.16" height="1.32" fill="#f0712c"/><rect x="3127.01" y="2021.72" width="7.40" height="2.14" fill="#f0712c"/><rect x="3127.01" y="2023.86" width="7.40" height="2.14" fill="#7a4525"/><rect x="3136.30" y="2022.87" width="6.62" height="1.81" fill="#7a4525"/><rect x="3210.26" y="2021.72" width="9.29" height="1.81" fill="#4f7a33"/><rect x="3223.16" y="2021.55" width="9.12" height="2.14" fill="#46587a"/><rect x="3223.16" y="2024.02" width="4.30" height="2.14" fill="#46587a"/><rect x="3227.80" y="2024.02" width="4.30" height="2.14" fill="#46587a"/><rect x="3210.69" y="2024.35" width="4.82" height="1.32" fill="#dc3a2c"/><rect x="3114.71" y="2027.23" width="4.47" height="1.23" fill="#b0b0b0" opacity="0.75"/><rect x="3127.87" y="2027.23" width="8.60" height="1.23" fill="#b0b0b0" opacity="0.75"/><rect x="3137.67" y="2027.23" width="2.92" height="1.23" fill="#b0b0b0" opacity="0.75"/><rect x="3162.36" y="2027.23" width="3.10" height="1.23" fill="#b0b0b0" opacity="0.75"/><rect x="3183.00" y="2027.23" width="5.85" height="1.23" fill="#b0b0b0" opacity="0.75"/><rect x="3193.23" y="2027.23" width="7.40" height="1.23" fill="#b0b0b0" opacity="0.75"/><rect x="3203.55" y="2027.23" width="5.50" height="1.23" fill="#b0b0b0" opacity="0.75"/><rect x="3213.87" y="2027.23" width="6.71" height="1.23" fill="#b0b0b0" opacity="0.75"/><rect x="3224.28" y="2027.23" width="6.02" height="1.23" fill="#b0b0b0" opacity="0.75"/><rect x="3185.15" y="2031.50" width="6.36" height="1.23" fill="#b0b0b0" opacity="0.75"/><rect x="3195.47" y="2031.50" width="6.36" height="1.23" fill="#b0b0b0" opacity="0.75"/><rect x="3206.47" y="2031.50" width="2.92" height="1.23" fill="#b0b0b0" opacity="0.75"/><rect x="3216.19" y="2031.50" width="3.61" height="1.23" fill="#b0b0b0" opacity="0.75"/><rect x="3226.43" y="2031.50" width="6.71" height="1.23" fill="#b0b0b0" opacity="0.75"/><rect x="3119.61" y="2027.31" width="6.88" height="2.14" fill="#4a4a4a"/><rect x="3119.61" y="2030.27" width="6.88" height="2.14" fill="#4a4a4a"/><rect x="3159.35" y="2030.27" width="7.40" height="2.14" fill="#4a4a4a"/><rect x="3169.15" y="2027.47" width="4.13" height="2.14" fill="#586a5d"/><rect x="3169.15" y="2030.27" width="8.94" height="2.14" fill="#4a4a4a"/><circle cx="3215.50" cy="2030.84" r="1.5" fill="none" stroke="#a9cdac" stroke-width=".6"/><circle cx="3225.82" cy="2030.84" r="1.5" fill="none" stroke="#a9cdac" stroke-width=".6"/><rect x="3234.34" y="2002.15" width="23.99" height="2.96" fill="#3a413a"/><rect x="3234.34" y="2005.11" width="23.99" height="27.78" fill="#333"/><rect x="3234.94" y="2002.81" width="1.89" height="1.81" fill="#f5b94f"/><rect x="3237.86" y="2002.98" width="5.16" height="1.32" fill="#b0b0b0" opacity="0.8"/><rect x="3238.04" y="2006.10" width="4.47" height="1.23" fill="#b0b0b0" opacity="0.75"/><rect x="3249.30" y="2006.10" width="6.02" height="1.23" fill="#b0b0b0" opacity="0.75"/><rect x="3235.80" y="2011.36" width="5.33" height="1.23" fill="#b0b0b0" opacity="0.75"/><rect x="3237.86" y="2014.40" width="4.82" height="1.23" fill="#b0b0b0" opacity="0.75"/><rect x="3250.51" y="2009.39" width="3.61" height="1.23" fill="#b0b0b0" opacity="0.75"/><rect x="3249.30" y="2016.21" width="6.02" height="1.23" fill="#b0b0b0" opacity="0.75"/><rect x="3249.22" y="2019.91" width="6.45" height="1.23" fill="#b0b0b0" opacity="0.75"/><rect x="3237.86" y="2021.39" width="4.73" height="1.23" fill="#b0b0b0" opacity="0.75"/><rect x="3251.80" y="2026.73" width="1.03" height="1.23" fill="#b0b0b0" opacity="0.75"/><rect x="3235.37" y="2008.32" width="4.64" height="2.05" fill="#1e201e"/><rect x="3240.53" y="2008.32" width="4.64" height="2.05" fill="#1e201e"/><rect x="3235.37" y="2023.94" width="9.80" height="2.05" fill="#1e201e"/><rect x="3235.37" y="2027.55" width="9.80" height="2.05" fill="#1e201e"/><rect x="3235.54" y="2030.27" width="2.58" height="1.81" fill="#f5a945"/><rect x="3247.75" y="2030.18" width="5.25" height="2.05" fill="#1e201e"/><rect x="3253.43" y="2030.18" width="3.35" height="2.05" fill="#1e201e"/></g><g clip-path="url(#tc2)"><rect x="3234.34" y="2002.15" width="23.99" height="2.96" fill="#3a413a" opacity="0.45"/><rect x="3234.34" y="2005.11" width="23.99" height="27.78" fill="#333" opacity="0.45"/><rect x="3234.94" y="2002.81" width="1.89" height="1.81" fill="#f5b94f" opacity="0.45"/><rect x="3237.86" y="2002.98" width="5.16" height="1.32" fill="#b0b0b0" opacity="0.36000000000000004"/><rect x="3238.04" y="2006.10" width="4.47" height="1.23" fill="#b0b0b0" opacity="0.3375"/><rect x="3249.30" y="2006.10" width="6.02" height="1.23" fill="#b0b0b0" opacity="0.3375"/><rect x="3235.80" y="2011.36" width="5.33" height="1.23" fill="#b0b0b0" opacity="0.3375"/><rect x="3237.86" y="2014.40" width="4.82" height="1.23" fill="#b0b0b0" opacity="0.3375"/><rect x="3250.51" y="2009.39" width="3.61" height="1.23" fill="#b0b0b0" opacity="0.3375"/><rect x="3249.30" y="2016.21" width="6.02" height="1.23" fill="#b0b0b0" opacity="0.3375"/><rect x="3249.22" y="2019.91" width="6.45" height="1.23" fill="#b0b0b0" opacity="0.3375"/><rect x="3237.86" y="2021.39" width="4.73" height="1.23" fill="#b0b0b0" opacity="0.3375"/><rect x="3251.80" y="2026.73" width="1.03" height="1.23" fill="#b0b0b0" opacity="0.3375"/><rect x="3235.37" y="2008.32" width="4.64" height="2.05" fill="#1e201e" opacity="0.45"/><rect x="3240.53" y="2008.32" width="4.64" height="2.05" fill="#1e201e" opacity="0.45"/><rect x="3235.37" y="2023.94" width="9.80" height="2.05" fill="#1e201e" opacity="0.45"/><rect x="3235.37" y="2027.55" width="9.80" height="2.05" fill="#1e201e" opacity="0.45"/><rect x="3235.54" y="2030.27" width="2.58" height="1.81" fill="#f5a945" opacity="0.45"/><rect x="3247.75" y="2030.18" width="5.25" height="2.05" fill="#1e201e" opacity="0.45"/><rect x="3253.43" y="2030.18" width="3.35" height="2.05" fill="#1e201e" opacity="0.45"/></g></svg>
<div style="left:3284.5px;top:2001.5px;width:38px;height:38px;background:#2a2a2a;border-radius:50%;"></div>
<svg style="left:3284px;top:2001px" width="40" height="40" viewBox="3284 2001 40 40"><path d="M3303.5 2009.5l10 19.5h-20z" fill="#070707"/></svg>
</body></html>
